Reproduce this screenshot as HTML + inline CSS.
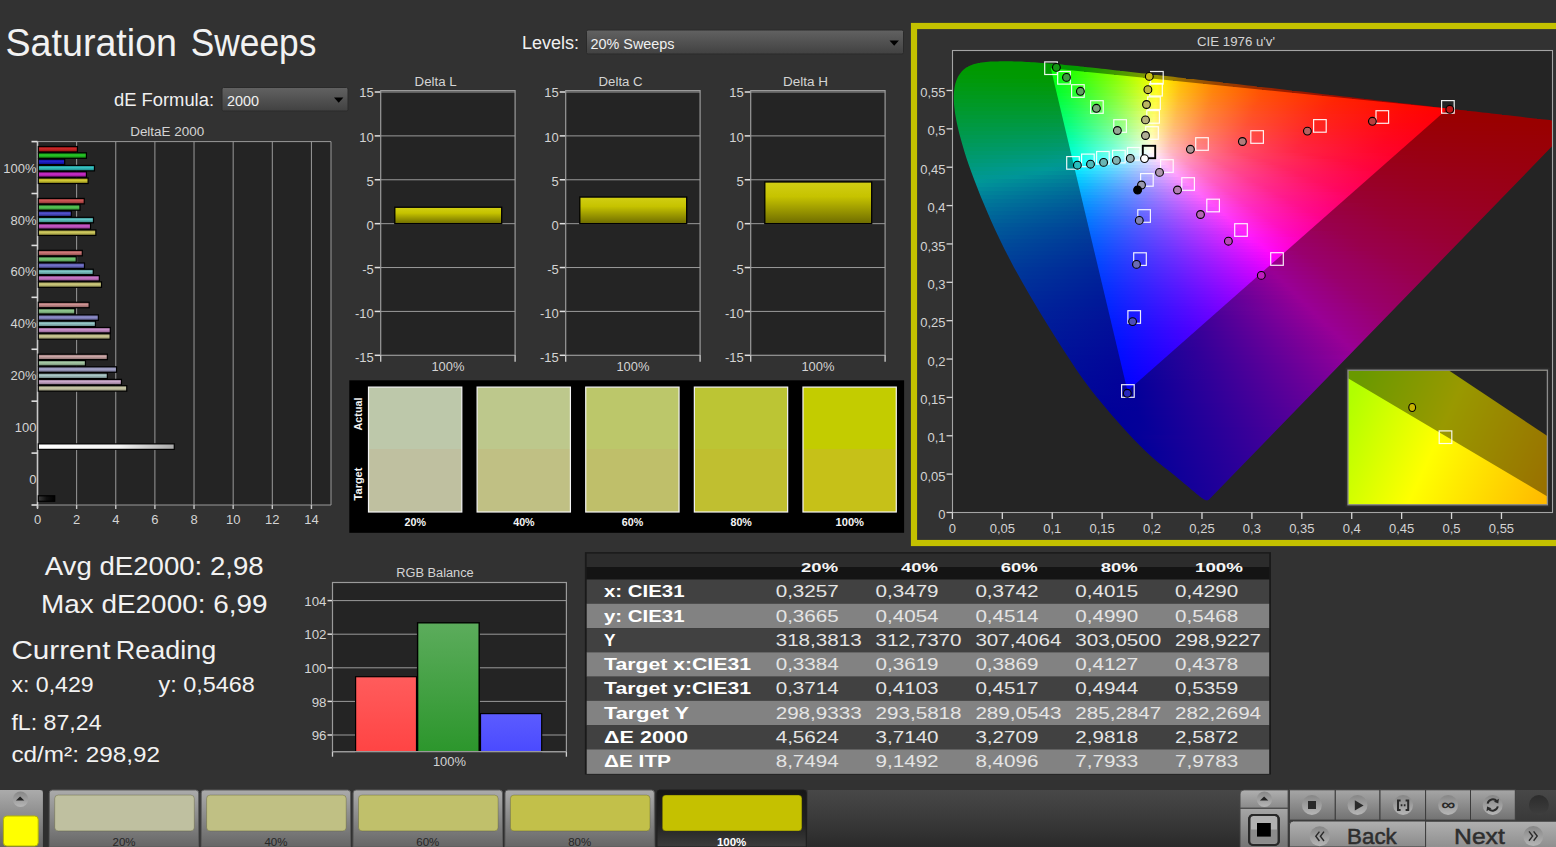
<!DOCTYPE html>
<html><head><meta charset="utf-8"><title>Saturation Sweeps</title>
<style>html,body{margin:0;padding:0;background:#323232;overflow:hidden}svg{display:block}text{font-family:"Liberation Sans",sans-serif}</style>
</head><body>
<svg width="1556" height="847" viewBox="0 0 1556 847">
<defs>
<linearGradient id="cb" x1="0" y1="0" x2="0" y2="1"><stop offset="0" stop-color="#626262"/><stop offset="1" stop-color="#414141"/></linearGradient>
<linearGradient id="b00" x1="0" y1="0" x2="0" y2="1"><stop offset="0" stop-color="#840c0c"/><stop offset="0.4" stop-color="#ce2a2a"/><stop offset="1" stop-color="#840c0c"/></linearGradient>
<linearGradient id="b01" x1="0" y1="0" x2="0" y2="1"><stop offset="0" stop-color="#0c810c"/><stop offset="0.4" stop-color="#2aca2a"/><stop offset="1" stop-color="#0c810c"/></linearGradient>
<linearGradient id="b02" x1="0" y1="0" x2="0" y2="1"><stop offset="0" stop-color="#080887"/><stop offset="0.4" stop-color="#2424d1"/><stop offset="1" stop-color="#080887"/></linearGradient>
<linearGradient id="b03" x1="0" y1="0" x2="0" y2="1"><stop offset="0" stop-color="#167c7c"/><stop offset="0.4" stop-color="#38c3c3"/><stop offset="1" stop-color="#167c7c"/></linearGradient>
<linearGradient id="b04" x1="0" y1="0" x2="0" y2="1"><stop offset="0" stop-color="#831083"/><stop offset="0.4" stop-color="#cc2fcc"/><stop offset="1" stop-color="#831083"/></linearGradient>
<linearGradient id="b05" x1="0" y1="0" x2="0" y2="1"><stop offset="0" stop-color="#8b8416"/><stop offset="0.4" stop-color="#d6ce38"/><stop offset="1" stop-color="#8b8416"/></linearGradient>
<linearGradient id="b10" x1="0" y1="0" x2="0" y2="1"><stop offset="0" stop-color="#842e2e"/><stop offset="0.4" stop-color="#ce5858"/><stop offset="1" stop-color="#842e2e"/></linearGradient>
<linearGradient id="b11" x1="0" y1="0" x2="0" y2="1"><stop offset="0" stop-color="#2e822e"/><stop offset="0.4" stop-color="#58cb58"/><stop offset="1" stop-color="#2e822e"/></linearGradient>
<linearGradient id="b12" x1="0" y1="0" x2="0" y2="1"><stop offset="0" stop-color="#2b2b86"/><stop offset="0.4" stop-color="#5454d0"/><stop offset="1" stop-color="#2b2b86"/></linearGradient>
<linearGradient id="b13" x1="0" y1="0" x2="0" y2="1"><stop offset="0" stop-color="#357e7e"/><stop offset="0.4" stop-color="#62c6c6"/><stop offset="1" stop-color="#357e7e"/></linearGradient>
<linearGradient id="b14" x1="0" y1="0" x2="0" y2="1"><stop offset="0" stop-color="#833083"/><stop offset="0.4" stop-color="#cc5bcc"/><stop offset="1" stop-color="#833083"/></linearGradient>
<linearGradient id="b15" x1="0" y1="0" x2="0" y2="1"><stop offset="0" stop-color="#898435"/><stop offset="0.4" stop-color="#d4ce62"/><stop offset="1" stop-color="#898435"/></linearGradient>
<linearGradient id="b20" x1="0" y1="0" x2="0" y2="1"><stop offset="0" stop-color="#844646"/><stop offset="0.4" stop-color="#ce7878"/><stop offset="1" stop-color="#844646"/></linearGradient>
<linearGradient id="b21" x1="0" y1="0" x2="0" y2="1"><stop offset="0" stop-color="#468346"/><stop offset="0.4" stop-color="#78cc78"/><stop offset="1" stop-color="#468346"/></linearGradient>
<linearGradient id="b22" x1="0" y1="0" x2="0" y2="1"><stop offset="0" stop-color="#434385"/><stop offset="0.4" stop-color="#7676cf"/><stop offset="1" stop-color="#434385"/></linearGradient>
<linearGradient id="b23" x1="0" y1="0" x2="0" y2="1"><stop offset="0" stop-color="#4b8080"/><stop offset="0.4" stop-color="#80c8c8"/><stop offset="1" stop-color="#4b8080"/></linearGradient>
<linearGradient id="b24" x1="0" y1="0" x2="0" y2="1"><stop offset="0" stop-color="#834883"/><stop offset="0.4" stop-color="#cd7bcd"/><stop offset="1" stop-color="#834883"/></linearGradient>
<linearGradient id="b25" x1="0" y1="0" x2="0" y2="1"><stop offset="0" stop-color="#87844b"/><stop offset="0.4" stop-color="#d2ce80"/><stop offset="1" stop-color="#87844b"/></linearGradient>
<linearGradient id="b30" x1="0" y1="0" x2="0" y2="1"><stop offset="0" stop-color="#845959"/><stop offset="0.4" stop-color="#ce9393"/><stop offset="1" stop-color="#845959"/></linearGradient>
<linearGradient id="b31" x1="0" y1="0" x2="0" y2="1"><stop offset="0" stop-color="#598359"/><stop offset="0.4" stop-color="#93cc93"/><stop offset="1" stop-color="#598359"/></linearGradient>
<linearGradient id="b32" x1="0" y1="0" x2="0" y2="1"><stop offset="0" stop-color="#575785"/><stop offset="0.4" stop-color="#9191cf"/><stop offset="1" stop-color="#575785"/></linearGradient>
<linearGradient id="b33" x1="0" y1="0" x2="0" y2="1"><stop offset="0" stop-color="#5d8181"/><stop offset="0.4" stop-color="#98caca"/><stop offset="1" stop-color="#5d8181"/></linearGradient>
<linearGradient id="b34" x1="0" y1="0" x2="0" y2="1"><stop offset="0" stop-color="#845a84"/><stop offset="0.4" stop-color="#cd94cd"/><stop offset="1" stop-color="#845a84"/></linearGradient>
<linearGradient id="b35" x1="0" y1="0" x2="0" y2="1"><stop offset="0" stop-color="#86845d"/><stop offset="0.4" stop-color="#d1ce98"/><stop offset="1" stop-color="#86845d"/></linearGradient>
<linearGradient id="b40" x1="0" y1="0" x2="0" y2="1"><stop offset="0" stop-color="#846a6a"/><stop offset="0.4" stop-color="#cea9a9"/><stop offset="1" stop-color="#846a6a"/></linearGradient>
<linearGradient id="b41" x1="0" y1="0" x2="0" y2="1"><stop offset="0" stop-color="#6a836a"/><stop offset="0.4" stop-color="#a9cda9"/><stop offset="1" stop-color="#6a836a"/></linearGradient>
<linearGradient id="b42" x1="0" y1="0" x2="0" y2="1"><stop offset="0" stop-color="#696985"/><stop offset="0.4" stop-color="#a8a8ce"/><stop offset="1" stop-color="#696985"/></linearGradient>
<linearGradient id="b43" x1="0" y1="0" x2="0" y2="1"><stop offset="0" stop-color="#6c8282"/><stop offset="0.4" stop-color="#adcbcb"/><stop offset="1" stop-color="#6c8282"/></linearGradient>
<linearGradient id="b44" x1="0" y1="0" x2="0" y2="1"><stop offset="0" stop-color="#846a84"/><stop offset="0.4" stop-color="#cdabcd"/><stop offset="1" stop-color="#846a84"/></linearGradient>
<linearGradient id="b45" x1="0" y1="0" x2="0" y2="1"><stop offset="0" stop-color="#85846c"/><stop offset="0.4" stop-color="#cfcead"/><stop offset="1" stop-color="#85846c"/></linearGradient>
<linearGradient id="bw" x1="0" y1="0" x2="1" y2="0"><stop offset="0" stop-color="#fff"/><stop offset="0.6" stop-color="#f4f4f4"/><stop offset="1" stop-color="#a8a8a8"/></linearGradient>
<linearGradient id="bk" x1="0" y1="0" x2="1" y2="0"><stop offset="0" stop-color="#3a3a3a"/><stop offset="0.5" stop-color="#101010"/><stop offset="1" stop-color="#000"/></linearGradient>
<linearGradient id="yb" x1="0" y1="0" x2="0" y2="1"><stop offset="0" stop-color="#d2cf14"/><stop offset="0.35" stop-color="#c6c300"/><stop offset="1" stop-color="#6e6c00"/></linearGradient>
<clipPath id="cplot"><rect x="952.5" y="50.5" width="600.0" height="462.0"/></clipPath>
<clipPath id="cloc" clip-path="url(#cplot)"><path d="M1208.8 499.7L1208.7 499.8L1208.7 499.8L1208.6 499.8L1208.5 499.9L1208.5 499.9L1208.4 500.0L1208.3 500.0L1208.2 500.1L1208.1 500.1L1207.9 500.2L1207.8 500.2L1207.7 500.2L1207.5 500.3L1207.3 500.3L1207.1 500.3L1206.9 500.3L1206.7 500.3L1206.5 500.3L1206.3 500.2L1206.0 500.2L1205.6 500.2L1205.2 500.0L1204.8 499.8L1204.2 499.5L1203.5 499.1L1202.7 498.5L1201.7 497.9L1200.6 497.1L1199.4 496.2L1198.1 495.1L1196.6 493.9L1195.0 492.6L1193.2 491.1L1191.2 489.4L1189.1 487.6L1186.7 485.6L1184.1 483.4L1181.3 481.0L1178.2 478.5L1175.0 475.8L1171.6 473.1L1168.1 470.2L1164.4 467.4L1160.4 464.2L1156.1 460.7L1151.3 456.5L1145.9 451.5L1139.8 445.5L1132.9 438.4L1125.5 430.4L1117.9 421.9L1110.2 413.2L1102.9 404.5L1096.2 396.4L1090.3 388.9L1085.1 382.0L1080.4 375.5L1075.9 369.0L1071.5 362.3L1066.9 355.3L1062.0 347.8L1056.9 339.7L1051.6 331.2L1046.1 322.4L1040.6 313.4L1035.1 304.2L1029.6 295.0L1024.3 285.8L1019.1 276.6L1014.0 267.4L1009.2 258.2L1004.4 249.0L999.9 239.8L995.6 230.8L991.5 221.8L987.7 213.0L984.0 204.3L980.5 195.9L977.3 187.7L974.2 179.8L971.4 172.2L968.8 164.9L966.4 157.9L964.3 151.2L962.4 144.8L960.7 138.8L959.2 133.2L957.9 127.8L956.8 122.7L955.9 118.0L955.1 113.5L954.6 109.3L954.1 105.3L953.9 101.6L953.8 98.1L953.8 94.8L954.0 91.7L954.4 88.8L954.8 86.1L955.4 83.5L956.2 81.1L957.0 78.9L958.0 76.8L959.1 74.9L960.4 73.2L961.7 71.6L963.1 70.1L964.7 68.8L966.3 67.6L968.0 66.6L969.8 65.7L971.6 64.9L973.5 64.2L975.5 63.7L977.5 63.2L979.6 62.8L981.7 62.4L983.9 62.2L986.1 61.9L988.3 61.8L990.6 61.6L993.0 61.5L995.3 61.4L997.6 61.4L1000.0 61.3L1002.4 61.3L1004.7 61.3L1007.1 61.3L1009.5 61.3L1011.8 61.3L1014.2 61.4L1016.6 61.5L1019.0 61.5L1021.5 61.6L1023.9 61.8L1026.4 61.9L1028.9 62.0L1031.5 62.2L1034.1 62.3L1036.7 62.5L1039.3 62.7L1042.0 62.9L1044.7 63.1L1047.5 63.3L1050.3 63.6L1053.1 63.8L1056.0 64.1L1058.9 64.3L1061.9 64.6L1064.9 64.9L1068.0 65.2L1071.1 65.5L1074.2 65.8L1077.4 66.1L1080.7 66.5L1084.0 66.8L1087.4 67.2L1090.9 67.5L1094.4 67.9L1097.9 68.3L1101.6 68.7L1105.2 69.1L1109.0 69.5L1112.8 69.9L1116.7 70.4L1120.6 70.8L1124.6 71.3L1128.7 71.7L1132.8 72.2L1137.1 72.7L1141.3 73.2L1145.7 73.6L1150.1 74.1L1154.7 74.7L1159.2 75.2L1163.9 75.7L1168.6 76.3L1173.4 76.8L1178.2 77.4L1183.2 77.9L1188.2 78.5L1193.3 79.1L1198.4 79.7L1203.6 80.3L1208.9 80.9L1214.3 81.5L1219.7 82.1L1225.2 82.8L1230.8 83.4L1236.4 84.1L1242.1 84.7L1247.9 85.4L1253.7 86.1L1259.5 86.7L1265.4 87.4L1271.3 88.1L1277.3 88.8L1283.4 89.5L1289.4 90.2L1295.5 90.9L1301.6 91.6L1307.7 92.3L1313.8 93.0L1319.8 93.7L1325.8 94.4L1331.7 95.1L1337.6 95.7L1343.5 96.4L1349.3 97.1L1355.2 97.8L1361.0 98.4L1366.9 99.1L1372.6 99.8L1378.4 100.4L1384.0 101.1L1389.6 101.7L1395.1 102.3L1400.4 102.9L1405.6 103.5L1410.8 104.1L1415.8 104.7L1420.8 105.3L1425.6 105.8L1430.4 106.4L1435.0 106.9L1439.6 107.4L1444.0 108.0L1448.3 108.5L1452.5 108.9L1456.5 109.4L1460.5 109.9L1464.3 110.3L1468.1 110.7L1471.8 111.2L1475.4 111.6L1478.9 112.0L1482.3 112.4L1485.6 112.7L1488.6 113.1L1491.4 113.4L1494.0 113.7L1496.4 114.0L1498.9 114.3L1501.6 114.6L1504.5 114.9L1508.0 115.3L1511.9 115.8L1516.3 116.3L1520.9 116.8L1525.6 117.4L1530.2 117.9L1534.4 118.4L1538.3 118.8L1541.6 119.2L1544.7 119.5L1547.3 119.8L1549.7 120.1L1551.9 120.4L1553.9 120.6L1555.7 120.8L1557.4 121.0L1559.0 121.2L1560.6 121.4L1562.2 121.6L1563.8 121.8L1565.5 121.9L1567.0 122.1L1568.5 122.3L1570.0 122.5L1571.2 122.6L1572.4 122.7L1573.3 122.8L1574.1 122.9L1574.6 123.0L1574.8 123.0L1574.7 123.0Z"/></clipPath>
<clipPath id="ctri"><path d="M1447.9 108.4L1050.8 68.3L1127.5 391.1Z"/></clipPath>
<linearGradient id="d8" gradientUnits="userSpaceOnUse" x1="980.0" x2="1039.0" y1="0" y2="0"><stop offset="0.000" stop-color="#009900"/><stop offset="1.000" stop-color="#009900"/></linearGradient>
<linearGradient id="d12" gradientUnits="userSpaceOnUse" x1="968.0" x2="1083.0" y1="0" y2="0"><stop offset="0.000" stop-color="#009900"/><stop offset="0.696" stop-color="#009900"/><stop offset="0.948" stop-color="#039900"/><stop offset="1.000" stop-color="#0c9900"/></linearGradient>
<linearGradient id="d16" gradientUnits="userSpaceOnUse" x1="961.0" x2="1119.0" y1="0" y2="0"><stop offset="0.000" stop-color="#009900"/><stop offset="0.506" stop-color="#009900"/><stop offset="0.734" stop-color="#029900"/><stop offset="1.000" stop-color="#479900"/></linearGradient>
<linearGradient id="d20" gradientUnits="userSpaceOnUse" x1="958.0" x2="1152.0" y1="0" y2="0"><stop offset="0.000" stop-color="#009904"/><stop offset="0.412" stop-color="#009900"/><stop offset="0.619" stop-color="#039900"/><stop offset="0.866" stop-color="#559900"/><stop offset="1.000" stop-color="#8c9900"/></linearGradient>
<linearGradient id="d24" gradientUnits="userSpaceOnUse" x1="956.0" x2="1185.0" y1="0" y2="0"><stop offset="0.000" stop-color="#009908"/><stop offset="0.349" stop-color="#009901"/><stop offset="0.533" stop-color="#029900"/><stop offset="0.742" stop-color="#559900"/><stop offset="0.882" stop-color="#999700"/><stop offset="0.987" stop-color="#996a00"/><stop offset="1.000" stop-color="#996600"/></linearGradient>
<linearGradient id="d28" gradientUnits="userSpaceOnUse" x1="954.0" x2="1222.0" y1="0" y2="0"><stop offset="0.000" stop-color="#00990c"/><stop offset="0.299" stop-color="#009906"/><stop offset="0.466" stop-color="#039901"/><stop offset="0.642" stop-color="#559900"/><stop offset="0.757" stop-color="#999800"/><stop offset="0.847" stop-color="#996b00"/><stop offset="0.981" stop-color="#994400"/><stop offset="1.000" stop-color="#994000"/></linearGradient>
<linearGradient id="d32" gradientUnits="userSpaceOnUse" x1="953.0" x2="1256.0" y1="0" y2="0"><stop offset="0.000" stop-color="#009911"/><stop offset="0.264" stop-color="#00990b"/><stop offset="0.419" stop-color="#039906"/><stop offset="0.571" stop-color="#549900"/><stop offset="0.673" stop-color="#999700"/><stop offset="0.749" stop-color="#996b00"/><stop offset="0.868" stop-color="#994400"/><stop offset="1.000" stop-color="#992b00"/></linearGradient>
<linearGradient id="d36" gradientUnits="userSpaceOnUse" x1="953.0" x2="1291.0" y1="0" y2="0"><stop offset="0.000" stop-color="#009915"/><stop offset="0.237" stop-color="#009910"/><stop offset="0.376" stop-color="#02990c"/><stop offset="0.512" stop-color="#549907"/><stop offset="0.604" stop-color="#999602"/><stop offset="0.672" stop-color="#996a00"/><stop offset="0.778" stop-color="#994300"/><stop offset="0.953" stop-color="#992100"/><stop offset="1.000" stop-color="#991c00"/></linearGradient>
<linearGradient id="d40" gradientUnits="userSpaceOnUse" x1="953.0" x2="1328.0" y1="0" y2="0"><stop offset="0.000" stop-color="#00991a"/><stop offset="0.213" stop-color="#009915"/><stop offset="0.341" stop-color="#039912"/><stop offset="0.461" stop-color="#54990d"/><stop offset="0.541" stop-color="#99980a"/><stop offset="0.603" stop-color="#996b04"/><stop offset="0.696" stop-color="#994300"/><stop offset="0.851" stop-color="#992200"/><stop offset="1.000" stop-color="#991000"/></linearGradient>
<linearGradient id="d44" gradientUnits="userSpaceOnUse" x1="953.0" x2="1363.0" y1="0" y2="0"><stop offset="0.000" stop-color="#00991e"/><stop offset="0.195" stop-color="#00991b"/><stop offset="0.312" stop-color="#029918"/><stop offset="0.422" stop-color="#549914"/><stop offset="0.495" stop-color="#999711"/><stop offset="0.551" stop-color="#996a0a"/><stop offset="0.637" stop-color="#994204"/><stop offset="0.778" stop-color="#992100"/><stop offset="0.973" stop-color="#990a00"/><stop offset="1.000" stop-color="#990800"/></linearGradient>
<linearGradient id="d48" gradientUnits="userSpaceOnUse" x1="953.0" x2="1397.0" y1="0" y2="0"><stop offset="0.000" stop-color="#009923"/><stop offset="0.180" stop-color="#009920"/><stop offset="0.291" stop-color="#02991e"/><stop offset="0.390" stop-color="#54991c"/><stop offset="0.455" stop-color="#999819"/><stop offset="0.505" stop-color="#996c11"/><stop offset="0.581" stop-color="#994409"/><stop offset="0.707" stop-color="#992202"/><stop offset="0.887" stop-color="#990b00"/><stop offset="1.000" stop-color="#990200"/></linearGradient>
<linearGradient id="d52" gradientUnits="userSpaceOnUse" x1="953.0" x2="1432.0" y1="0" y2="0"><stop offset="0.000" stop-color="#009927"/><stop offset="0.167" stop-color="#009926"/><stop offset="0.271" stop-color="#039924"/><stop offset="0.361" stop-color="#549923"/><stop offset="0.422" stop-color="#999721"/><stop offset="0.468" stop-color="#996a17"/><stop offset="0.539" stop-color="#99430d"/><stop offset="0.656" stop-color="#992205"/><stop offset="0.823" stop-color="#990a00"/><stop offset="0.990" stop-color="#990000"/><stop offset="1.000" stop-color="#990000"/></linearGradient>
<linearGradient id="d56" gradientUnits="userSpaceOnUse" x1="953.0" x2="1466.0" y1="0" y2="0"><stop offset="0.000" stop-color="#00992c"/><stop offset="0.156" stop-color="#00992b"/><stop offset="0.253" stop-color="#02992b"/><stop offset="0.337" stop-color="#54992b"/><stop offset="0.394" stop-color="#999629"/><stop offset="0.437" stop-color="#99691d"/><stop offset="0.503" stop-color="#994212"/><stop offset="0.612" stop-color="#992108"/><stop offset="0.768" stop-color="#990a02"/><stop offset="0.924" stop-color="#990000"/><stop offset="1.000" stop-color="#990000"/></linearGradient>
<linearGradient id="d60" gradientUnits="userSpaceOnUse" x1="953.0" x2="1501.0" y1="0" y2="0"><stop offset="0.000" stop-color="#009931"/><stop offset="0.146" stop-color="#009931"/><stop offset="0.239" stop-color="#039932"/><stop offset="0.316" stop-color="#549932"/><stop offset="0.367" stop-color="#999832"/><stop offset="0.405" stop-color="#996b24"/><stop offset="0.464" stop-color="#994517"/><stop offset="0.560" stop-color="#99230c"/><stop offset="0.706" stop-color="#990a04"/><stop offset="0.852" stop-color="#990000"/><stop offset="0.998" stop-color="#990000"/><stop offset="1.000" stop-color="#990000"/></linearGradient>
<linearGradient id="d64" gradientUnits="userSpaceOnUse" x1="953.0" x2="1536.0" y1="0" y2="0"><stop offset="0.000" stop-color="#009936"/><stop offset="0.137" stop-color="#009937"/><stop offset="0.225" stop-color="#029939"/><stop offset="0.297" stop-color="#54993a"/><stop offset="0.345" stop-color="#99973b"/><stop offset="0.381" stop-color="#996a2a"/><stop offset="0.436" stop-color="#99431c"/><stop offset="0.527" stop-color="#992210"/><stop offset="0.664" stop-color="#990a07"/><stop offset="0.801" stop-color="#990002"/><stop offset="0.938" stop-color="#990000"/><stop offset="1.000" stop-color="#990000"/></linearGradient>
<linearGradient id="d68" gradientUnits="userSpaceOnUse" x1="954.0" x2="1552.0" y1="0" y2="0"><stop offset="0.000" stop-color="#00993b"/><stop offset="0.134" stop-color="#00993d"/><stop offset="0.219" stop-color="#029940"/><stop offset="0.288" stop-color="#549943"/><stop offset="0.334" stop-color="#999644"/><stop offset="0.370" stop-color="#996931"/><stop offset="0.423" stop-color="#994221"/><stop offset="0.512" stop-color="#992113"/><stop offset="0.645" stop-color="#990909"/><stop offset="0.776" stop-color="#990004"/><stop offset="0.910" stop-color="#990000"/><stop offset="1.000" stop-color="#990000"/></linearGradient>
<linearGradient id="d72" gradientUnits="userSpaceOnUse" x1="955.0" x2="1552.0" y1="0" y2="0"><stop offset="0.000" stop-color="#009940"/><stop offset="0.134" stop-color="#009944"/><stop offset="0.219" stop-color="#039947"/><stop offset="0.286" stop-color="#54994b"/><stop offset="0.332" stop-color="#99984e"/><stop offset="0.365" stop-color="#996b39"/><stop offset="0.417" stop-color="#994427"/><stop offset="0.503" stop-color="#992317"/><stop offset="0.637" stop-color="#99090c"/><stop offset="0.767" stop-color="#990006"/><stop offset="0.901" stop-color="#990002"/><stop offset="1.000" stop-color="#990000"/></linearGradient>
<linearGradient id="d76" gradientUnits="userSpaceOnUse" x1="956.0" x2="1552.0" y1="0" y2="0"><stop offset="0.000" stop-color="#009945"/><stop offset="0.134" stop-color="#00994a"/><stop offset="0.218" stop-color="#02994f"/><stop offset="0.285" stop-color="#549954"/><stop offset="0.331" stop-color="#999657"/><stop offset="0.364" stop-color="#996a40"/><stop offset="0.416" stop-color="#99432c"/><stop offset="0.502" stop-color="#99221b"/><stop offset="0.636" stop-color="#99090e"/><stop offset="0.762" stop-color="#990008"/><stop offset="0.896" stop-color="#990003"/><stop offset="1.000" stop-color="#990001"/></linearGradient>
<linearGradient id="d80" gradientUnits="userSpaceOnUse" x1="957.0" x2="1552.0" y1="0" y2="0"><stop offset="0.000" stop-color="#00994a"/><stop offset="0.134" stop-color="#009951"/><stop offset="0.218" stop-color="#029957"/><stop offset="0.284" stop-color="#54995d"/><stop offset="0.328" stop-color="#999862"/><stop offset="0.361" stop-color="#996b48"/><stop offset="0.412" stop-color="#994432"/><stop offset="0.494" stop-color="#99231f"/><stop offset="0.629" stop-color="#990911"/><stop offset="0.755" stop-color="#99000a"/><stop offset="0.889" stop-color="#990005"/><stop offset="1.000" stop-color="#990002"/></linearGradient>
<linearGradient id="d84" gradientUnits="userSpaceOnUse" x1="958.0" x2="1552.0" y1="0" y2="0"><stop offset="0.000" stop-color="#009950"/><stop offset="0.135" stop-color="#009958"/><stop offset="0.219" stop-color="#03995f"/><stop offset="0.283" stop-color="#549966"/><stop offset="0.327" stop-color="#99976b"/><stop offset="0.359" stop-color="#996b50"/><stop offset="0.409" stop-color="#994438"/><stop offset="0.492" stop-color="#992223"/><stop offset="0.626" stop-color="#990813"/><stop offset="0.747" stop-color="#99000c"/><stop offset="0.882" stop-color="#990007"/><stop offset="1.000" stop-color="#990004"/></linearGradient>
<linearGradient id="d88" gradientUnits="userSpaceOnUse" x1="959.0" x2="1552.0" y1="0" y2="0"><stop offset="0.000" stop-color="#009955"/><stop offset="0.135" stop-color="#00995f"/><stop offset="0.218" stop-color="#029967"/><stop offset="0.282" stop-color="#549970"/><stop offset="0.325" stop-color="#999675"/><stop offset="0.358" stop-color="#996a58"/><stop offset="0.406" stop-color="#99443e"/><stop offset="0.487" stop-color="#992227"/><stop offset="0.622" stop-color="#990816"/><stop offset="0.740" stop-color="#99000e"/><stop offset="0.875" stop-color="#990008"/><stop offset="1.000" stop-color="#990005"/></linearGradient>
<linearGradient id="d92" gradientUnits="userSpaceOnUse" x1="960.0" x2="1552.0" y1="0" y2="0"><stop offset="0.000" stop-color="#00995b"/><stop offset="0.135" stop-color="#009966"/><stop offset="0.218" stop-color="#039970"/><stop offset="0.280" stop-color="#54997a"/><stop offset="0.323" stop-color="#999881"/><stop offset="0.355" stop-color="#996b60"/><stop offset="0.404" stop-color="#994344"/><stop offset="0.483" stop-color="#99222c"/><stop offset="0.618" stop-color="#990819"/><stop offset="0.735" stop-color="#990010"/><stop offset="0.870" stop-color="#99000a"/><stop offset="1.000" stop-color="#990006"/></linearGradient>
<linearGradient id="d96" gradientUnits="userSpaceOnUse" x1="961.0" x2="1552.0" y1="0" y2="0"><stop offset="0.000" stop-color="#009961"/><stop offset="0.135" stop-color="#00996d"/><stop offset="0.217" stop-color="#019978"/><stop offset="0.279" stop-color="#549984"/><stop offset="0.321" stop-color="#99978c"/><stop offset="0.354" stop-color="#996968"/><stop offset="0.403" stop-color="#994249"/><stop offset="0.484" stop-color="#99212f"/><stop offset="0.619" stop-color="#99071b"/><stop offset="0.731" stop-color="#990012"/><stop offset="0.866" stop-color="#99000c"/><stop offset="1.000" stop-color="#990007"/></linearGradient>
<linearGradient id="d100" gradientUnits="userSpaceOnUse" x1="962.0" x2="1550.0" y1="0" y2="0"><stop offset="0.000" stop-color="#009967"/><stop offset="0.136" stop-color="#009975"/><stop offset="0.218" stop-color="#029982"/><stop offset="0.279" stop-color="#54998f"/><stop offset="0.320" stop-color="#999999"/><stop offset="0.350" stop-color="#996c73"/><stop offset="0.396" stop-color="#994552"/><stop offset="0.473" stop-color="#992336"/><stop offset="0.609" stop-color="#99081f"/><stop offset="0.721" stop-color="#990015"/><stop offset="0.857" stop-color="#99000e"/><stop offset="0.993" stop-color="#990009"/><stop offset="1.000" stop-color="#990009"/></linearGradient>
<linearGradient id="d104" gradientUnits="userSpaceOnUse" x1="963.0" x2="1546.0" y1="0" y2="0"><stop offset="0.000" stop-color="#00996d"/><stop offset="0.137" stop-color="#00997d"/><stop offset="0.220" stop-color="#03998b"/><stop offset="0.288" stop-color="#5f9699"/><stop offset="0.329" stop-color="#998897"/><stop offset="0.364" stop-color="#995e70"/><stop offset="0.419" stop-color="#99384e"/><stop offset="0.511" stop-color="#991931"/><stop offset="0.648" stop-color="#99031d"/><stop offset="0.786" stop-color="#990013"/><stop offset="0.923" stop-color="#99000d"/><stop offset="1.000" stop-color="#99000a"/></linearGradient>
<linearGradient id="d108" gradientUnits="userSpaceOnUse" x1="964.0" x2="1542.0" y1="0" y2="0"><stop offset="0.000" stop-color="#009973"/><stop offset="0.138" stop-color="#009985"/><stop offset="0.220" stop-color="#029995"/><stop offset="0.275" stop-color="#478f99"/><stop offset="0.337" stop-color="#997d97"/><stop offset="0.375" stop-color="#99546f"/><stop offset="0.436" stop-color="#99304c"/><stop offset="0.542" stop-color="#99122f"/><stop offset="0.680" stop-color="#99001d"/><stop offset="0.818" stop-color="#990013"/><stop offset="0.957" stop-color="#99000d"/><stop offset="1.000" stop-color="#99000c"/></linearGradient>
<linearGradient id="d112" gradientUnits="userSpaceOnUse" x1="966.0" x2="1538.0" y1="0" y2="0"><stop offset="0.000" stop-color="#00997a"/><stop offset="0.140" stop-color="#00998e"/><stop offset="0.212" stop-color="#009599"/><stop offset="0.222" stop-color="#049399"/><stop offset="0.344" stop-color="#997297"/><stop offset="0.386" stop-color="#994b6e"/><stop offset="0.453" stop-color="#99294b"/><stop offset="0.570" stop-color="#990d2e"/><stop offset="0.701" stop-color="#99001e"/><stop offset="0.841" stop-color="#990014"/><stop offset="0.981" stop-color="#99000e"/><stop offset="1.000" stop-color="#99000d"/></linearGradient>
<linearGradient id="d116" gradientUnits="userSpaceOnUse" x1="968.0" x2="1534.0" y1="0" y2="0"><stop offset="0.000" stop-color="#009981"/><stop offset="0.141" stop-color="#009997"/><stop offset="0.221" stop-color="#038a99"/><stop offset="0.352" stop-color="#996897"/><stop offset="0.396" stop-color="#99436e"/><stop offset="0.466" stop-color="#99244b"/><stop offset="0.590" stop-color="#99092e"/><stop offset="0.703" stop-color="#990020"/><stop offset="0.845" stop-color="#990016"/><stop offset="0.986" stop-color="#99000f"/><stop offset="1.000" stop-color="#99000f"/></linearGradient>
<linearGradient id="d120" gradientUnits="userSpaceOnUse" x1="969.0" x2="1530.0" y1="0" y2="0"><stop offset="0.000" stop-color="#009988"/><stop offset="0.125" stop-color="#009599"/><stop offset="0.221" stop-color="#028299"/><stop offset="0.360" stop-color="#996097"/><stop offset="0.406" stop-color="#993d6e"/><stop offset="0.481" stop-color="#991f4b"/><stop offset="0.611" stop-color="#99062e"/><stop offset="0.718" stop-color="#990021"/><stop offset="0.861" stop-color="#990017"/><stop offset="1.000" stop-color="#990010"/></linearGradient>
<linearGradient id="d124" gradientUnits="userSpaceOnUse" x1="970.0" x2="1527.0" y1="0" y2="0"><stop offset="0.000" stop-color="#00998f"/><stop offset="0.084" stop-color="#009599"/><stop offset="0.223" stop-color="#027a99"/><stop offset="0.363" stop-color="#955a99"/><stop offset="0.377" stop-color="#99508e"/><stop offset="0.431" stop-color="#993066"/><stop offset="0.519" stop-color="#991544"/><stop offset="0.662" stop-color="#99002a"/><stop offset="0.806" stop-color="#99001c"/><stop offset="0.950" stop-color="#990014"/><stop offset="1.000" stop-color="#990012"/></linearGradient>
<linearGradient id="d128" gradientUnits="userSpaceOnUse" x1="972.0" x2="1523.0" y1="0" y2="0"><stop offset="0.000" stop-color="#009996"/><stop offset="0.145" stop-color="#008299"/><stop offset="0.223" stop-color="#037399"/><stop offset="0.368" stop-color="#935299"/><stop offset="0.379" stop-color="#994d94"/><stop offset="0.432" stop-color="#992f6c"/><stop offset="0.517" stop-color="#991549"/><stop offset="0.662" stop-color="#99002d"/><stop offset="0.808" stop-color="#99001e"/><stop offset="0.953" stop-color="#990016"/><stop offset="1.000" stop-color="#990013"/></linearGradient>
<linearGradient id="d132" gradientUnits="userSpaceOnUse" x1="973.0" x2="1519.0" y1="0" y2="0"><stop offset="0.000" stop-color="#009499"/><stop offset="0.147" stop-color="#007b99"/><stop offset="0.225" stop-color="#036c99"/><stop offset="0.372" stop-color="#8d4d99"/><stop offset="0.386" stop-color="#994896"/><stop offset="0.441" stop-color="#992b6d"/><stop offset="0.529" stop-color="#99124a"/><stop offset="0.674" stop-color="#99002e"/><stop offset="0.821" stop-color="#99001f"/><stop offset="0.967" stop-color="#990017"/><stop offset="1.000" stop-color="#990015"/></linearGradient>
<linearGradient id="d136" gradientUnits="userSpaceOnUse" x1="975.0" x2="1515.0" y1="0" y2="0"><stop offset="0.000" stop-color="#008d99"/><stop offset="0.148" stop-color="#007499"/><stop offset="0.224" stop-color="#026699"/><stop offset="0.372" stop-color="#874899"/><stop offset="0.394" stop-color="#994196"/><stop offset="0.452" stop-color="#99266d"/><stop offset="0.544" stop-color="#990e4a"/><stop offset="0.676" stop-color="#990031"/><stop offset="0.824" stop-color="#990021"/><stop offset="0.972" stop-color="#990018"/><stop offset="1.000" stop-color="#990017"/></linearGradient>
<linearGradient id="d140" gradientUnits="userSpaceOnUse" x1="977.0" x2="1511.0" y1="0" y2="0"><stop offset="0.000" stop-color="#008699"/><stop offset="0.150" stop-color="#006e99"/><stop offset="0.225" stop-color="#026199"/><stop offset="0.375" stop-color="#824399"/><stop offset="0.403" stop-color="#993b96"/><stop offset="0.463" stop-color="#99226d"/><stop offset="0.560" stop-color="#990b4a"/><stop offset="0.676" stop-color="#990034"/><stop offset="0.826" stop-color="#990024"/><stop offset="0.976" stop-color="#99001a"/><stop offset="1.000" stop-color="#990019"/></linearGradient>
<linearGradient id="d144" gradientUnits="userSpaceOnUse" x1="979.0" x2="1507.0" y1="0" y2="0"><stop offset="0.000" stop-color="#008099"/><stop offset="0.152" stop-color="#006899"/><stop offset="0.225" stop-color="#035b99"/><stop offset="0.377" stop-color="#7e3e99"/><stop offset="0.411" stop-color="#993696"/><stop offset="0.473" stop-color="#991e6d"/><stop offset="0.574" stop-color="#99094a"/><stop offset="0.678" stop-color="#990036"/><stop offset="0.830" stop-color="#990026"/><stop offset="0.981" stop-color="#99001b"/><stop offset="1.000" stop-color="#99001a"/></linearGradient>
<linearGradient id="d148" gradientUnits="userSpaceOnUse" x1="980.0" x2="1503.0" y1="0" y2="0"><stop offset="0.000" stop-color="#007a99"/><stop offset="0.153" stop-color="#006399"/><stop offset="0.228" stop-color="#035699"/><stop offset="0.380" stop-color="#7a3a99"/><stop offset="0.421" stop-color="#993196"/><stop offset="0.486" stop-color="#991a6e"/><stop offset="0.591" stop-color="#99064a"/><stop offset="0.690" stop-color="#990038"/><stop offset="0.843" stop-color="#990027"/><stop offset="0.996" stop-color="#99001c"/><stop offset="1.000" stop-color="#99001c"/></linearGradient>
<linearGradient id="d152" gradientUnits="userSpaceOnUse" x1="982.0" x2="1499.0" y1="0" y2="0"><stop offset="0.000" stop-color="#007599"/><stop offset="0.155" stop-color="#005e99"/><stop offset="0.226" stop-color="#025299"/><stop offset="0.381" stop-color="#753699"/><stop offset="0.429" stop-color="#992c96"/><stop offset="0.499" stop-color="#99166d"/><stop offset="0.609" stop-color="#99034a"/><stop offset="0.764" stop-color="#990031"/><stop offset="0.919" stop-color="#990023"/><stop offset="1.000" stop-color="#99001e"/></linearGradient>
<linearGradient id="d156" gradientUnits="userSpaceOnUse" x1="983.0" x2="1495.0" y1="0" y2="0"><stop offset="0.000" stop-color="#007099"/><stop offset="0.156" stop-color="#005999"/><stop offset="0.229" stop-color="#034e99"/><stop offset="0.385" stop-color="#723299"/><stop offset="0.439" stop-color="#992796"/><stop offset="0.512" stop-color="#99126d"/><stop offset="0.627" stop-color="#99004a"/><stop offset="0.783" stop-color="#990032"/><stop offset="0.939" stop-color="#990024"/><stop offset="1.000" stop-color="#990020"/></linearGradient>
<linearGradient id="d160" gradientUnits="userSpaceOnUse" x1="985.0" x2="1492.0" y1="0" y2="0"><stop offset="0.000" stop-color="#006b99"/><stop offset="0.158" stop-color="#005499"/><stop offset="0.229" stop-color="#034999"/><stop offset="0.387" stop-color="#6e2f99"/><stop offset="0.448" stop-color="#992396"/><stop offset="0.523" stop-color="#990f6d"/><stop offset="0.643" stop-color="#99004a"/><stop offset="0.801" stop-color="#990032"/><stop offset="0.959" stop-color="#990025"/><stop offset="1.000" stop-color="#990022"/></linearGradient>
<linearGradient id="d164" gradientUnits="userSpaceOnUse" x1="987.0" x2="1488.0" y1="0" y2="0"><stop offset="0.000" stop-color="#006699"/><stop offset="0.160" stop-color="#005099"/><stop offset="0.228" stop-color="#024699"/><stop offset="0.387" stop-color="#6a2c99"/><stop offset="0.457" stop-color="#991f97"/><stop offset="0.535" stop-color="#990c6e"/><stop offset="0.649" stop-color="#99004d"/><stop offset="0.808" stop-color="#990034"/><stop offset="0.968" stop-color="#990026"/><stop offset="1.000" stop-color="#990024"/></linearGradient>
<linearGradient id="d168" gradientUnits="userSpaceOnUse" x1="989.0" x2="1484.0" y1="0" y2="0"><stop offset="0.000" stop-color="#006299"/><stop offset="0.162" stop-color="#004c99"/><stop offset="0.228" stop-color="#024299"/><stop offset="0.390" stop-color="#672999"/><stop offset="0.467" stop-color="#991b97"/><stop offset="0.547" stop-color="#990a6e"/><stop offset="0.648" stop-color="#990050"/><stop offset="0.810" stop-color="#990037"/><stop offset="0.972" stop-color="#990028"/><stop offset="1.000" stop-color="#990026"/></linearGradient>
<linearGradient id="d172" gradientUnits="userSpaceOnUse" x1="990.0" x2="1480.0" y1="0" y2="0"><stop offset="0.000" stop-color="#005d99"/><stop offset="0.163" stop-color="#004899"/><stop offset="0.231" stop-color="#033f99"/><stop offset="0.394" stop-color="#652699"/><stop offset="0.478" stop-color="#991897"/><stop offset="0.561" stop-color="#99076e"/><stop offset="0.655" stop-color="#990053"/><stop offset="0.818" stop-color="#990038"/><stop offset="0.982" stop-color="#990029"/><stop offset="1.000" stop-color="#990028"/></linearGradient>
<linearGradient id="d176" gradientUnits="userSpaceOnUse" x1="992.0" x2="1476.0" y1="0" y2="0"><stop offset="0.000" stop-color="#005999"/><stop offset="0.165" stop-color="#004499"/><stop offset="0.231" stop-color="#033b99"/><stop offset="0.397" stop-color="#622399"/><stop offset="0.488" stop-color="#991497"/><stop offset="0.574" stop-color="#99046e"/><stop offset="0.686" stop-color="#990050"/><stop offset="0.851" stop-color="#990037"/><stop offset="1.000" stop-color="#99002a"/></linearGradient>
<linearGradient id="d180" gradientUnits="userSpaceOnUse" x1="994.0" x2="1472.0" y1="0" y2="0"><stop offset="0.000" stop-color="#005699"/><stop offset="0.167" stop-color="#004199"/><stop offset="0.232" stop-color="#033899"/><stop offset="0.400" stop-color="#602199"/><stop offset="0.498" stop-color="#991197"/><stop offset="0.588" stop-color="#99026e"/><stop offset="0.732" stop-color="#99004b"/><stop offset="0.900" stop-color="#990035"/><stop offset="1.000" stop-color="#99002c"/></linearGradient>
<linearGradient id="d184" gradientUnits="userSpaceOnUse" x1="996.0" x2="1468.0" y1="0" y2="0"><stop offset="0.000" stop-color="#005299"/><stop offset="0.169" stop-color="#003e99"/><stop offset="0.231" stop-color="#033699"/><stop offset="0.400" stop-color="#5d1e99"/><stop offset="0.508" stop-color="#990e97"/><stop offset="0.602" stop-color="#99006e"/><stop offset="0.752" stop-color="#99004b"/><stop offset="0.922" stop-color="#990035"/><stop offset="1.000" stop-color="#99002f"/></linearGradient>
<linearGradient id="d188" gradientUnits="userSpaceOnUse" x1="998.0" x2="1464.0" y1="0" y2="0"><stop offset="0.000" stop-color="#004e99"/><stop offset="0.172" stop-color="#003a99"/><stop offset="0.232" stop-color="#033399"/><stop offset="0.403" stop-color="#5b1c99"/><stop offset="0.521" stop-color="#990b96"/><stop offset="0.620" stop-color="#99006d"/><stop offset="0.779" stop-color="#99004a"/><stop offset="0.951" stop-color="#990035"/><stop offset="1.000" stop-color="#990031"/></linearGradient>
<linearGradient id="d192" gradientUnits="userSpaceOnUse" x1="999.0" x2="1461.0" y1="0" y2="0"><stop offset="0.000" stop-color="#004b99"/><stop offset="0.173" stop-color="#003799"/><stop offset="0.234" stop-color="#033099"/><stop offset="0.407" stop-color="#591a99"/><stop offset="0.532" stop-color="#990896"/><stop offset="0.621" stop-color="#990071"/><stop offset="0.777" stop-color="#99004d"/><stop offset="0.950" stop-color="#990038"/><stop offset="1.000" stop-color="#990033"/></linearGradient>
<linearGradient id="d196" gradientUnits="userSpaceOnUse" x1="1001.0" x2="1457.0" y1="0" y2="0"><stop offset="0.000" stop-color="#004899"/><stop offset="0.175" stop-color="#003599"/><stop offset="0.235" stop-color="#042e99"/><stop offset="0.410" stop-color="#571899"/><stop offset="0.544" stop-color="#990696"/><stop offset="0.629" stop-color="#990073"/><stop offset="0.787" stop-color="#99004f"/><stop offset="0.963" stop-color="#990039"/><stop offset="1.000" stop-color="#990036"/></linearGradient>
<linearGradient id="d200" gradientUnits="userSpaceOnUse" x1="1003.0" x2="1453.0" y1="0" y2="0"><stop offset="0.000" stop-color="#004599"/><stop offset="0.178" stop-color="#003299"/><stop offset="0.233" stop-color="#032b99"/><stop offset="0.411" stop-color="#541699"/><stop offset="0.556" stop-color="#990396"/><stop offset="0.664" stop-color="#99006d"/><stop offset="0.840" stop-color="#99004a"/><stop offset="1.000" stop-color="#990038"/></linearGradient>
<linearGradient id="d204" gradientUnits="userSpaceOnUse" x1="1005.0" x2="1449.0" y1="0" y2="0"><stop offset="0.000" stop-color="#004299"/><stop offset="0.180" stop-color="#002f99"/><stop offset="0.234" stop-color="#032999"/><stop offset="0.414" stop-color="#521499"/><stop offset="0.568" stop-color="#990196"/><stop offset="0.682" stop-color="#99006d"/><stop offset="0.863" stop-color="#99004a"/><stop offset="1.000" stop-color="#99003b"/></linearGradient>
<linearGradient id="d208" gradientUnits="userSpaceOnUse" x1="1008.0" x2="1445.0" y1="0" y2="0"><stop offset="0.000" stop-color="#003f99"/><stop offset="0.183" stop-color="#002c99"/><stop offset="0.233" stop-color="#032799"/><stop offset="0.416" stop-color="#511299"/><stop offset="0.579" stop-color="#990096"/><stop offset="0.698" stop-color="#99006d"/><stop offset="0.881" stop-color="#99004b"/><stop offset="1.000" stop-color="#99003d"/></linearGradient>
<linearGradient id="d212" gradientUnits="userSpaceOnUse" x1="1010.0" x2="1441.0" y1="0" y2="0"><stop offset="0.000" stop-color="#003c99"/><stop offset="0.186" stop-color="#002a99"/><stop offset="0.234" stop-color="#042599"/><stop offset="0.420" stop-color="#4f1199"/><stop offset="0.592" stop-color="#990096"/><stop offset="0.715" stop-color="#99006d"/><stop offset="0.900" stop-color="#99004c"/><stop offset="1.000" stop-color="#990040"/></linearGradient>
<linearGradient id="d216" gradientUnits="userSpaceOnUse" x1="1012.0" x2="1437.0" y1="0" y2="0"><stop offset="0.000" stop-color="#003999"/><stop offset="0.188" stop-color="#002799"/><stop offset="0.235" stop-color="#042399"/><stop offset="0.424" stop-color="#4e0f99"/><stop offset="0.586" stop-color="#930099"/><stop offset="0.614" stop-color="#990092"/><stop offset="0.746" stop-color="#99006a"/><stop offset="0.934" stop-color="#99004a"/><stop offset="1.000" stop-color="#990043"/></linearGradient>
<linearGradient id="d220" gradientUnits="userSpaceOnUse" x1="1014.0" x2="1433.0" y1="0" y2="0"><stop offset="0.000" stop-color="#003799"/><stop offset="0.191" stop-color="#002599"/><stop offset="0.236" stop-color="#042199"/><stop offset="0.427" stop-color="#4d0d99"/><stop offset="0.582" stop-color="#8c0099"/><stop offset="0.621" stop-color="#990095"/><stop offset="0.754" stop-color="#99006c"/><stop offset="0.945" stop-color="#99004c"/><stop offset="1.000" stop-color="#990046"/></linearGradient>
<linearGradient id="d224" gradientUnits="userSpaceOnUse" x1="1016.0" x2="1429.0" y1="0" y2="0"><stop offset="0.000" stop-color="#003599"/><stop offset="0.194" stop-color="#002399"/><stop offset="0.235" stop-color="#031f99"/><stop offset="0.429" stop-color="#4a0c99"/><stop offset="0.579" stop-color="#860099"/><stop offset="0.634" stop-color="#990096"/><stop offset="0.772" stop-color="#99006c"/><stop offset="0.966" stop-color="#99004d"/><stop offset="1.000" stop-color="#990049"/></linearGradient>
<linearGradient id="d228" gradientUnits="userSpaceOnUse" x1="1018.0" x2="1426.0" y1="0" y2="0"><stop offset="0.000" stop-color="#003299"/><stop offset="0.196" stop-color="#002199"/><stop offset="0.238" stop-color="#041d99"/><stop offset="0.434" stop-color="#4a0a99"/><stop offset="0.576" stop-color="#800099"/><stop offset="0.647" stop-color="#990096"/><stop offset="0.789" stop-color="#99006d"/><stop offset="0.985" stop-color="#99004d"/><stop offset="1.000" stop-color="#99004b"/></linearGradient>
<linearGradient id="d232" gradientUnits="userSpaceOnUse" x1="1020.0" x2="1422.0" y1="0" y2="0"><stop offset="0.000" stop-color="#003099"/><stop offset="0.199" stop-color="#001f99"/><stop offset="0.239" stop-color="#051b99"/><stop offset="0.438" stop-color="#490999"/><stop offset="0.572" stop-color="#7a0099"/><stop offset="0.662" stop-color="#990096"/><stop offset="0.808" stop-color="#99006d"/><stop offset="1.000" stop-color="#99004f"/></linearGradient>
<linearGradient id="d236" gradientUnits="userSpaceOnUse" x1="1023.0" x2="1418.0" y1="0" y2="0"><stop offset="0.000" stop-color="#002e99"/><stop offset="0.203" stop-color="#001d99"/><stop offset="0.241" stop-color="#061a99"/><stop offset="0.443" stop-color="#490799"/><stop offset="0.572" stop-color="#760099"/><stop offset="0.676" stop-color="#990096"/><stop offset="0.828" stop-color="#99006d"/><stop offset="1.000" stop-color="#990052"/></linearGradient>
<linearGradient id="d240" gradientUnits="userSpaceOnUse" x1="1025.0" x2="1414.0" y1="0" y2="0"><stop offset="0.000" stop-color="#002b99"/><stop offset="0.206" stop-color="#001b99"/><stop offset="0.247" stop-color="#071799"/><stop offset="0.452" stop-color="#490599"/><stop offset="0.584" stop-color="#760099"/><stop offset="0.692" stop-color="#990096"/><stop offset="0.848" stop-color="#99006d"/><stop offset="1.000" stop-color="#990055"/></linearGradient>
<linearGradient id="d244" gradientUnits="userSpaceOnUse" x1="1028.0" x2="1410.0" y1="0" y2="0"><stop offset="0.000" stop-color="#002999"/><stop offset="0.209" stop-color="#001999"/><stop offset="0.335" stop-color="#220f99"/><stop offset="0.545" stop-color="#650099"/><stop offset="0.707" stop-color="#990096"/><stop offset="0.869" stop-color="#99006d"/><stop offset="1.000" stop-color="#990059"/></linearGradient>
<linearGradient id="d248" gradientUnits="userSpaceOnUse" x1="1030.0" x2="1406.0" y1="0" y2="0"><stop offset="0.000" stop-color="#002799"/><stop offset="0.213" stop-color="#001799"/><stop offset="0.426" stop-color="#3c0699"/><stop offset="0.566" stop-color="#680099"/><stop offset="0.723" stop-color="#990096"/><stop offset="0.891" stop-color="#99006d"/><stop offset="1.000" stop-color="#99005c"/></linearGradient>
<linearGradient id="d252" gradientUnits="userSpaceOnUse" x1="1032.0" x2="1402.0" y1="0" y2="0"><stop offset="0.000" stop-color="#002599"/><stop offset="0.216" stop-color="#001699"/><stop offset="0.432" stop-color="#3c0599"/><stop offset="0.600" stop-color="#6f0099"/><stop offset="0.741" stop-color="#990096"/><stop offset="0.916" stop-color="#99006d"/><stop offset="1.000" stop-color="#990060"/></linearGradient>
<linearGradient id="d256" gradientUnits="userSpaceOnUse" x1="1035.0" x2="1398.0" y1="0" y2="0"><stop offset="0.000" stop-color="#002399"/><stop offset="0.220" stop-color="#011499"/><stop offset="0.441" stop-color="#3d0399"/><stop offset="0.661" stop-color="#7e0099"/><stop offset="0.758" stop-color="#990096"/><stop offset="0.939" stop-color="#99006d"/><stop offset="1.000" stop-color="#990063"/></linearGradient>
<linearGradient id="d260" gradientUnits="userSpaceOnUse" x1="1038.0" x2="1394.0" y1="0" y2="0"><stop offset="0.000" stop-color="#002199"/><stop offset="0.225" stop-color="#021299"/><stop offset="0.449" stop-color="#3e0199"/><stop offset="0.674" stop-color="#7e0099"/><stop offset="0.775" stop-color="#990096"/><stop offset="0.963" stop-color="#99006d"/><stop offset="1.000" stop-color="#990067"/></linearGradient>
<linearGradient id="d264" gradientUnits="userSpaceOnUse" x1="1040.0" x2="1391.0" y1="0" y2="0"><stop offset="0.000" stop-color="#002099"/><stop offset="0.225" stop-color="#021199"/><stop offset="0.453" stop-color="#3d0099"/><stop offset="0.681" stop-color="#7c0099"/><stop offset="0.792" stop-color="#990096"/><stop offset="0.986" stop-color="#99006d"/><stop offset="1.000" stop-color="#99006b"/></linearGradient>
<linearGradient id="d268" gradientUnits="userSpaceOnUse" x1="1042.0" x2="1387.0" y1="0" y2="0"><stop offset="0.000" stop-color="#001e99"/><stop offset="0.226" stop-color="#030f99"/><stop offset="0.458" stop-color="#3c0099"/><stop offset="0.690" stop-color="#7a0099"/><stop offset="0.812" stop-color="#990096"/><stop offset="1.000" stop-color="#99006f"/></linearGradient>
<linearGradient id="d272" gradientUnits="userSpaceOnUse" x1="1045.0" x2="1383.0" y1="0" y2="0"><stop offset="0.000" stop-color="#001c99"/><stop offset="0.225" stop-color="#030e99"/><stop offset="0.462" stop-color="#3c0099"/><stop offset="0.698" stop-color="#780099"/><stop offset="0.831" stop-color="#990096"/><stop offset="1.000" stop-color="#990073"/></linearGradient>
<linearGradient id="d276" gradientUnits="userSpaceOnUse" x1="1047.0" x2="1379.0" y1="0" y2="0"><stop offset="0.000" stop-color="#001b99"/><stop offset="0.226" stop-color="#030d99"/><stop offset="0.467" stop-color="#3b0099"/><stop offset="0.708" stop-color="#760099"/><stop offset="0.855" stop-color="#990096"/><stop offset="1.000" stop-color="#990078"/></linearGradient>
<linearGradient id="d280" gradientUnits="userSpaceOnUse" x1="1050.0" x2="1375.0" y1="0" y2="0"><stop offset="0.000" stop-color="#001999"/><stop offset="0.222" stop-color="#030c99"/><stop offset="0.468" stop-color="#390099"/><stop offset="0.714" stop-color="#740099"/><stop offset="0.877" stop-color="#990096"/><stop offset="1.000" stop-color="#99007c"/></linearGradient>
<linearGradient id="d284" gradientUnits="userSpaceOnUse" x1="1052.0" x2="1371.0" y1="0" y2="0"><stop offset="0.000" stop-color="#001899"/><stop offset="0.223" stop-color="#030b99"/><stop offset="0.470" stop-color="#380099"/><stop offset="0.721" stop-color="#710099"/><stop offset="0.900" stop-color="#990096"/><stop offset="1.000" stop-color="#990081"/></linearGradient>
<linearGradient id="d288" gradientUnits="userSpaceOnUse" x1="1054.0" x2="1367.0" y1="0" y2="0"><stop offset="0.000" stop-color="#001699"/><stop offset="0.224" stop-color="#030a99"/><stop offset="0.466" stop-color="#350099"/><stop offset="0.722" stop-color="#6d0099"/><stop offset="0.923" stop-color="#990096"/><stop offset="1.000" stop-color="#990086"/></linearGradient>
<linearGradient id="d292" gradientUnits="userSpaceOnUse" x1="1057.0" x2="1363.0" y1="0" y2="0"><stop offset="0.000" stop-color="#001599"/><stop offset="0.222" stop-color="#030999"/><stop offset="0.461" stop-color="#330099"/><stop offset="0.722" stop-color="#6a0099"/><stop offset="0.948" stop-color="#990096"/><stop offset="1.000" stop-color="#99008b"/></linearGradient>
<linearGradient id="d296" gradientUnits="userSpaceOnUse" x1="1059.0" x2="1360.0" y1="0" y2="0"><stop offset="0.000" stop-color="#001399"/><stop offset="0.219" stop-color="#030899"/><stop offset="0.455" stop-color="#300099"/><stop offset="0.721" stop-color="#660099"/><stop offset="0.970" stop-color="#990096"/><stop offset="1.000" stop-color="#990090"/></linearGradient>
<linearGradient id="d300" gradientUnits="userSpaceOnUse" x1="1062.0" x2="1356.0" y1="0" y2="0"><stop offset="0.000" stop-color="#001299"/><stop offset="0.218" stop-color="#030799"/><stop offset="0.452" stop-color="#2e0099"/><stop offset="0.724" stop-color="#640099"/><stop offset="0.997" stop-color="#990096"/><stop offset="1.000" stop-color="#990095"/></linearGradient>
<linearGradient id="d304" gradientUnits="userSpaceOnUse" x1="1065.0" x2="1352.0" y1="0" y2="0"><stop offset="0.000" stop-color="#001099"/><stop offset="0.216" stop-color="#030699"/><stop offset="0.456" stop-color="#2e0099"/><stop offset="0.735" stop-color="#620099"/><stop offset="1.000" stop-color="#970099"/></linearGradient>
<linearGradient id="d308" gradientUnits="userSpaceOnUse" x1="1067.0" x2="1348.0" y1="0" y2="0"><stop offset="0.000" stop-color="#000f99"/><stop offset="0.217" stop-color="#030599"/><stop offset="0.477" stop-color="#300099"/><stop offset="0.762" stop-color="#640099"/><stop offset="1.000" stop-color="#910099"/></linearGradient>
<linearGradient id="d312" gradientUnits="userSpaceOnUse" x1="1070.0" x2="1344.0" y1="0" y2="0"><stop offset="0.000" stop-color="#000e99"/><stop offset="0.212" stop-color="#030499"/><stop offset="0.504" stop-color="#330099"/><stop offset="0.796" stop-color="#660099"/><stop offset="1.000" stop-color="#8c0099"/></linearGradient>
<linearGradient id="d316" gradientUnits="userSpaceOnUse" x1="1073.0" x2="1340.0" y1="0" y2="0"><stop offset="0.000" stop-color="#000d99"/><stop offset="0.210" stop-color="#030399"/><stop offset="0.509" stop-color="#330099"/><stop offset="0.809" stop-color="#650099"/><stop offset="1.000" stop-color="#870099"/></linearGradient>
<linearGradient id="d320" gradientUnits="userSpaceOnUse" x1="1075.0" x2="1336.0" y1="0" y2="0"><stop offset="0.000" stop-color="#000b99"/><stop offset="0.211" stop-color="#030399"/><stop offset="0.517" stop-color="#320099"/><stop offset="0.824" stop-color="#640099"/><stop offset="1.000" stop-color="#820099"/></linearGradient>
<linearGradient id="d324" gradientUnits="userSpaceOnUse" x1="1078.0" x2="1332.0" y1="0" y2="0"><stop offset="0.000" stop-color="#000a99"/><stop offset="0.209" stop-color="#030299"/><stop offset="0.524" stop-color="#320099"/><stop offset="0.839" stop-color="#630099"/><stop offset="1.000" stop-color="#7d0099"/></linearGradient>
<linearGradient id="d328" gradientUnits="userSpaceOnUse" x1="1081.0" x2="1328.0" y1="0" y2="0"><stop offset="0.000" stop-color="#000999"/><stop offset="0.206" stop-color="#030199"/><stop offset="0.530" stop-color="#310099"/><stop offset="0.854" stop-color="#620099"/><stop offset="1.000" stop-color="#780099"/></linearGradient>
<linearGradient id="d332" gradientUnits="userSpaceOnUse" x1="1084.0" x2="1325.0" y1="0" y2="0"><stop offset="0.000" stop-color="#000899"/><stop offset="0.199" stop-color="#030099"/><stop offset="0.531" stop-color="#300099"/><stop offset="0.863" stop-color="#600099"/><stop offset="1.000" stop-color="#740099"/></linearGradient>
<linearGradient id="d336" gradientUnits="userSpaceOnUse" x1="1087.0" x2="1321.0" y1="0" y2="0"><stop offset="0.000" stop-color="#000799"/><stop offset="0.197" stop-color="#030099"/><stop offset="0.538" stop-color="#300099"/><stop offset="0.880" stop-color="#5f0099"/><stop offset="1.000" stop-color="#700099"/></linearGradient>
<linearGradient id="d340" gradientUnits="userSpaceOnUse" x1="1090.0" x2="1317.0" y1="0" y2="0"><stop offset="0.000" stop-color="#000699"/><stop offset="0.194" stop-color="#030099"/><stop offset="0.546" stop-color="#2f0099"/><stop offset="0.899" stop-color="#5e0099"/><stop offset="1.000" stop-color="#6b0099"/></linearGradient>
<linearGradient id="d344" gradientUnits="userSpaceOnUse" x1="1093.0" x2="1313.0" y1="0" y2="0"><stop offset="0.000" stop-color="#000499"/><stop offset="0.191" stop-color="#030099"/><stop offset="0.555" stop-color="#2f0099"/><stop offset="0.918" stop-color="#5d0099"/><stop offset="1.000" stop-color="#670099"/></linearGradient>
<linearGradient id="d348" gradientUnits="userSpaceOnUse" x1="1096.0" x2="1309.0" y1="0" y2="0"><stop offset="0.000" stop-color="#000399"/><stop offset="0.188" stop-color="#040099"/><stop offset="0.563" stop-color="#2f0099"/><stop offset="0.939" stop-color="#5c0099"/><stop offset="1.000" stop-color="#630099"/></linearGradient>
<linearGradient id="d352" gradientUnits="userSpaceOnUse" x1="1099.0" x2="1305.0" y1="0" y2="0"><stop offset="0.000" stop-color="#000299"/><stop offset="0.184" stop-color="#040099"/><stop offset="0.573" stop-color="#2e0099"/><stop offset="0.961" stop-color="#5b0099"/><stop offset="1.000" stop-color="#5f0099"/></linearGradient>
<linearGradient id="d356" gradientUnits="userSpaceOnUse" x1="1103.0" x2="1301.0" y1="0" y2="0"><stop offset="0.000" stop-color="#000199"/><stop offset="0.172" stop-color="#030099"/><stop offset="0.576" stop-color="#2d0099"/><stop offset="0.980" stop-color="#590099"/><stop offset="1.000" stop-color="#5b0099"/></linearGradient>
<linearGradient id="d360" gradientUnits="userSpaceOnUse" x1="1106.0" x2="1297.0" y1="0" y2="0"><stop offset="0.000" stop-color="#000099"/><stop offset="0.168" stop-color="#040099"/><stop offset="0.586" stop-color="#2d0099"/><stop offset="1.000" stop-color="#580099"/></linearGradient>
<linearGradient id="d364" gradientUnits="userSpaceOnUse" x1="1110.0" x2="1294.0" y1="0" y2="0"><stop offset="0.000" stop-color="#000099"/><stop offset="0.163" stop-color="#040099"/><stop offset="0.598" stop-color="#2d0099"/><stop offset="1.000" stop-color="#550099"/></linearGradient>
<linearGradient id="d368" gradientUnits="userSpaceOnUse" x1="1113.0" x2="1290.0" y1="0" y2="0"><stop offset="0.000" stop-color="#000099"/><stop offset="0.158" stop-color="#040099"/><stop offset="0.610" stop-color="#2d0099"/><stop offset="1.000" stop-color="#510099"/></linearGradient>
<linearGradient id="d372" gradientUnits="userSpaceOnUse" x1="1117.0" x2="1286.0" y1="0" y2="0"><stop offset="0.000" stop-color="#000099"/><stop offset="0.154" stop-color="#050099"/><stop offset="0.627" stop-color="#2d0099"/><stop offset="1.000" stop-color="#4e0099"/></linearGradient>
<linearGradient id="d376" gradientUnits="userSpaceOnUse" x1="1121.0" x2="1282.0" y1="0" y2="0"><stop offset="0.000" stop-color="#000099"/><stop offset="0.155" stop-color="#060099"/><stop offset="0.652" stop-color="#2d0099"/><stop offset="1.000" stop-color="#4a0099"/></linearGradient>
<linearGradient id="d380" gradientUnits="userSpaceOnUse" x1="1125.0" x2="1278.0" y1="0" y2="0"><stop offset="0.000" stop-color="#000099"/><stop offset="0.196" stop-color="#0a0099"/><stop offset="0.719" stop-color="#310099"/><stop offset="1.000" stop-color="#470099"/></linearGradient>
<linearGradient id="d384" gradientUnits="userSpaceOnUse" x1="1128.0" x2="1274.0" y1="0" y2="0"><stop offset="0.000" stop-color="#000099"/><stop offset="0.534" stop-color="#220099"/><stop offset="1.000" stop-color="#440099"/></linearGradient>
<linearGradient id="d388" gradientUnits="userSpaceOnUse" x1="1132.0" x2="1270.0" y1="0" y2="0"><stop offset="0.000" stop-color="#000099"/><stop offset="0.580" stop-color="#240099"/><stop offset="1.000" stop-color="#410099"/></linearGradient>
<linearGradient id="d392" gradientUnits="userSpaceOnUse" x1="1135.0" x2="1266.0" y1="0" y2="0"><stop offset="0.000" stop-color="#000099"/><stop offset="0.611" stop-color="#250099"/><stop offset="1.000" stop-color="#3e0099"/></linearGradient>
<linearGradient id="d396" gradientUnits="userSpaceOnUse" x1="1139.0" x2="1262.0" y1="0" y2="0"><stop offset="0.000" stop-color="#010099"/><stop offset="0.650" stop-color="#260099"/><stop offset="1.000" stop-color="#3b0099"/></linearGradient>
<linearGradient id="d400" gradientUnits="userSpaceOnUse" x1="1143.0" x2="1259.0" y1="0" y2="0"><stop offset="0.000" stop-color="#020099"/><stop offset="0.690" stop-color="#270099"/><stop offset="1.000" stop-color="#380099"/></linearGradient>
<linearGradient id="d404" gradientUnits="userSpaceOnUse" x1="1147.0" x2="1255.0" y1="0" y2="0"><stop offset="0.000" stop-color="#040099"/><stop offset="0.741" stop-color="#280099"/><stop offset="1.000" stop-color="#350099"/></linearGradient>
<linearGradient id="d408" gradientUnits="userSpaceOnUse" x1="1152.0" x2="1251.0" y1="0" y2="0"><stop offset="0.000" stop-color="#060099"/><stop offset="0.808" stop-color="#2a0099"/><stop offset="1.000" stop-color="#330099"/></linearGradient>
<linearGradient id="d412" gradientUnits="userSpaceOnUse" x1="1157.0" x2="1247.0" y1="0" y2="0"><stop offset="0.000" stop-color="#080099"/><stop offset="0.889" stop-color="#2b0099"/><stop offset="1.000" stop-color="#300099"/></linearGradient>
<linearGradient id="d416" gradientUnits="userSpaceOnUse" x1="1162.0" x2="1243.0" y1="0" y2="0"><stop offset="0.000" stop-color="#090099"/><stop offset="0.988" stop-color="#2d0099"/><stop offset="1.000" stop-color="#2d0099"/></linearGradient>
<linearGradient id="d420" gradientUnits="userSpaceOnUse" x1="1167.0" x2="1239.0" y1="0" y2="0"><stop offset="0.000" stop-color="#0b0099"/><stop offset="1.000" stop-color="#2b0099"/></linearGradient>
<linearGradient id="d424" gradientUnits="userSpaceOnUse" x1="1172.0" x2="1235.0" y1="0" y2="0"><stop offset="0.000" stop-color="#0d0099"/><stop offset="1.000" stop-color="#280099"/></linearGradient>
<linearGradient id="d428" gradientUnits="userSpaceOnUse" x1="1177.0" x2="1231.0" y1="0" y2="0"><stop offset="0.000" stop-color="#0f0099"/><stop offset="1.000" stop-color="#260099"/></linearGradient>
<linearGradient id="d432" gradientUnits="userSpaceOnUse" x1="1182.0" x2="1228.0" y1="0" y2="0"><stop offset="0.000" stop-color="#100099"/><stop offset="1.000" stop-color="#240099"/></linearGradient>
<linearGradient id="d436" gradientUnits="userSpaceOnUse" x1="1186.0" x2="1224.0" y1="0" y2="0"><stop offset="0.000" stop-color="#120099"/><stop offset="1.000" stop-color="#220099"/></linearGradient>
<linearGradient id="d440" gradientUnits="userSpaceOnUse" x1="1191.0" x2="1220.0" y1="0" y2="0"><stop offset="0.000" stop-color="#130099"/><stop offset="1.000" stop-color="#1f0099"/></linearGradient>
<linearGradient id="d444" gradientUnits="userSpaceOnUse" x1="1196.0" x2="1216.0" y1="0" y2="0"><stop offset="0.000" stop-color="#150099"/><stop offset="1.000" stop-color="#1d0099"/></linearGradient>
<linearGradient id="d448" gradientUnits="userSpaceOnUse" x1="1201.0" x2="1212.0" y1="0" y2="0"><stop offset="0.000" stop-color="#160099"/><stop offset="1.000" stop-color="#1b0099"/></linearGradient>
<linearGradient id="r15" gradientUnits="userSpaceOnUse" x1="1049.0" x2="1053.0" y1="0" y2="0"><stop offset="0.000" stop-color="#00ff00"/><stop offset="1.000" stop-color="#04ff00"/></linearGradient>
<linearGradient id="r18" gradientUnits="userSpaceOnUse" x1="1049.0" x2="1083.0" y1="0" y2="0"><stop offset="0.000" stop-color="#00ff04"/><stop offset="0.471" stop-color="#1aff01"/><stop offset="1.000" stop-color="#3eff00"/></linearGradient>
<linearGradient id="r21" gradientUnits="userSpaceOnUse" x1="1050.0" x2="1113.0" y1="0" y2="0"><stop offset="0.000" stop-color="#00ff09"/><stop offset="0.381" stop-color="#2bff05"/><stop offset="1.000" stop-color="#82ff00"/></linearGradient>
<linearGradient id="r24" gradientUnits="userSpaceOnUse" x1="1051.0" x2="1142.0" y1="0" y2="0"><stop offset="0.000" stop-color="#00ff0f"/><stop offset="0.396" stop-color="#45ff09"/><stop offset="0.901" stop-color="#b7ff00"/><stop offset="1.000" stop-color="#d1ff00"/></linearGradient>
<linearGradient id="r27" gradientUnits="userSpaceOnUse" x1="1051.0" x2="1172.0" y1="0" y2="0"><stop offset="0.000" stop-color="#00ff15"/><stop offset="0.099" stop-color="#12ff13"/><stop offset="0.504" stop-color="#7fff0b"/><stop offset="0.843" stop-color="#f3ff01"/><stop offset="0.884" stop-color="#fffb00"/><stop offset="1.000" stop-color="#ffd400"/></linearGradient>
<linearGradient id="r30" gradientUnits="userSpaceOnUse" x1="1052.0" x2="1202.0" y1="0" y2="0"><stop offset="0.000" stop-color="#00ff1b"/><stop offset="0.120" stop-color="#1fff19"/><stop offset="0.440" stop-color="#8eff11"/><stop offset="0.700" stop-color="#fffd08"/><stop offset="0.860" stop-color="#ffbe01"/><stop offset="1.000" stop-color="#ff9800"/></linearGradient>
<linearGradient id="r33" gradientUnits="userSpaceOnUse" x1="1053.0" x2="1232.0" y1="0" y2="0"><stop offset="0.000" stop-color="#00ff21"/><stop offset="0.168" stop-color="#3aff1d"/><stop offset="0.419" stop-color="#a9ff16"/><stop offset="0.581" stop-color="#fffc10"/><stop offset="0.715" stop-color="#ffbd08"/><stop offset="0.905" stop-color="#ff8400"/><stop offset="1.000" stop-color="#ff6f00"/></linearGradient>
<linearGradient id="r36" gradientUnits="userSpaceOnUse" x1="1054.0" x2="1261.0" y1="0" y2="0"><stop offset="0.000" stop-color="#00ff28"/><stop offset="0.174" stop-color="#48ff23"/><stop offset="0.386" stop-color="#baff1d"/><stop offset="0.498" stop-color="#fffb18"/><stop offset="0.614" stop-color="#ffbc0e"/><stop offset="0.778" stop-color="#ff8205"/><stop offset="1.000" stop-color="#ff5300"/></linearGradient>
<linearGradient id="r39" gradientUnits="userSpaceOnUse" x1="1054.0" x2="1291.0" y1="0" y2="0"><stop offset="0.000" stop-color="#00ff2e"/><stop offset="0.055" stop-color="#15ff2d"/><stop offset="0.253" stop-color="#83ff28"/><stop offset="0.430" stop-color="#fffe21"/><stop offset="0.532" stop-color="#ffbd15"/><stop offset="0.671" stop-color="#ff840b"/><stop offset="0.878" stop-color="#ff5102"/><stop offset="1.000" stop-color="#ff3d00"/></linearGradient>
<linearGradient id="r42" gradientUnits="userSpaceOnUse" x1="1055.0" x2="1321.0" y1="0" y2="0"><stop offset="0.000" stop-color="#00ff35"/><stop offset="0.060" stop-color="#1dff33"/><stop offset="0.233" stop-color="#8aff2f"/><stop offset="0.380" stop-color="#fffd2a"/><stop offset="0.466" stop-color="#ffbe1d"/><stop offset="0.590" stop-color="#ff8411"/><stop offset="0.771" stop-color="#ff5206"/><stop offset="1.000" stop-color="#ff2c00"/></linearGradient>
<linearGradient id="r45" gradientUnits="userSpaceOnUse" x1="1056.0" x2="1351.0" y1="0" y2="0"><stop offset="0.000" stop-color="#00ff3c"/><stop offset="0.105" stop-color="#3fff39"/><stop offset="0.251" stop-color="#afff36"/><stop offset="0.339" stop-color="#fffc32"/><stop offset="0.417" stop-color="#ffbd23"/><stop offset="0.529" stop-color="#ff8316"/><stop offset="0.692" stop-color="#ff510a"/><stop offset="0.946" stop-color="#ff2500"/><stop offset="1.000" stop-color="#ff1e00"/></linearGradient>
<linearGradient id="r48" gradientUnits="userSpaceOnUse" x1="1056.0" x2="1381.0" y1="0" y2="0"><stop offset="0.000" stop-color="#00ff42"/><stop offset="0.031" stop-color="#10ff42"/><stop offset="0.172" stop-color="#7cff3f"/><stop offset="0.289" stop-color="#efff3c"/><stop offset="0.308" stop-color="#fffb3b"/><stop offset="0.378" stop-color="#ffbc2a"/><stop offset="0.480" stop-color="#ff821b"/><stop offset="0.628" stop-color="#ff500e"/><stop offset="0.858" stop-color="#ff2403"/><stop offset="1.000" stop-color="#ff1300"/></linearGradient>
<linearGradient id="r51" gradientUnits="userSpaceOnUse" x1="1057.0" x2="1410.0" y1="0" y2="0"><stop offset="0.000" stop-color="#00ff49"/><stop offset="0.037" stop-color="#17ff49"/><stop offset="0.164" stop-color="#84ff47"/><stop offset="0.278" stop-color="#fffd45"/><stop offset="0.343" stop-color="#ffbd32"/><stop offset="0.433" stop-color="#ff8322"/><stop offset="0.567" stop-color="#ff5113"/><stop offset="0.776" stop-color="#ff2506"/><stop offset="1.000" stop-color="#ff0a00"/></linearGradient>
<linearGradient id="r54" gradientUnits="userSpaceOnUse" x1="1058.0" x2="1440.0" y1="0" y2="0"><stop offset="0.000" stop-color="#00ff51"/><stop offset="0.050" stop-color="#25ff50"/><stop offset="0.165" stop-color="#95ff4f"/><stop offset="0.254" stop-color="#fffc4e"/><stop offset="0.312" stop-color="#ffbe3a"/><stop offset="0.393" stop-color="#ff8528"/><stop offset="0.513" stop-color="#ff5218"/><stop offset="0.702" stop-color="#ff260a"/><stop offset="0.911" stop-color="#ff0a01"/><stop offset="1.000" stop-color="#ff0200"/></linearGradient>
<linearGradient id="r57" gradientUnits="userSpaceOnUse" x1="1059.0" x2="1450.0" y1="0" y2="0"><stop offset="0.000" stop-color="#00ff58"/><stop offset="0.082" stop-color="#44ff58"/><stop offset="0.187" stop-color="#b5ff58"/><stop offset="0.246" stop-color="#fffb57"/><stop offset="0.302" stop-color="#ffbc41"/><stop offset="0.381" stop-color="#ff842e"/><stop offset="0.499" stop-color="#ff511c"/><stop offset="0.683" stop-color="#ff250d"/><stop offset="0.887" stop-color="#ff0a04"/><stop offset="1.000" stop-color="#ff0000"/></linearGradient>
<linearGradient id="r60" gradientUnits="userSpaceOnUse" x1="1059.0" x2="1447.0" y1="0" y2="0"><stop offset="0.000" stop-color="#00ff5f"/><stop offset="0.026" stop-color="#11ff5f"/><stop offset="0.139" stop-color="#7dff61"/><stop offset="0.235" stop-color="#f2ff62"/><stop offset="0.247" stop-color="#fffa60"/><stop offset="0.304" stop-color="#ffbb49"/><stop offset="0.384" stop-color="#ff8334"/><stop offset="0.503" stop-color="#ff5021"/><stop offset="0.688" stop-color="#ff2410"/><stop offset="0.894" stop-color="#ff0906"/><stop offset="1.000" stop-color="#ff0003"/></linearGradient>
<linearGradient id="r63" gradientUnits="userSpaceOnUse" x1="1060.0" x2="1443.0" y1="0" y2="0"><stop offset="0.000" stop-color="#00ff67"/><stop offset="0.029" stop-color="#14ff67"/><stop offset="0.141" stop-color="#80ff6a"/><stop offset="0.245" stop-color="#fffd6b"/><stop offset="0.303" stop-color="#ffbc51"/><stop offset="0.384" stop-color="#ff833a"/><stop offset="0.501" stop-color="#ff5126"/><stop offset="0.687" stop-color="#ff2514"/><stop offset="0.896" stop-color="#ff0909"/><stop offset="1.000" stop-color="#ff0005"/></linearGradient>
<linearGradient id="r66" gradientUnits="userSpaceOnUse" x1="1061.0" x2="1440.0" y1="0" y2="0"><stop offset="0.000" stop-color="#00ff6f"/><stop offset="0.063" stop-color="#33ff70"/><stop offset="0.172" stop-color="#a3ff74"/><stop offset="0.245" stop-color="#fffc75"/><stop offset="0.303" stop-color="#ffbb59"/><stop offset="0.385" stop-color="#ff8140"/><stop offset="0.504" stop-color="#ff4f2a"/><stop offset="0.691" stop-color="#ff2417"/><stop offset="0.902" stop-color="#ff080b"/><stop offset="1.000" stop-color="#ff0008"/></linearGradient>
<linearGradient id="r69" gradientUnits="userSpaceOnUse" x1="1061.0" x2="1436.0" y1="0" y2="0"><stop offset="0.000" stop-color="#00ff77"/><stop offset="0.024" stop-color="#0fff77"/><stop offset="0.139" stop-color="#7cff7c"/><stop offset="0.235" stop-color="#f1ff81"/><stop offset="0.248" stop-color="#fffb7f"/><stop offset="0.304" stop-color="#ffbc62"/><stop offset="0.384" stop-color="#ff8347"/><stop offset="0.501" stop-color="#ff5130"/><stop offset="0.685" stop-color="#ff251c"/><stop offset="0.899" stop-color="#ff090e"/><stop offset="1.000" stop-color="#ff000a"/></linearGradient>
<linearGradient id="r72" gradientUnits="userSpaceOnUse" x1="1062.0" x2="1433.0" y1="0" y2="0"><stop offset="0.000" stop-color="#00ff7f"/><stop offset="0.024" stop-color="#0fff80"/><stop offset="0.137" stop-color="#7bff85"/><stop offset="0.232" stop-color="#eeff8b"/><stop offset="0.245" stop-color="#fffd8b"/><stop offset="0.302" stop-color="#ffbd6b"/><stop offset="0.383" stop-color="#ff834e"/><stop offset="0.501" stop-color="#ff5035"/><stop offset="0.685" stop-color="#ff251f"/><stop offset="0.900" stop-color="#ff0811"/><stop offset="1.000" stop-color="#ff000d"/></linearGradient>
<linearGradient id="r75" gradientUnits="userSpaceOnUse" x1="1063.0" x2="1430.0" y1="0" y2="0"><stop offset="0.000" stop-color="#00ff87"/><stop offset="0.035" stop-color="#1aff89"/><stop offset="0.147" stop-color="#87ff90"/><stop offset="0.245" stop-color="#fffc95"/><stop offset="0.302" stop-color="#ffbc73"/><stop offset="0.381" stop-color="#ff8455"/><stop offset="0.499" stop-color="#ff513b"/><stop offset="0.681" stop-color="#ff2523"/><stop offset="0.899" stop-color="#ff0814"/><stop offset="1.000" stop-color="#ff000f"/></linearGradient>
<linearGradient id="r78" gradientUnits="userSpaceOnUse" x1="1064.0" x2="1426.0" y1="0" y2="0"><stop offset="0.000" stop-color="#00ff90"/><stop offset="0.075" stop-color="#3dff94"/><stop offset="0.180" stop-color="#adff9c"/><stop offset="0.243" stop-color="#ffffa2"/><stop offset="0.298" stop-color="#ffc07e"/><stop offset="0.376" stop-color="#ff875e"/><stop offset="0.492" stop-color="#ff5441"/><stop offset="0.671" stop-color="#ff2728"/><stop offset="0.892" stop-color="#ff0918"/><stop offset="1.000" stop-color="#ff0012"/></linearGradient>
<linearGradient id="r81" gradientUnits="userSpaceOnUse" x1="1064.0" x2="1423.0" y1="0" y2="0"><stop offset="0.000" stop-color="#00ff98"/><stop offset="0.025" stop-color="#10ff9a"/><stop offset="0.139" stop-color="#7dffa3"/><stop offset="0.234" stop-color="#f1ffac"/><stop offset="0.248" stop-color="#fffaab"/><stop offset="0.306" stop-color="#ffb984"/><stop offset="0.387" stop-color="#ff8162"/><stop offset="0.507" stop-color="#ff4f44"/><stop offset="0.694" stop-color="#ff232a"/><stop offset="0.916" stop-color="#ff0719"/><stop offset="1.000" stop-color="#ff0015"/></linearGradient>
<linearGradient id="r84" gradientUnits="userSpaceOnUse" x1="1065.0" x2="1419.0" y1="0" y2="0"><stop offset="0.000" stop-color="#00ffa1"/><stop offset="0.023" stop-color="#0effa3"/><stop offset="0.136" stop-color="#79ffad"/><stop offset="0.232" stop-color="#eeffb8"/><stop offset="0.246" stop-color="#fffdb8"/><stop offset="0.302" stop-color="#ffbd90"/><stop offset="0.381" stop-color="#ff846c"/><stop offset="0.497" stop-color="#ff524c"/><stop offset="0.678" stop-color="#ff2630"/><stop offset="0.904" stop-color="#ff081d"/><stop offset="1.000" stop-color="#ff0018"/></linearGradient>
<linearGradient id="r87" gradientUnits="userSpaceOnUse" x1="1066.0" x2="1416.0" y1="0" y2="0"><stop offset="0.000" stop-color="#00ffaa"/><stop offset="0.043" stop-color="#20ffae"/><stop offset="0.154" stop-color="#8fffba"/><stop offset="0.246" stop-color="#fffcc3"/><stop offset="0.303" stop-color="#ffbc99"/><stop offset="0.383" stop-color="#ff8372"/><stop offset="0.500" stop-color="#ff5151"/><stop offset="0.683" stop-color="#ff2534"/><stop offset="0.911" stop-color="#ff0720"/><stop offset="1.000" stop-color="#ff001a"/></linearGradient>
<linearGradient id="r90" gradientUnits="userSpaceOnUse" x1="1066.0" x2="1413.0" y1="0" y2="0"><stop offset="0.000" stop-color="#00ffb3"/><stop offset="0.020" stop-color="#0bffb5"/><stop offset="0.135" stop-color="#78ffc2"/><stop offset="0.231" stop-color="#ecffd0"/><stop offset="0.248" stop-color="#fffacf"/><stop offset="0.305" stop-color="#ffbaa1"/><stop offset="0.386" stop-color="#ff8179"/><stop offset="0.504" stop-color="#ff4f56"/><stop offset="0.689" stop-color="#ff2437"/><stop offset="0.919" stop-color="#ff0622"/><stop offset="1.000" stop-color="#ff001d"/></linearGradient>
<linearGradient id="r93" gradientUnits="userSpaceOnUse" x1="1067.0" x2="1409.0" y1="0" y2="0"><stop offset="0.000" stop-color="#00ffbd"/><stop offset="0.020" stop-color="#0cffbf"/><stop offset="0.135" stop-color="#78ffcd"/><stop offset="0.231" stop-color="#ecffdc"/><stop offset="0.246" stop-color="#fffddd"/><stop offset="0.301" stop-color="#ffbeae"/><stop offset="0.380" stop-color="#ff8584"/><stop offset="0.497" stop-color="#ff525e"/><stop offset="0.678" stop-color="#ff263d"/><stop offset="0.912" stop-color="#ff0726"/><stop offset="1.000" stop-color="#ff0020"/></linearGradient>
<linearGradient id="r96" gradientUnits="userSpaceOnUse" x1="1068.0" x2="1406.0" y1="0" y2="0"><stop offset="0.000" stop-color="#00ffc7"/><stop offset="0.027" stop-color="#12ffca"/><stop offset="0.139" stop-color="#7effd9"/><stop offset="0.246" stop-color="#fffce9"/><stop offset="0.302" stop-color="#ffbdb8"/><stop offset="0.382" stop-color="#ff848b"/><stop offset="0.500" stop-color="#ff5163"/><stop offset="0.683" stop-color="#ff2541"/><stop offset="0.920" stop-color="#ff0629"/><stop offset="1.000" stop-color="#ff0024"/></linearGradient>
<linearGradient id="r99" gradientUnits="userSpaceOnUse" x1="1069.0" x2="1403.0" y1="0" y2="0"><stop offset="0.000" stop-color="#00ffd1"/><stop offset="0.054" stop-color="#2affd8"/><stop offset="0.162" stop-color="#98ffe9"/><stop offset="0.243" stop-color="#fffff9"/><stop offset="0.299" stop-color="#ffbec4"/><stop offset="0.377" stop-color="#ff8695"/><stop offset="0.494" stop-color="#ff526b"/><stop offset="0.674" stop-color="#ff2647"/><stop offset="0.913" stop-color="#ff072d"/><stop offset="1.000" stop-color="#ff0027"/></linearGradient>
<linearGradient id="r102" gradientUnits="userSpaceOnUse" x1="1069.0" x2="1399.0" y1="0" y2="0"><stop offset="0.000" stop-color="#00ffdb"/><stop offset="0.021" stop-color="#0cffde"/><stop offset="0.136" stop-color="#79fff0"/><stop offset="0.230" stop-color="#e7fbff"/><stop offset="0.255" stop-color="#fff2fb"/><stop offset="0.315" stop-color="#ffb2c4"/><stop offset="0.400" stop-color="#ff7a94"/><stop offset="0.527" stop-color="#ff4869"/><stop offset="0.727" stop-color="#ff1e44"/><stop offset="0.970" stop-color="#ff022c"/><stop offset="1.000" stop-color="#ff002a"/></linearGradient>
<linearGradient id="r105" gradientUnits="userSpaceOnUse" x1="1070.0" x2="1396.0" y1="0" y2="0"><stop offset="0.000" stop-color="#00ffe6"/><stop offset="0.021" stop-color="#0dffe9"/><stop offset="0.135" stop-color="#79fffc"/><stop offset="0.264" stop-color="#ffe5fd"/><stop offset="0.328" stop-color="#ffa7c5"/><stop offset="0.420" stop-color="#ff7093"/><stop offset="0.558" stop-color="#ff4067"/><stop offset="0.779" stop-color="#ff1642"/><stop offset="1.000" stop-color="#ff002d"/></linearGradient>
<linearGradient id="r108" gradientUnits="userSpaceOnUse" x1="1071.0" x2="1392.0" y1="0" y2="0"><stop offset="0.000" stop-color="#00fff1"/><stop offset="0.031" stop-color="#16fff6"/><stop offset="0.112" stop-color="#5ffaff"/><stop offset="0.277" stop-color="#ffd5fb"/><stop offset="0.346" stop-color="#ff9ac3"/><stop offset="0.445" stop-color="#ff6591"/><stop offset="0.598" stop-color="#ff3665"/><stop offset="0.847" stop-color="#ff0e3f"/><stop offset="1.000" stop-color="#ff0031"/></linearGradient>
<linearGradient id="r111" gradientUnits="userSpaceOnUse" x1="1071.0" x2="1389.0" y1="0" y2="0"><stop offset="0.000" stop-color="#00fffb"/><stop offset="0.019" stop-color="#09ffff"/><stop offset="0.226" stop-color="#c3d9ff"/><stop offset="0.289" stop-color="#ffcafd"/><stop offset="0.362" stop-color="#ff90c4"/><stop offset="0.469" stop-color="#ff5c90"/><stop offset="0.632" stop-color="#ff2f63"/><stop offset="0.884" stop-color="#ff0a3f"/><stop offset="1.000" stop-color="#ff0034"/></linearGradient>
<linearGradient id="r114" gradientUnits="userSpaceOnUse" x1="1072.0" x2="1386.0" y1="0" y2="0"><stop offset="0.000" stop-color="#00f7ff"/><stop offset="0.019" stop-color="#0af4ff"/><stop offset="0.236" stop-color="#c3ccff"/><stop offset="0.303" stop-color="#ffbcfc"/><stop offset="0.379" stop-color="#ff85c3"/><stop offset="0.490" stop-color="#ff548f"/><stop offset="0.666" stop-color="#ff2862"/><stop offset="0.920" stop-color="#ff063f"/><stop offset="1.000" stop-color="#ff0038"/></linearGradient>
<linearGradient id="r117" gradientUnits="userSpaceOnUse" x1="1073.0" x2="1382.0" y1="0" y2="0"><stop offset="0.000" stop-color="#00edff"/><stop offset="0.032" stop-color="#14e7ff"/><stop offset="0.256" stop-color="#ccbfff"/><stop offset="0.314" stop-color="#ffb3fd"/><stop offset="0.395" stop-color="#ff7cc3"/><stop offset="0.511" stop-color="#ff4d90"/><stop offset="0.693" stop-color="#ff2363"/><stop offset="0.951" stop-color="#ff0340"/><stop offset="1.000" stop-color="#ff003c"/></linearGradient>
<linearGradient id="r120" gradientUnits="userSpaceOnUse" x1="1074.0" x2="1379.0" y1="0" y2="0"><stop offset="0.000" stop-color="#00e3ff"/><stop offset="0.125" stop-color="#59ceff"/><stop offset="0.328" stop-color="#ffa6fc"/><stop offset="0.413" stop-color="#ff73c2"/><stop offset="0.538" stop-color="#ff458e"/><stop offset="0.731" stop-color="#ff1d61"/><stop offset="0.993" stop-color="#ff0040"/><stop offset="1.000" stop-color="#ff003f"/></linearGradient>
<linearGradient id="r123" gradientUnits="userSpaceOnUse" x1="1074.0" x2="1375.0" y1="0" y2="0"><stop offset="0.000" stop-color="#00daff"/><stop offset="0.030" stop-color="#10d5ff"/><stop offset="0.276" stop-color="#c9abff"/><stop offset="0.342" stop-color="#ff9efe"/><stop offset="0.429" stop-color="#ff6dc4"/><stop offset="0.555" stop-color="#ff4191"/><stop offset="0.751" stop-color="#ff1a63"/><stop offset="1.000" stop-color="#ff0043"/></linearGradient>
<linearGradient id="r126" gradientUnits="userSpaceOnUse" x1="1075.0" x2="1372.0" y1="0" y2="0"><stop offset="0.000" stop-color="#00d1ff"/><stop offset="0.034" stop-color="#12cbff"/><stop offset="0.290" stop-color="#cca1ff"/><stop offset="0.357" stop-color="#ff93fd"/><stop offset="0.448" stop-color="#ff64c3"/><stop offset="0.582" stop-color="#ff398f"/><stop offset="0.791" stop-color="#ff1562"/><stop offset="1.000" stop-color="#ff0047"/></linearGradient>
<linearGradient id="r129" gradientUnits="userSpaceOnUse" x1="1076.0" x2="1369.0" y1="0" y2="0"><stop offset="0.000" stop-color="#00c8ff"/><stop offset="0.133" stop-color="#54b4ff"/><stop offset="0.369" stop-color="#ff8bfe"/><stop offset="0.464" stop-color="#ff5dc3"/><stop offset="0.604" stop-color="#ff348f"/><stop offset="0.819" stop-color="#ff1162"/><stop offset="1.000" stop-color="#ff004b"/></linearGradient>
<linearGradient id="r132" gradientUnits="userSpaceOnUse" x1="1076.0" x2="1365.0" y1="0" y2="0"><stop offset="0.000" stop-color="#00c1ff"/><stop offset="0.035" stop-color="#10bbff"/><stop offset="0.311" stop-color="#c98fff"/><stop offset="0.388" stop-color="#ff81fd"/><stop offset="0.488" stop-color="#ff55c2"/><stop offset="0.633" stop-color="#ff2e8f"/><stop offset="0.858" stop-color="#ff0d62"/><stop offset="1.000" stop-color="#ff0050"/></linearGradient>
<linearGradient id="r135" gradientUnits="userSpaceOnUse" x1="1077.0" x2="1362.0" y1="0" y2="0"><stop offset="0.000" stop-color="#00b9ff"/><stop offset="0.042" stop-color="#15b3ff"/><stop offset="0.323" stop-color="#c987ff"/><stop offset="0.404" stop-color="#ff78fc"/><stop offset="0.509" stop-color="#ff4ec1"/><stop offset="0.663" stop-color="#ff288d"/><stop offset="0.902" stop-color="#ff0860"/><stop offset="1.000" stop-color="#ff0054"/></linearGradient>
<linearGradient id="r138" gradientUnits="userSpaceOnUse" x1="1078.0" x2="1358.0" y1="0" y2="0"><stop offset="0.000" stop-color="#00b1ff"/><stop offset="0.143" stop-color="#4f9dff"/><stop offset="0.418" stop-color="#ff71fd"/><stop offset="0.525" stop-color="#ff49c3"/><stop offset="0.682" stop-color="#ff258f"/><stop offset="0.925" stop-color="#ff0662"/><stop offset="1.000" stop-color="#ff0059"/></linearGradient>
<linearGradient id="r141" gradientUnits="userSpaceOnUse" x1="1079.0" x2="1355.0" y1="0" y2="0"><stop offset="0.000" stop-color="#00abff"/><stop offset="0.228" stop-color="#7f8aff"/><stop offset="0.435" stop-color="#ff69fc"/><stop offset="0.547" stop-color="#ff42c2"/><stop offset="0.714" stop-color="#ff208e"/><stop offset="0.971" stop-color="#ff0261"/><stop offset="1.000" stop-color="#ff005d"/></linearGradient>
<linearGradient id="r144" gradientUnits="userSpaceOnUse" x1="1079.0" x2="1352.0" y1="0" y2="0"><stop offset="0.000" stop-color="#00a4ff"/><stop offset="0.059" stop-color="#1b9dff"/><stop offset="0.352" stop-color="#c373ff"/><stop offset="0.451" stop-color="#ff63fd"/><stop offset="0.568" stop-color="#ff3dc3"/><stop offset="0.740" stop-color="#ff1b8e"/><stop offset="1.000" stop-color="#ff0062"/></linearGradient>
<linearGradient id="r147" gradientUnits="userSpaceOnUse" x1="1080.0" x2="1348.0" y1="0" y2="0"><stop offset="0.000" stop-color="#009eff"/><stop offset="0.153" stop-color="#4c8aff"/><stop offset="0.451" stop-color="#f65fff"/><stop offset="0.474" stop-color="#ff5afa"/><stop offset="0.597" stop-color="#ff36c0"/><stop offset="0.776" stop-color="#ff178d"/><stop offset="1.000" stop-color="#ff0067"/></linearGradient>
<linearGradient id="r150" gradientUnits="userSpaceOnUse" x1="1081.0" x2="1345.0" y1="0" y2="0"><stop offset="0.000" stop-color="#0098ff"/><stop offset="0.254" stop-color="#7e77ff"/><stop offset="0.485" stop-color="#ff55fe"/><stop offset="0.610" stop-color="#ff33c3"/><stop offset="0.792" stop-color="#ff1490"/><stop offset="1.000" stop-color="#ff006c"/></linearGradient>
<linearGradient id="r153" gradientUnits="userSpaceOnUse" x1="1081.0" x2="1341.0" y1="0" y2="0"><stop offset="0.000" stop-color="#0093ff"/><stop offset="0.065" stop-color="#1b8bff"/><stop offset="0.373" stop-color="#b763ff"/><stop offset="0.508" stop-color="#ff4ffd"/><stop offset="0.638" stop-color="#ff2dc2"/><stop offset="0.831" stop-color="#ff108e"/><stop offset="1.000" stop-color="#ff0071"/></linearGradient>
<linearGradient id="r156" gradientUnits="userSpaceOnUse" x1="1082.0" x2="1338.0" y1="0" y2="0"><stop offset="0.000" stop-color="#008dff"/><stop offset="0.176" stop-color="#4e78ff"/><stop offset="0.488" stop-color="#ed4fff"/><stop offset="0.527" stop-color="#ff48fc"/><stop offset="0.664" stop-color="#ff28c2"/><stop offset="0.863" stop-color="#ff0c8e"/><stop offset="1.000" stop-color="#ff0077"/></linearGradient>
<linearGradient id="r159" gradientUnits="userSpaceOnUse" x1="1083.0" x2="1335.0" y1="0" y2="0"><stop offset="0.000" stop-color="#0088ff"/><stop offset="0.278" stop-color="#7b67ff"/><stop offset="0.544" stop-color="#ff43fd"/><stop offset="0.687" stop-color="#ff24c2"/><stop offset="0.893" stop-color="#ff098e"/><stop offset="1.000" stop-color="#ff007c"/></linearGradient>
<linearGradient id="r162" gradientUnits="userSpaceOnUse" x1="1084.0" x2="1331.0" y1="0" y2="0"><stop offset="0.000" stop-color="#0083ff"/><stop offset="0.324" stop-color="#8c5dff"/><stop offset="0.567" stop-color="#ff3dfc"/><stop offset="0.717" stop-color="#ff1fc1"/><stop offset="0.935" stop-color="#ff058d"/><stop offset="1.000" stop-color="#ff0082"/></linearGradient>
<linearGradient id="r165" gradientUnits="userSpaceOnUse" x1="1084.0" x2="1328.0" y1="0" y2="0"><stop offset="0.000" stop-color="#007eff"/><stop offset="0.189" stop-color="#4a69ff"/><stop offset="0.516" stop-color="#df42ff"/><stop offset="0.590" stop-color="#ff37fb"/><stop offset="0.746" stop-color="#ff1bc0"/><stop offset="0.971" stop-color="#ff018d"/><stop offset="1.000" stop-color="#ff0088"/></linearGradient>
<linearGradient id="r168" gradientUnits="userSpaceOnUse" x1="1085.0" x2="1324.0" y1="0" y2="0"><stop offset="0.000" stop-color="#0079ff"/><stop offset="0.310" stop-color="#7a58ff"/><stop offset="0.611" stop-color="#ff33fc"/><stop offset="0.770" stop-color="#ff17c2"/><stop offset="1.000" stop-color="#ff008e"/></linearGradient>
<linearGradient id="r171" gradientUnits="userSpaceOnUse" x1="1086.0" x2="1321.0" y1="0" y2="0"><stop offset="0.000" stop-color="#0075ff"/><stop offset="0.340" stop-color="#8351ff"/><stop offset="0.630" stop-color="#ff2ffd"/><stop offset="0.796" stop-color="#ff14c2"/><stop offset="1.000" stop-color="#ff0095"/></linearGradient>
<linearGradient id="r174" gradientUnits="userSpaceOnUse" x1="1086.0" x2="1318.0" y1="0" y2="0"><stop offset="0.000" stop-color="#0071ff"/><stop offset="0.203" stop-color="#475dff"/><stop offset="0.547" stop-color="#d337ff"/><stop offset="0.655" stop-color="#ff2afc"/><stop offset="0.828" stop-color="#ff10c1"/><stop offset="1.000" stop-color="#ff009b"/></linearGradient>
<linearGradient id="r177" gradientUnits="userSpaceOnUse" x1="1087.0" x2="1314.0" y1="0" y2="0"><stop offset="0.000" stop-color="#006dff"/><stop offset="0.339" stop-color="#784bff"/><stop offset="0.683" stop-color="#ff25fc"/><stop offset="0.863" stop-color="#ff0cc1"/><stop offset="1.000" stop-color="#ff00a2"/></linearGradient>
<linearGradient id="r180" gradientUnits="userSpaceOnUse" x1="1088.0" x2="1311.0" y1="0" y2="0"><stop offset="0.000" stop-color="#0069ff"/><stop offset="0.359" stop-color="#7b46ff"/><stop offset="0.704" stop-color="#ff21fd"/><stop offset="0.888" stop-color="#ff09c2"/><stop offset="1.000" stop-color="#ff00a9"/></linearGradient>
<linearGradient id="r183" gradientUnits="userSpaceOnUse" x1="1089.0" x2="1308.0" y1="0" y2="0"><stop offset="0.000" stop-color="#0065ff"/><stop offset="0.365" stop-color="#7943ff"/><stop offset="0.731" stop-color="#ff1cfc"/><stop offset="0.922" stop-color="#ff05c1"/><stop offset="1.000" stop-color="#ff00b0"/></linearGradient>
<linearGradient id="r186" gradientUnits="userSpaceOnUse" x1="1089.0" x2="1304.0" y1="0" y2="0"><stop offset="0.000" stop-color="#0061ff"/><stop offset="0.372" stop-color="#7640ff"/><stop offset="0.744" stop-color="#fc1aff"/><stop offset="0.986" stop-color="#ff00bb"/><stop offset="1.000" stop-color="#ff00b8"/></linearGradient>
<linearGradient id="r189" gradientUnits="userSpaceOnUse" x1="1090.0" x2="1301.0" y1="0" y2="0"><stop offset="0.000" stop-color="#005eff"/><stop offset="0.379" stop-color="#743cff"/><stop offset="0.758" stop-color="#f818ff"/><stop offset="0.796" stop-color="#ff13f9"/><stop offset="1.000" stop-color="#ff00c0"/></linearGradient>
<linearGradient id="r192" gradientUnits="userSpaceOnUse" x1="1091.0" x2="1297.0" y1="0" y2="0"><stop offset="0.000" stop-color="#005aff"/><stop offset="0.388" stop-color="#7339ff"/><stop offset="0.777" stop-color="#f315ff"/><stop offset="0.825" stop-color="#ff10fa"/><stop offset="1.000" stop-color="#ff00c9"/></linearGradient>
<linearGradient id="r195" gradientUnits="userSpaceOnUse" x1="1091.0" x2="1294.0" y1="0" y2="0"><stop offset="0.000" stop-color="#0057ff"/><stop offset="0.394" stop-color="#6f37ff"/><stop offset="0.788" stop-color="#ee13ff"/><stop offset="0.852" stop-color="#ff0dfb"/><stop offset="1.000" stop-color="#ff00d1"/></linearGradient>
<linearGradient id="r198" gradientUnits="userSpaceOnUse" x1="1092.0" x2="1291.0" y1="0" y2="0"><stop offset="0.000" stop-color="#0054ff"/><stop offset="0.402" stop-color="#6e34ff"/><stop offset="0.804" stop-color="#ea11ff"/><stop offset="0.879" stop-color="#ff0afc"/><stop offset="1.000" stop-color="#ff00da"/></linearGradient>
<linearGradient id="r201" gradientUnits="userSpaceOnUse" x1="1093.0" x2="1287.0" y1="0" y2="0"><stop offset="0.000" stop-color="#0051ff"/><stop offset="0.412" stop-color="#6c31ff"/><stop offset="0.825" stop-color="#e60eff"/><stop offset="0.918" stop-color="#ff06fb"/><stop offset="1.000" stop-color="#ff00e4"/></linearGradient>
<linearGradient id="r204" gradientUnits="userSpaceOnUse" x1="1094.0" x2="1284.0" y1="0" y2="0"><stop offset="0.000" stop-color="#004dff"/><stop offset="0.421" stop-color="#6b2eff"/><stop offset="0.842" stop-color="#e30cff"/><stop offset="0.947" stop-color="#ff03fc"/><stop offset="1.000" stop-color="#ff00ed"/></linearGradient>
<linearGradient id="r207" gradientUnits="userSpaceOnUse" x1="1094.0" x2="1280.0" y1="0" y2="0"><stop offset="0.000" stop-color="#004bff"/><stop offset="0.430" stop-color="#682cff"/><stop offset="0.860" stop-color="#de0aff"/><stop offset="0.989" stop-color="#ff00fb"/><stop offset="1.000" stop-color="#ff00f8"/></linearGradient>
<linearGradient id="r210" gradientUnits="userSpaceOnUse" x1="1095.0" x2="1277.0" y1="0" y2="0"><stop offset="0.000" stop-color="#0048ff"/><stop offset="0.440" stop-color="#672aff"/><stop offset="0.879" stop-color="#da08ff"/><stop offset="1.000" stop-color="#fc00ff"/></linearGradient>
<linearGradient id="r213" gradientUnits="userSpaceOnUse" x1="1096.0" x2="1274.0" y1="0" y2="0"><stop offset="0.000" stop-color="#0045ff"/><stop offset="0.449" stop-color="#6627ff"/><stop offset="0.899" stop-color="#d706ff"/><stop offset="1.000" stop-color="#f200ff"/></linearGradient>
<linearGradient id="r216" gradientUnits="userSpaceOnUse" x1="1096.0" x2="1270.0" y1="0" y2="0"><stop offset="0.000" stop-color="#0043ff"/><stop offset="0.460" stop-color="#6325ff"/><stop offset="0.920" stop-color="#d205ff"/><stop offset="1.000" stop-color="#e700ff"/></linearGradient>
<linearGradient id="r219" gradientUnits="userSpaceOnUse" x1="1097.0" x2="1267.0" y1="0" y2="0"><stop offset="0.000" stop-color="#0040ff"/><stop offset="0.471" stop-color="#6223ff"/><stop offset="0.941" stop-color="#d003ff"/><stop offset="1.000" stop-color="#de00ff"/></linearGradient>
<linearGradient id="r222" gradientUnits="userSpaceOnUse" x1="1098.0" x2="1263.0" y1="0" y2="0"><stop offset="0.000" stop-color="#003dff"/><stop offset="0.485" stop-color="#6120ff"/><stop offset="0.970" stop-color="#cd01ff"/><stop offset="1.000" stop-color="#d400ff"/></linearGradient>
<linearGradient id="r225" gradientUnits="userSpaceOnUse" x1="1099.0" x2="1260.0" y1="0" y2="0"><stop offset="0.000" stop-color="#003bff"/><stop offset="0.497" stop-color="#601eff"/><stop offset="0.994" stop-color="#ca00ff"/><stop offset="1.000" stop-color="#cb00ff"/></linearGradient>
<linearGradient id="r228" gradientUnits="userSpaceOnUse" x1="1099.0" x2="1257.0" y1="0" y2="0"><stop offset="0.000" stop-color="#0039ff"/><stop offset="0.506" stop-color="#5e1cff"/><stop offset="1.000" stop-color="#c300ff"/></linearGradient>
<linearGradient id="r231" gradientUnits="userSpaceOnUse" x1="1100.0" x2="1253.0" y1="0" y2="0"><stop offset="0.000" stop-color="#0036ff"/><stop offset="0.523" stop-color="#5d1aff"/><stop offset="1.000" stop-color="#ba00ff"/></linearGradient>
<linearGradient id="r234" gradientUnits="userSpaceOnUse" x1="1101.0" x2="1250.0" y1="0" y2="0"><stop offset="0.000" stop-color="#0034ff"/><stop offset="0.537" stop-color="#5c18ff"/><stop offset="1.000" stop-color="#b200ff"/></linearGradient>
<linearGradient id="r237" gradientUnits="userSpaceOnUse" x1="1101.0" x2="1246.0" y1="0" y2="0"><stop offset="0.000" stop-color="#0032ff"/><stop offset="0.552" stop-color="#5917ff"/><stop offset="1.000" stop-color="#aa00ff"/></linearGradient>
<linearGradient id="r240" gradientUnits="userSpaceOnUse" x1="1102.0" x2="1243.0" y1="0" y2="0"><stop offset="0.000" stop-color="#0030ff"/><stop offset="0.567" stop-color="#5915ff"/><stop offset="1.000" stop-color="#a300ff"/></linearGradient>
<linearGradient id="r243" gradientUnits="userSpaceOnUse" x1="1103.0" x2="1240.0" y1="0" y2="0"><stop offset="0.000" stop-color="#002eff"/><stop offset="0.584" stop-color="#5813ff"/><stop offset="1.000" stop-color="#9c00ff"/></linearGradient>
<linearGradient id="r246" gradientUnits="userSpaceOnUse" x1="1104.0" x2="1236.0" y1="0" y2="0"><stop offset="0.000" stop-color="#002cff"/><stop offset="0.606" stop-color="#5711ff"/><stop offset="1.000" stop-color="#9400ff"/></linearGradient>
<linearGradient id="r249" gradientUnits="userSpaceOnUse" x1="1104.0" x2="1233.0" y1="0" y2="0"><stop offset="0.000" stop-color="#002aff"/><stop offset="0.620" stop-color="#5510ff"/><stop offset="1.000" stop-color="#8d00ff"/></linearGradient>
<linearGradient id="r252" gradientUnits="userSpaceOnUse" x1="1105.0" x2="1230.0" y1="0" y2="0"><stop offset="0.000" stop-color="#0028ff"/><stop offset="0.640" stop-color="#540eff"/><stop offset="1.000" stop-color="#8700ff"/></linearGradient>
<linearGradient id="r255" gradientUnits="userSpaceOnUse" x1="1106.0" x2="1226.0" y1="0" y2="0"><stop offset="0.000" stop-color="#0026ff"/><stop offset="0.667" stop-color="#530cff"/><stop offset="1.000" stop-color="#8000ff"/></linearGradient>
<linearGradient id="r258" gradientUnits="userSpaceOnUse" x1="1106.0" x2="1223.0" y1="0" y2="0"><stop offset="0.000" stop-color="#0025ff"/><stop offset="0.684" stop-color="#510bff"/><stop offset="1.000" stop-color="#7a00ff"/></linearGradient>
<linearGradient id="r261" gradientUnits="userSpaceOnUse" x1="1107.0" x2="1219.0" y1="0" y2="0"><stop offset="0.000" stop-color="#0023ff"/><stop offset="0.714" stop-color="#510aff"/><stop offset="1.000" stop-color="#7300ff"/></linearGradient>
<linearGradient id="r264" gradientUnits="userSpaceOnUse" x1="1108.0" x2="1216.0" y1="0" y2="0"><stop offset="0.000" stop-color="#0021ff"/><stop offset="0.741" stop-color="#5008ff"/><stop offset="1.000" stop-color="#6e00ff"/></linearGradient>
<linearGradient id="r267" gradientUnits="userSpaceOnUse" x1="1109.0" x2="1213.0" y1="0" y2="0"><stop offset="0.000" stop-color="#001fff"/><stop offset="0.769" stop-color="#4f07ff"/><stop offset="1.000" stop-color="#6900ff"/></linearGradient>
<linearGradient id="r270" gradientUnits="userSpaceOnUse" x1="1109.0" x2="1209.0" y1="0" y2="0"><stop offset="0.000" stop-color="#001eff"/><stop offset="0.800" stop-color="#4e05ff"/><stop offset="1.000" stop-color="#6200ff"/></linearGradient>
<linearGradient id="r273" gradientUnits="userSpaceOnUse" x1="1110.0" x2="1206.0" y1="0" y2="0"><stop offset="0.000" stop-color="#001cff"/><stop offset="0.833" stop-color="#4d04ff"/><stop offset="1.000" stop-color="#5d00ff"/></linearGradient>
<linearGradient id="r276" gradientUnits="userSpaceOnUse" x1="1111.0" x2="1202.0" y1="0" y2="0"><stop offset="0.000" stop-color="#001aff"/><stop offset="0.879" stop-color="#4c02ff"/><stop offset="1.000" stop-color="#5700ff"/></linearGradient>
<linearGradient id="r279" gradientUnits="userSpaceOnUse" x1="1111.0" x2="1199.0" y1="0" y2="0"><stop offset="0.000" stop-color="#0019ff"/><stop offset="0.909" stop-color="#4b01ff"/><stop offset="1.000" stop-color="#5300ff"/></linearGradient>
<linearGradient id="r282" gradientUnits="userSpaceOnUse" x1="1112.0" x2="1196.0" y1="0" y2="0"><stop offset="0.000" stop-color="#0018ff"/><stop offset="0.952" stop-color="#4a00ff"/><stop offset="1.000" stop-color="#4e00ff"/></linearGradient>
<linearGradient id="r285" gradientUnits="userSpaceOnUse" x1="1113.0" x2="1192.0" y1="0" y2="0"><stop offset="0.000" stop-color="#0016ff"/><stop offset="1.000" stop-color="#4900ff"/></linearGradient>
<linearGradient id="r288" gradientUnits="userSpaceOnUse" x1="1114.0" x2="1189.0" y1="0" y2="0"><stop offset="0.000" stop-color="#0014ff"/><stop offset="1.000" stop-color="#4400ff"/></linearGradient>
<linearGradient id="r291" gradientUnits="userSpaceOnUse" x1="1114.0" x2="1185.0" y1="0" y2="0"><stop offset="0.000" stop-color="#0013ff"/><stop offset="1.000" stop-color="#3f00ff"/></linearGradient>
<linearGradient id="r294" gradientUnits="userSpaceOnUse" x1="1115.0" x2="1182.0" y1="0" y2="0"><stop offset="0.000" stop-color="#0012ff"/><stop offset="1.000" stop-color="#3b00ff"/></linearGradient>
<linearGradient id="r297" gradientUnits="userSpaceOnUse" x1="1116.0" x2="1179.0" y1="0" y2="0"><stop offset="0.000" stop-color="#0010ff"/><stop offset="1.000" stop-color="#3700ff"/></linearGradient>
<linearGradient id="r300" gradientUnits="userSpaceOnUse" x1="1116.0" x2="1175.0" y1="0" y2="0"><stop offset="0.000" stop-color="#000fff"/><stop offset="1.000" stop-color="#3200ff"/></linearGradient>
<linearGradient id="r303" gradientUnits="userSpaceOnUse" x1="1117.0" x2="1172.0" y1="0" y2="0"><stop offset="0.000" stop-color="#000eff"/><stop offset="1.000" stop-color="#2e00ff"/></linearGradient>
<linearGradient id="r306" gradientUnits="userSpaceOnUse" x1="1118.0" x2="1168.0" y1="0" y2="0"><stop offset="0.000" stop-color="#000dff"/><stop offset="1.000" stop-color="#2a00ff"/></linearGradient>
<linearGradient id="r309" gradientUnits="userSpaceOnUse" x1="1119.0" x2="1165.0" y1="0" y2="0"><stop offset="0.000" stop-color="#000bff"/><stop offset="1.000" stop-color="#2600ff"/></linearGradient>
<linearGradient id="r312" gradientUnits="userSpaceOnUse" x1="1119.0" x2="1162.0" y1="0" y2="0"><stop offset="0.000" stop-color="#000aff"/><stop offset="1.000" stop-color="#2200ff"/></linearGradient>
<linearGradient id="r315" gradientUnits="userSpaceOnUse" x1="1120.0" x2="1158.0" y1="0" y2="0"><stop offset="0.000" stop-color="#0009ff"/><stop offset="1.000" stop-color="#1e00ff"/></linearGradient>
<linearGradient id="r318" gradientUnits="userSpaceOnUse" x1="1121.0" x2="1155.0" y1="0" y2="0"><stop offset="0.000" stop-color="#0008ff"/><stop offset="1.000" stop-color="#1b00ff"/></linearGradient>
<linearGradient id="r321" gradientUnits="userSpaceOnUse" x1="1121.0" x2="1151.0" y1="0" y2="0"><stop offset="0.000" stop-color="#0007ff"/><stop offset="1.000" stop-color="#1700ff"/></linearGradient>
<linearGradient id="r324" gradientUnits="userSpaceOnUse" x1="1122.0" x2="1148.0" y1="0" y2="0"><stop offset="0.000" stop-color="#0006ff"/><stop offset="1.000" stop-color="#1300ff"/></linearGradient>
<linearGradient id="r327" gradientUnits="userSpaceOnUse" x1="1123.0" x2="1145.0" y1="0" y2="0"><stop offset="0.000" stop-color="#0005ff"/><stop offset="1.000" stop-color="#1000ff"/></linearGradient>
<linearGradient id="r330" gradientUnits="userSpaceOnUse" x1="1124.0" x2="1141.0" y1="0" y2="0"><stop offset="0.000" stop-color="#0003ff"/><stop offset="1.000" stop-color="#0c00ff"/></linearGradient>
<linearGradient id="r333" gradientUnits="userSpaceOnUse" x1="1124.0" x2="1138.0" y1="0" y2="0"><stop offset="0.000" stop-color="#0003ff"/><stop offset="1.000" stop-color="#0900ff"/></linearGradient>
<linearGradient id="r336" gradientUnits="userSpaceOnUse" x1="1125.0" x2="1135.0" y1="0" y2="0"><stop offset="0.000" stop-color="#0001ff"/><stop offset="1.000" stop-color="#0600ff"/></linearGradient>
<linearGradient id="r339" gradientUnits="userSpaceOnUse" x1="1126.0" x2="1131.0" y1="0" y2="0"><stop offset="0.000" stop-color="#0000ff"/><stop offset="1.000" stop-color="#0300ff"/></linearGradient>
<clipPath id="cins"><rect x="1348.0" y="370.2" width="199.4" height="134.6"/></clipPath>
<linearGradient id="ins" gradientUnits="userSpaceOnUse" x1="1340" y1="420" x2="1560" y2="520"><stop offset="0" stop-color="#b0ff00"/><stop offset="0.40" stop-color="#ffff00"/><stop offset="0.95" stop-color="#ffb400"/></linearGradient>
<linearGradient id="gr" x1="0" y1="0" x2="0" y2="1"><stop offset="0" stop-color="#ff5c5c"/><stop offset="1" stop-color="#ff4444"/></linearGradient>
<linearGradient id="gg" x1="0" y1="0" x2="0" y2="1"><stop offset="0" stop-color="#5cac5c"/><stop offset="1" stop-color="#2c962c"/></linearGradient>
<linearGradient id="gb" x1="0" y1="0" x2="0" y2="1"><stop offset="0" stop-color="#5c5cff"/><stop offset="1" stop-color="#4a4aff"/></linearGradient>
<linearGradient id="bar" x1="0" y1="0" x2="0" y2="1"><stop offset="0" stop-color="#484848"/><stop offset="0.5" stop-color="#3a3a3a"/><stop offset="1" stop-color="#2a2a2a"/></linearGradient>
<linearGradient id="cell" x1="0" y1="0" x2="0" y2="1"><stop offset="0" stop-color="#ababab"/><stop offset="1" stop-color="#666666"/></linearGradient>
<linearGradient id="cellsel" x1="0" y1="0" x2="0" y2="1"><stop offset="0" stop-color="#171717"/><stop offset="0.6" stop-color="#222"/><stop offset="1" stop-color="#3c3c3c"/></linearGradient>
<linearGradient id="btn" x1="0" y1="0" x2="0" y2="1"><stop offset="0" stop-color="#a6a6a6"/><stop offset="1" stop-color="#727272"/></linearGradient>
<linearGradient id="btn2" x1="0" y1="0" x2="0" y2="1"><stop offset="0" stop-color="#b0b0b0"/><stop offset="1" stop-color="#8a8a8a"/></linearGradient>
<linearGradient id="circ" x1="0" y1="0" x2="0" y2="1"><stop offset="0" stop-color="#868686"/><stop offset="1" stop-color="#b6b6b6"/></linearGradient>
<linearGradient id="dcirc" x1="0" y1="0" x2="0" y2="1"><stop offset="0" stop-color="#2c2c2c"/><stop offset="1" stop-color="#3e3e3e"/></linearGradient>
</defs>
<rect width="1556" height="847" fill="#323232"/>
<text x="5.5" y="56" font-size="38" fill="#f2f2f2" textLength="171.5" lengthAdjust="spacingAndGlyphs">Saturation</text>
<text x="190.8" y="56" font-size="38" fill="#f2f2f2" textLength="125.6" lengthAdjust="spacingAndGlyphs">Sweeps</text>
<text x="114" y="106" font-size="18" fill="#f0f0f0" textLength="100" lengthAdjust="spacingAndGlyphs">dE Formula:</text>
<rect x="222.00" y="87.50" width="126.00" height="23.50" fill="url(#cb)" stroke="#2a2a2a" stroke-width="1" rx="1.5"/>
<text x="227" y="106" font-size="14.5" fill="#f0f0f0" textLength="32" lengthAdjust="spacingAndGlyphs">2000</text>
<path d="M334 97.5h9.4l-4.7 5.2z" fill="#000"/>
<text x="522" y="49" font-size="18" fill="#f0f0f0" textLength="57" lengthAdjust="spacingAndGlyphs">Levels:</text>
<rect x="586.50" y="30.00" width="317.00" height="24.00" fill="url(#cb)" stroke="#2a2a2a" stroke-width="1" rx="1.5"/>
<text x="590.5" y="48.5" font-size="14.5" fill="#f0f0f0" textLength="84" lengthAdjust="spacingAndGlyphs">20% Sweeps</text>
<path d="M889.5 40.5h9.4l-4.7 5.2z" fill="#000"/>
<text x="167.2" y="136.3" font-size="12.3" fill="#d4d4d4" text-anchor="middle" textLength="74" lengthAdjust="spacingAndGlyphs">DeltaE 2000</text>
<rect x="37.50" y="141.60" width="293.50" height="363.40" fill="#242424"/>
<line x1="76.63" y1="141.60" x2="76.63" y2="505.00" stroke="#9a9a9a" stroke-width="1"/>
<line x1="115.77" y1="141.60" x2="115.77" y2="505.00" stroke="#9a9a9a" stroke-width="1"/>
<line x1="154.90" y1="141.60" x2="154.90" y2="505.00" stroke="#9a9a9a" stroke-width="1"/>
<line x1="194.03" y1="141.60" x2="194.03" y2="505.00" stroke="#9a9a9a" stroke-width="1"/>
<line x1="233.17" y1="141.60" x2="233.17" y2="505.00" stroke="#9a9a9a" stroke-width="1"/>
<line x1="272.30" y1="141.60" x2="272.30" y2="505.00" stroke="#9a9a9a" stroke-width="1"/>
<line x1="311.43" y1="141.60" x2="311.43" y2="505.00" stroke="#9a9a9a" stroke-width="1"/>
<path d="M37.5 141.6H331.0V505.0H37.5" fill="none" stroke="#9a9a9a" stroke-width="1"/>
<line x1="37.50" y1="141.60" x2="37.50" y2="508.00" stroke="#c8c8c8" stroke-width="1.6"/>
<line x1="31.50" y1="141.60" x2="37.50" y2="141.60" stroke="#e0e0e0" stroke-width="1.6"/>
<line x1="31.50" y1="193.51" x2="37.50" y2="193.51" stroke="#e0e0e0" stroke-width="1.6"/>
<line x1="31.50" y1="245.43" x2="37.50" y2="245.43" stroke="#e0e0e0" stroke-width="1.6"/>
<line x1="31.50" y1="297.34" x2="37.50" y2="297.34" stroke="#e0e0e0" stroke-width="1.6"/>
<line x1="31.50" y1="349.26" x2="37.50" y2="349.26" stroke="#e0e0e0" stroke-width="1.6"/>
<line x1="31.50" y1="401.17" x2="37.50" y2="401.17" stroke="#e0e0e0" stroke-width="1.6"/>
<line x1="31.50" y1="453.09" x2="37.50" y2="453.09" stroke="#e0e0e0" stroke-width="1.6"/>
<line x1="31.50" y1="505.00" x2="37.50" y2="505.00" stroke="#e0e0e0" stroke-width="1.6"/>
<line x1="37.50" y1="505.00" x2="37.50" y2="509.00" stroke="#c8c8c8" stroke-width="1.4"/>
<text x="37.5" y="524" font-size="13" fill="#d4d4d4" text-anchor="middle">0</text>
<line x1="76.63" y1="505.00" x2="76.63" y2="509.00" stroke="#c8c8c8" stroke-width="1.4"/>
<text x="76.63333333333333" y="524" font-size="13" fill="#d4d4d4" text-anchor="middle">2</text>
<line x1="115.77" y1="505.00" x2="115.77" y2="509.00" stroke="#c8c8c8" stroke-width="1.4"/>
<text x="115.76666666666667" y="524" font-size="13" fill="#d4d4d4" text-anchor="middle">4</text>
<line x1="154.90" y1="505.00" x2="154.90" y2="509.00" stroke="#c8c8c8" stroke-width="1.4"/>
<text x="154.9" y="524" font-size="13" fill="#d4d4d4" text-anchor="middle">6</text>
<line x1="194.03" y1="505.00" x2="194.03" y2="509.00" stroke="#c8c8c8" stroke-width="1.4"/>
<text x="194.03333333333333" y="524" font-size="13" fill="#d4d4d4" text-anchor="middle">8</text>
<line x1="233.17" y1="505.00" x2="233.17" y2="509.00" stroke="#c8c8c8" stroke-width="1.4"/>
<text x="233.16666666666666" y="524" font-size="13" fill="#d4d4d4" text-anchor="middle">10</text>
<line x1="272.30" y1="505.00" x2="272.30" y2="509.00" stroke="#c8c8c8" stroke-width="1.4"/>
<text x="272.3" y="524" font-size="13" fill="#d4d4d4" text-anchor="middle">12</text>
<line x1="311.43" y1="505.00" x2="311.43" y2="509.00" stroke="#c8c8c8" stroke-width="1.4"/>
<text x="311.43333333333334" y="524" font-size="13" fill="#d4d4d4" text-anchor="middle">14</text>
<text x="36.5" y="172.65714285714284" font-size="13" fill="#d4d4d4" text-anchor="end">100%</text>
<text x="36.5" y="224.57142857142856" font-size="13" fill="#d4d4d4" text-anchor="end">80%</text>
<text x="36.5" y="276.48571428571427" font-size="13" fill="#d4d4d4" text-anchor="end">60%</text>
<text x="36.5" y="328.4" font-size="13" fill="#d4d4d4" text-anchor="end">40%</text>
<text x="36.5" y="380.3142857142857" font-size="13" fill="#d4d4d4" text-anchor="end">20%</text>
<text x="36.5" y="432.2285714285714" font-size="13" fill="#d4d4d4" text-anchor="end">100</text>
<text x="36.5" y="484.1428571428571" font-size="13" fill="#d4d4d4" text-anchor="end">0</text>
<rect x="38.30" y="146.50" width="39.12" height="5.50" fill="url(#b00)" stroke="#000" stroke-width="1.2"/>
<rect x="38.30" y="152.80" width="48.12" height="5.50" fill="url(#b01)" stroke="#000" stroke-width="1.2"/>
<rect x="38.30" y="159.10" width="26.40" height="5.50" fill="url(#b02)" stroke="#000" stroke-width="1.2"/>
<rect x="38.30" y="165.40" width="56.14" height="5.50" fill="url(#b03)" stroke="#000" stroke-width="1.2"/>
<rect x="38.30" y="171.70" width="48.12" height="5.50" fill="url(#b04)" stroke="#000" stroke-width="1.2"/>
<rect x="38.30" y="178.00" width="49.82" height="5.50" fill="url(#b05)" stroke="#000" stroke-width="1.2"/>
<rect x="38.30" y="198.41" width="45.96" height="5.50" fill="url(#b10)" stroke="#000" stroke-width="1.2"/>
<rect x="38.30" y="204.71" width="41.66" height="5.50" fill="url(#b11)" stroke="#000" stroke-width="1.2"/>
<rect x="38.30" y="211.01" width="33.05" height="5.50" fill="url(#b12)" stroke="#000" stroke-width="1.2"/>
<rect x="38.30" y="217.31" width="55.16" height="5.50" fill="url(#b13)" stroke="#000" stroke-width="1.2"/>
<rect x="38.30" y="223.61" width="52.23" height="5.50" fill="url(#b14)" stroke="#000" stroke-width="1.2"/>
<rect x="38.30" y="229.91" width="57.55" height="5.50" fill="url(#b15)" stroke="#000" stroke-width="1.2"/>
<rect x="38.30" y="250.33" width="44.01" height="5.50" fill="url(#b20)" stroke="#000" stroke-width="1.2"/>
<rect x="38.30" y="256.63" width="37.94" height="5.50" fill="url(#b21)" stroke="#000" stroke-width="1.2"/>
<rect x="38.30" y="262.93" width="46.16" height="5.50" fill="url(#b22)" stroke="#000" stroke-width="1.2"/>
<rect x="38.30" y="269.23" width="54.97" height="5.50" fill="url(#b23)" stroke="#000" stroke-width="1.2"/>
<rect x="38.30" y="275.53" width="61.03" height="5.50" fill="url(#b24)" stroke="#000" stroke-width="1.2"/>
<rect x="38.30" y="281.83" width="63.20" height="5.50" fill="url(#b25)" stroke="#000" stroke-width="1.2"/>
<rect x="38.30" y="302.24" width="50.86" height="5.50" fill="url(#b30)" stroke="#000" stroke-width="1.2"/>
<rect x="38.30" y="308.54" width="36.57" height="5.50" fill="url(#b31)" stroke="#000" stroke-width="1.2"/>
<rect x="38.30" y="314.84" width="60.05" height="5.50" fill="url(#b32)" stroke="#000" stroke-width="1.2"/>
<rect x="38.30" y="321.14" width="57.12" height="5.50" fill="url(#b33)" stroke="#000" stroke-width="1.2"/>
<rect x="38.30" y="327.44" width="71.99" height="5.50" fill="url(#b34)" stroke="#000" stroke-width="1.2"/>
<rect x="38.30" y="333.74" width="71.87" height="5.50" fill="url(#b35)" stroke="#000" stroke-width="1.2"/>
<rect x="38.30" y="354.16" width="69.05" height="5.50" fill="url(#b40)" stroke="#000" stroke-width="1.2"/>
<rect x="38.30" y="360.46" width="47.14" height="5.50" fill="url(#b41)" stroke="#000" stroke-width="1.2"/>
<rect x="38.30" y="366.76" width="78.25" height="5.50" fill="url(#b42)" stroke="#000" stroke-width="1.2"/>
<rect x="38.30" y="373.06" width="69.05" height="5.50" fill="url(#b43)" stroke="#000" stroke-width="1.2"/>
<rect x="38.30" y="379.36" width="83.14" height="5.50" fill="url(#b44)" stroke="#000" stroke-width="1.2"/>
<rect x="38.30" y="385.66" width="88.46" height="5.50" fill="url(#b45)" stroke="#000" stroke-width="1.2"/>
<rect x="38.30" y="443.87" width="135.97" height="5.50" fill="url(#bw)" stroke="#000" stroke-width="1.2"/>
<rect x="38.30" y="495.79" width="16.42" height="5.50" fill="url(#bk)" stroke="#000" stroke-width="1.2"/>
<rect x="380.70" y="90.60" width="134.40" height="264.70" fill="#242424"/>
<line x1="380.70" y1="92.00" x2="515.10" y2="92.00" stroke="#9a9a9a" stroke-width="1"/>
<line x1="374.70" y1="92.00" x2="380.70" y2="92.00" stroke="#e0e0e0" stroke-width="1.5"/>
<text x="373.7" y="96.8" font-size="13" fill="#d4d4d4" text-anchor="end">15</text>
<line x1="380.70" y1="135.88" x2="515.10" y2="135.88" stroke="#9a9a9a" stroke-width="1"/>
<line x1="374.70" y1="135.88" x2="380.70" y2="135.88" stroke="#e0e0e0" stroke-width="1.5"/>
<text x="373.7" y="142.48499999999999" font-size="13" fill="#d4d4d4" text-anchor="end">10</text>
<line x1="380.70" y1="179.77" x2="515.10" y2="179.77" stroke="#9a9a9a" stroke-width="1"/>
<line x1="374.70" y1="179.77" x2="380.70" y2="179.77" stroke="#e0e0e0" stroke-width="1.5"/>
<text x="373.7" y="186.36999999999998" font-size="13" fill="#d4d4d4" text-anchor="end">5</text>
<line x1="380.70" y1="223.66" x2="515.10" y2="223.66" stroke="#9a9a9a" stroke-width="1"/>
<line x1="374.70" y1="223.66" x2="380.70" y2="223.66" stroke="#e0e0e0" stroke-width="1.5"/>
<text x="373.7" y="230.255" font-size="13" fill="#d4d4d4" text-anchor="end">0</text>
<line x1="380.70" y1="267.54" x2="515.10" y2="267.54" stroke="#9a9a9a" stroke-width="1"/>
<line x1="374.70" y1="267.54" x2="380.70" y2="267.54" stroke="#e0e0e0" stroke-width="1.5"/>
<text x="373.7" y="274.14" font-size="13" fill="#d4d4d4" text-anchor="end">-5</text>
<line x1="380.70" y1="311.42" x2="515.10" y2="311.42" stroke="#9a9a9a" stroke-width="1"/>
<line x1="374.70" y1="311.42" x2="380.70" y2="311.42" stroke="#e0e0e0" stroke-width="1.5"/>
<text x="373.7" y="318.025" font-size="13" fill="#d4d4d4" text-anchor="end">-10</text>
<text x="373.7" y="361.90000000000003" font-size="13" fill="#d4d4d4" text-anchor="end">-15</text>
<line x1="374.70" y1="355.30" x2="380.70" y2="355.30" stroke="#e0e0e0" stroke-width="1.5"/>
<rect x="380.7" y="90.6" width="134.4" height="264.7" fill="none" stroke="#9a9a9a" stroke-width="1.2"/>
<line x1="380.70" y1="355.30" x2="380.70" y2="361.80" stroke="#d0d0d0" stroke-width="1.3"/>
<line x1="515.10" y1="355.30" x2="515.10" y2="361.80" stroke="#d0d0d0" stroke-width="1.3"/>
<text x="447.9" y="371.2" font-size="13" fill="#d4d4d4" text-anchor="middle" textLength="33" lengthAdjust="spacingAndGlyphs">100%</text>
<text x="435.59999999999997" y="85.8" font-size="12.3" fill="#d4d4d4" text-anchor="middle" textLength="42" lengthAdjust="spacingAndGlyphs">Delta L</text>
<rect x="394.80" y="207.24" width="106.90" height="16.41" fill="url(#yb)" stroke="#000" stroke-width="1.3"/>
<rect x="565.70" y="90.60" width="134.40" height="264.70" fill="#242424"/>
<line x1="565.70" y1="92.00" x2="700.10" y2="92.00" stroke="#9a9a9a" stroke-width="1"/>
<line x1="559.70" y1="92.00" x2="565.70" y2="92.00" stroke="#e0e0e0" stroke-width="1.5"/>
<text x="558.7" y="96.8" font-size="13" fill="#d4d4d4" text-anchor="end">15</text>
<line x1="565.70" y1="135.88" x2="700.10" y2="135.88" stroke="#9a9a9a" stroke-width="1"/>
<line x1="559.70" y1="135.88" x2="565.70" y2="135.88" stroke="#e0e0e0" stroke-width="1.5"/>
<text x="558.7" y="142.48499999999999" font-size="13" fill="#d4d4d4" text-anchor="end">10</text>
<line x1="565.70" y1="179.77" x2="700.10" y2="179.77" stroke="#9a9a9a" stroke-width="1"/>
<line x1="559.70" y1="179.77" x2="565.70" y2="179.77" stroke="#e0e0e0" stroke-width="1.5"/>
<text x="558.7" y="186.36999999999998" font-size="13" fill="#d4d4d4" text-anchor="end">5</text>
<line x1="565.70" y1="223.66" x2="700.10" y2="223.66" stroke="#9a9a9a" stroke-width="1"/>
<line x1="559.70" y1="223.66" x2="565.70" y2="223.66" stroke="#e0e0e0" stroke-width="1.5"/>
<text x="558.7" y="230.255" font-size="13" fill="#d4d4d4" text-anchor="end">0</text>
<line x1="565.70" y1="267.54" x2="700.10" y2="267.54" stroke="#9a9a9a" stroke-width="1"/>
<line x1="559.70" y1="267.54" x2="565.70" y2="267.54" stroke="#e0e0e0" stroke-width="1.5"/>
<text x="558.7" y="274.14" font-size="13" fill="#d4d4d4" text-anchor="end">-5</text>
<line x1="565.70" y1="311.42" x2="700.10" y2="311.42" stroke="#9a9a9a" stroke-width="1"/>
<line x1="559.70" y1="311.42" x2="565.70" y2="311.42" stroke="#e0e0e0" stroke-width="1.5"/>
<text x="558.7" y="318.025" font-size="13" fill="#d4d4d4" text-anchor="end">-10</text>
<text x="558.7" y="361.90000000000003" font-size="13" fill="#d4d4d4" text-anchor="end">-15</text>
<line x1="559.70" y1="355.30" x2="565.70" y2="355.30" stroke="#e0e0e0" stroke-width="1.5"/>
<rect x="565.7" y="90.6" width="134.4" height="264.7" fill="none" stroke="#9a9a9a" stroke-width="1.2"/>
<line x1="565.70" y1="355.30" x2="565.70" y2="361.80" stroke="#d0d0d0" stroke-width="1.3"/>
<line x1="700.10" y1="355.30" x2="700.10" y2="361.80" stroke="#d0d0d0" stroke-width="1.3"/>
<text x="632.9000000000001" y="371.2" font-size="13" fill="#d4d4d4" text-anchor="middle" textLength="33" lengthAdjust="spacingAndGlyphs">100%</text>
<text x="620.6000000000001" y="85.8" font-size="12.3" fill="#d4d4d4" text-anchor="middle" textLength="44" lengthAdjust="spacingAndGlyphs">Delta C</text>
<rect x="579.80" y="197.06" width="106.90" height="26.59" fill="url(#yb)" stroke="#000" stroke-width="1.3"/>
<rect x="750.70" y="90.60" width="134.40" height="264.70" fill="#242424"/>
<line x1="750.70" y1="92.00" x2="885.10" y2="92.00" stroke="#9a9a9a" stroke-width="1"/>
<line x1="744.70" y1="92.00" x2="750.70" y2="92.00" stroke="#e0e0e0" stroke-width="1.5"/>
<text x="743.7" y="96.8" font-size="13" fill="#d4d4d4" text-anchor="end">15</text>
<line x1="750.70" y1="135.88" x2="885.10" y2="135.88" stroke="#9a9a9a" stroke-width="1"/>
<line x1="744.70" y1="135.88" x2="750.70" y2="135.88" stroke="#e0e0e0" stroke-width="1.5"/>
<text x="743.7" y="142.48499999999999" font-size="13" fill="#d4d4d4" text-anchor="end">10</text>
<line x1="750.70" y1="179.77" x2="885.10" y2="179.77" stroke="#9a9a9a" stroke-width="1"/>
<line x1="744.70" y1="179.77" x2="750.70" y2="179.77" stroke="#e0e0e0" stroke-width="1.5"/>
<text x="743.7" y="186.36999999999998" font-size="13" fill="#d4d4d4" text-anchor="end">5</text>
<line x1="750.70" y1="223.66" x2="885.10" y2="223.66" stroke="#9a9a9a" stroke-width="1"/>
<line x1="744.70" y1="223.66" x2="750.70" y2="223.66" stroke="#e0e0e0" stroke-width="1.5"/>
<text x="743.7" y="230.255" font-size="13" fill="#d4d4d4" text-anchor="end">0</text>
<line x1="750.70" y1="267.54" x2="885.10" y2="267.54" stroke="#9a9a9a" stroke-width="1"/>
<line x1="744.70" y1="267.54" x2="750.70" y2="267.54" stroke="#e0e0e0" stroke-width="1.5"/>
<text x="743.7" y="274.14" font-size="13" fill="#d4d4d4" text-anchor="end">-5</text>
<line x1="750.70" y1="311.42" x2="885.10" y2="311.42" stroke="#9a9a9a" stroke-width="1"/>
<line x1="744.70" y1="311.42" x2="750.70" y2="311.42" stroke="#e0e0e0" stroke-width="1.5"/>
<text x="743.7" y="318.025" font-size="13" fill="#d4d4d4" text-anchor="end">-10</text>
<text x="743.7" y="361.90000000000003" font-size="13" fill="#d4d4d4" text-anchor="end">-15</text>
<line x1="744.70" y1="355.30" x2="750.70" y2="355.30" stroke="#e0e0e0" stroke-width="1.5"/>
<rect x="750.7" y="90.6" width="134.4" height="264.7" fill="none" stroke="#9a9a9a" stroke-width="1.2"/>
<line x1="750.70" y1="355.30" x2="750.70" y2="361.80" stroke="#d0d0d0" stroke-width="1.3"/>
<line x1="885.10" y1="355.30" x2="885.10" y2="361.80" stroke="#d0d0d0" stroke-width="1.3"/>
<text x="817.9000000000001" y="371.2" font-size="13" fill="#d4d4d4" text-anchor="middle" textLength="33" lengthAdjust="spacingAndGlyphs">100%</text>
<text x="805.6000000000001" y="85.8" font-size="12.3" fill="#d4d4d4" text-anchor="middle" textLength="45" lengthAdjust="spacingAndGlyphs">Delta H</text>
<rect x="764.80" y="181.96" width="106.90" height="41.69" fill="url(#yb)" stroke="#000" stroke-width="1.3"/>
<rect x="349.30" y="380.30" width="554.80" height="152.50" fill="#000"/>
<rect x="368.50" y="387.10" width="93.30" height="62.00" fill="#bdc8aa"/>
<rect x="368.50" y="449.00" width="93.30" height="63.00" fill="#bfc0a0"/>
<rect x="368.50" y="387.1" width="93.3" height="124.9" fill="none" stroke="#f4f4f4" stroke-width="1.2"/>
<text x="415.3" y="526" font-size="11.3" fill="#f4f4f4" text-anchor="middle" font-weight="bold" textLength="21.4" lengthAdjust="spacingAndGlyphs">20%</text>
<rect x="477.12" y="387.10" width="93.30" height="62.00" fill="#bdc88c"/>
<rect x="477.12" y="449.00" width="93.30" height="63.00" fill="#c0c084"/>
<rect x="477.12" y="387.1" width="93.3" height="124.9" fill="none" stroke="#f4f4f4" stroke-width="1.2"/>
<text x="523.92" y="526" font-size="11.3" fill="#f4f4f4" text-anchor="middle" font-weight="bold" textLength="21.4" lengthAdjust="spacingAndGlyphs">40%</text>
<rect x="585.74" y="387.10" width="93.30" height="62.00" fill="#bcc76a"/>
<rect x="585.74" y="449.00" width="93.30" height="63.00" fill="#bfbf6a"/>
<rect x="585.74" y="387.1" width="93.3" height="124.9" fill="none" stroke="#f4f4f4" stroke-width="1.2"/>
<text x="632.54" y="526" font-size="11.3" fill="#f4f4f4" text-anchor="middle" font-weight="bold" textLength="21.4" lengthAdjust="spacingAndGlyphs">60%</text>
<rect x="694.36" y="387.10" width="93.30" height="62.00" fill="#bcc534"/>
<rect x="694.36" y="449.00" width="93.30" height="63.00" fill="#c0bf30"/>
<rect x="694.36" y="387.1" width="93.3" height="124.9" fill="none" stroke="#f4f4f4" stroke-width="1.2"/>
<text x="741.16" y="526" font-size="11.3" fill="#f4f4f4" text-anchor="middle" font-weight="bold" textLength="21.4" lengthAdjust="spacingAndGlyphs">80%</text>
<rect x="802.98" y="387.10" width="93.30" height="62.00" fill="#c3cc00"/>
<rect x="802.98" y="449.00" width="93.30" height="63.00" fill="#c6c118"/>
<rect x="802.98" y="387.1" width="93.3" height="124.9" fill="none" stroke="#f4f4f4" stroke-width="1.2"/>
<text x="849.78" y="526" font-size="11.3" fill="#f4f4f4" text-anchor="middle" font-weight="bold" textLength="28.5" lengthAdjust="spacingAndGlyphs">100%</text>
<text transform="translate(361.8,414) rotate(-90)" font-size="11.8" fill="#f4f4f4" text-anchor="middle" font-weight="bold" textLength="32.8" lengthAdjust="spacingAndGlyphs">Actual</text>
<text transform="translate(361.8,484) rotate(-90)" font-size="11.8" fill="#f4f4f4" text-anchor="middle" font-weight="bold" textLength="32.8" lengthAdjust="spacingAndGlyphs">Target</text>
<rect x="914" y="26" width="648" height="517" fill="none" stroke="#c4c100" stroke-width="6.2"/>
<text x="1236" y="45.5" font-size="12.3" fill="#d4d4d4" text-anchor="middle" textLength="78" lengthAdjust="spacingAndGlyphs">CIE 1976 u'v'</text>
<rect x="952.50" y="50.50" width="600.00" height="462.00" fill="#242424"/>
<g clip-path="url(#cloc)" shape-rendering="crispEdges">
<rect x="979.5" y="58.5" width="60" height="4.6" fill="url(#d8)"/>
<rect x="967.5" y="62.5" width="116" height="4.6" fill="url(#d12)"/>
<rect x="960.5" y="66.5" width="159" height="4.6" fill="url(#d16)"/>
<rect x="957.5" y="70.5" width="195" height="4.6" fill="url(#d20)"/>
<rect x="955.5" y="74.5" width="230" height="4.6" fill="url(#d24)"/>
<rect x="953.5" y="78.5" width="269" height="4.6" fill="url(#d28)"/>
<rect x="952.5" y="82.5" width="304" height="4.6" fill="url(#d32)"/>
<rect x="952.5" y="86.5" width="339" height="4.6" fill="url(#d36)"/>
<rect x="952.5" y="90.5" width="376" height="4.6" fill="url(#d40)"/>
<rect x="952.5" y="94.5" width="411" height="4.6" fill="url(#d44)"/>
<rect x="952.5" y="98.5" width="445" height="4.6" fill="url(#d48)"/>
<rect x="952.5" y="102.5" width="480" height="4.6" fill="url(#d52)"/>
<rect x="952.5" y="106.5" width="514" height="4.6" fill="url(#d56)"/>
<rect x="952.5" y="110.5" width="549" height="4.6" fill="url(#d60)"/>
<rect x="952.5" y="114.5" width="584" height="4.6" fill="url(#d64)"/>
<rect x="953.5" y="118.5" width="599" height="4.6" fill="url(#d68)"/>
<rect x="954.5" y="122.5" width="598" height="4.6" fill="url(#d72)"/>
<rect x="955.5" y="126.5" width="597" height="4.6" fill="url(#d76)"/>
<rect x="956.5" y="130.5" width="596" height="4.6" fill="url(#d80)"/>
<rect x="957.5" y="134.5" width="595" height="4.6" fill="url(#d84)"/>
<rect x="958.5" y="138.5" width="594" height="4.6" fill="url(#d88)"/>
<rect x="959.5" y="142.5" width="593" height="4.6" fill="url(#d92)"/>
<rect x="960.5" y="146.5" width="592" height="4.6" fill="url(#d96)"/>
<rect x="961.5" y="150.5" width="589" height="4.6" fill="url(#d100)"/>
<rect x="962.5" y="154.5" width="584" height="4.6" fill="url(#d104)"/>
<rect x="963.5" y="158.5" width="579" height="4.6" fill="url(#d108)"/>
<rect x="965.5" y="162.5" width="573" height="4.6" fill="url(#d112)"/>
<rect x="967.5" y="166.5" width="567" height="4.6" fill="url(#d116)"/>
<rect x="968.5" y="170.5" width="562" height="4.6" fill="url(#d120)"/>
<rect x="969.5" y="174.5" width="558" height="4.6" fill="url(#d124)"/>
<rect x="971.5" y="178.5" width="552" height="4.6" fill="url(#d128)"/>
<rect x="972.5" y="182.5" width="547" height="4.6" fill="url(#d132)"/>
<rect x="974.5" y="186.5" width="541" height="4.6" fill="url(#d136)"/>
<rect x="976.5" y="190.5" width="535" height="4.6" fill="url(#d140)"/>
<rect x="978.5" y="194.5" width="529" height="4.6" fill="url(#d144)"/>
<rect x="979.5" y="198.5" width="524" height="4.6" fill="url(#d148)"/>
<rect x="981.5" y="202.5" width="518" height="4.6" fill="url(#d152)"/>
<rect x="982.5" y="206.5" width="513" height="4.6" fill="url(#d156)"/>
<rect x="984.5" y="210.5" width="508" height="4.6" fill="url(#d160)"/>
<rect x="986.5" y="214.5" width="502" height="4.6" fill="url(#d164)"/>
<rect x="988.5" y="218.5" width="496" height="4.6" fill="url(#d168)"/>
<rect x="989.5" y="222.5" width="491" height="4.6" fill="url(#d172)"/>
<rect x="991.5" y="226.5" width="485" height="4.6" fill="url(#d176)"/>
<rect x="993.5" y="230.5" width="479" height="4.6" fill="url(#d180)"/>
<rect x="995.5" y="234.5" width="473" height="4.6" fill="url(#d184)"/>
<rect x="997.5" y="238.5" width="467" height="4.6" fill="url(#d188)"/>
<rect x="998.5" y="242.5" width="463" height="4.6" fill="url(#d192)"/>
<rect x="1000.5" y="246.5" width="457" height="4.6" fill="url(#d196)"/>
<rect x="1002.5" y="250.5" width="451" height="4.6" fill="url(#d200)"/>
<rect x="1004.5" y="254.5" width="445" height="4.6" fill="url(#d204)"/>
<rect x="1007.5" y="258.5" width="438" height="4.6" fill="url(#d208)"/>
<rect x="1009.5" y="262.5" width="432" height="4.6" fill="url(#d212)"/>
<rect x="1011.5" y="266.5" width="426" height="4.6" fill="url(#d216)"/>
<rect x="1013.5" y="270.5" width="420" height="4.6" fill="url(#d220)"/>
<rect x="1015.5" y="274.5" width="414" height="4.6" fill="url(#d224)"/>
<rect x="1017.5" y="278.5" width="409" height="4.6" fill="url(#d228)"/>
<rect x="1019.5" y="282.5" width="403" height="4.6" fill="url(#d232)"/>
<rect x="1022.5" y="286.5" width="396" height="4.6" fill="url(#d236)"/>
<rect x="1024.5" y="290.5" width="390" height="4.6" fill="url(#d240)"/>
<rect x="1027.5" y="294.5" width="383" height="4.6" fill="url(#d244)"/>
<rect x="1029.5" y="298.5" width="377" height="4.6" fill="url(#d248)"/>
<rect x="1031.5" y="302.5" width="371" height="4.6" fill="url(#d252)"/>
<rect x="1034.5" y="306.5" width="364" height="4.6" fill="url(#d256)"/>
<rect x="1037.5" y="310.5" width="357" height="4.6" fill="url(#d260)"/>
<rect x="1039.5" y="314.5" width="352" height="4.6" fill="url(#d264)"/>
<rect x="1041.5" y="318.5" width="346" height="4.6" fill="url(#d268)"/>
<rect x="1044.5" y="322.5" width="339" height="4.6" fill="url(#d272)"/>
<rect x="1046.5" y="326.5" width="333" height="4.6" fill="url(#d276)"/>
<rect x="1049.5" y="330.5" width="326" height="4.6" fill="url(#d280)"/>
<rect x="1051.5" y="334.5" width="320" height="4.6" fill="url(#d284)"/>
<rect x="1053.5" y="338.5" width="314" height="4.6" fill="url(#d288)"/>
<rect x="1056.5" y="342.5" width="307" height="4.6" fill="url(#d292)"/>
<rect x="1058.5" y="346.5" width="302" height="4.6" fill="url(#d296)"/>
<rect x="1061.5" y="350.5" width="295" height="4.6" fill="url(#d300)"/>
<rect x="1064.5" y="354.5" width="288" height="4.6" fill="url(#d304)"/>
<rect x="1066.5" y="358.5" width="282" height="4.6" fill="url(#d308)"/>
<rect x="1069.5" y="362.5" width="275" height="4.6" fill="url(#d312)"/>
<rect x="1072.5" y="366.5" width="268" height="4.6" fill="url(#d316)"/>
<rect x="1074.5" y="370.5" width="262" height="4.6" fill="url(#d320)"/>
<rect x="1077.5" y="374.5" width="255" height="4.6" fill="url(#d324)"/>
<rect x="1080.5" y="378.5" width="248" height="4.6" fill="url(#d328)"/>
<rect x="1083.5" y="382.5" width="242" height="4.6" fill="url(#d332)"/>
<rect x="1086.5" y="386.5" width="235" height="4.6" fill="url(#d336)"/>
<rect x="1089.5" y="390.5" width="228" height="4.6" fill="url(#d340)"/>
<rect x="1092.5" y="394.5" width="221" height="4.6" fill="url(#d344)"/>
<rect x="1095.5" y="398.5" width="214" height="4.6" fill="url(#d348)"/>
<rect x="1098.5" y="402.5" width="207" height="4.6" fill="url(#d352)"/>
<rect x="1102.5" y="406.5" width="199" height="4.6" fill="url(#d356)"/>
<rect x="1105.5" y="410.5" width="192" height="4.6" fill="url(#d360)"/>
<rect x="1109.5" y="414.5" width="185" height="4.6" fill="url(#d364)"/>
<rect x="1112.5" y="418.5" width="178" height="4.6" fill="url(#d368)"/>
<rect x="1116.5" y="422.5" width="170" height="4.6" fill="url(#d372)"/>
<rect x="1120.5" y="426.5" width="162" height="4.6" fill="url(#d376)"/>
<rect x="1124.5" y="430.5" width="154" height="4.6" fill="url(#d380)"/>
<rect x="1127.5" y="434.5" width="147" height="4.6" fill="url(#d384)"/>
<rect x="1131.5" y="438.5" width="139" height="4.6" fill="url(#d388)"/>
<rect x="1134.5" y="442.5" width="132" height="4.6" fill="url(#d392)"/>
<rect x="1138.5" y="446.5" width="124" height="4.6" fill="url(#d396)"/>
<rect x="1142.5" y="450.5" width="117" height="4.6" fill="url(#d400)"/>
<rect x="1146.5" y="454.5" width="109" height="4.6" fill="url(#d404)"/>
<rect x="1151.5" y="458.5" width="100" height="4.6" fill="url(#d408)"/>
<rect x="1156.5" y="462.5" width="91" height="4.6" fill="url(#d412)"/>
<rect x="1161.5" y="466.5" width="82" height="4.6" fill="url(#d416)"/>
<rect x="1166.5" y="470.5" width="73" height="4.6" fill="url(#d420)"/>
<rect x="1171.5" y="474.5" width="64" height="4.6" fill="url(#d424)"/>
<rect x="1176.5" y="478.5" width="55" height="4.6" fill="url(#d428)"/>
<rect x="1181.5" y="482.5" width="47" height="4.6" fill="url(#d432)"/>
<rect x="1185.5" y="486.5" width="39" height="4.6" fill="url(#d436)"/>
<rect x="1190.5" y="490.5" width="30" height="4.6" fill="url(#d440)"/>
<rect x="1195.5" y="494.5" width="21" height="4.6" fill="url(#d444)"/>
<rect x="1200.5" y="498.5" width="12" height="4.6" fill="url(#d448)"/>
</g>
<g clip-path="url(#ctri)" shape-rendering="crispEdges">
<rect x="1048.5" y="65.5" width="5" height="3.6" fill="url(#r15)"/>
<rect x="1048.5" y="68.5" width="35" height="3.6" fill="url(#r18)"/>
<rect x="1049.5" y="71.5" width="64" height="3.6" fill="url(#r21)"/>
<rect x="1050.5" y="74.5" width="92" height="3.6" fill="url(#r24)"/>
<rect x="1050.5" y="77.5" width="122" height="3.6" fill="url(#r27)"/>
<rect x="1051.5" y="80.5" width="151" height="3.6" fill="url(#r30)"/>
<rect x="1052.5" y="83.5" width="180" height="3.6" fill="url(#r33)"/>
<rect x="1053.5" y="86.5" width="208" height="3.6" fill="url(#r36)"/>
<rect x="1053.5" y="89.5" width="238" height="3.6" fill="url(#r39)"/>
<rect x="1054.5" y="92.5" width="267" height="3.6" fill="url(#r42)"/>
<rect x="1055.5" y="95.5" width="296" height="3.6" fill="url(#r45)"/>
<rect x="1055.5" y="98.5" width="326" height="3.6" fill="url(#r48)"/>
<rect x="1056.5" y="101.5" width="354" height="3.6" fill="url(#r51)"/>
<rect x="1057.5" y="104.5" width="383" height="3.6" fill="url(#r54)"/>
<rect x="1058.5" y="107.5" width="392" height="3.6" fill="url(#r57)"/>
<rect x="1058.5" y="110.5" width="389" height="3.6" fill="url(#r60)"/>
<rect x="1059.5" y="113.5" width="384" height="3.6" fill="url(#r63)"/>
<rect x="1060.5" y="116.5" width="380" height="3.6" fill="url(#r66)"/>
<rect x="1060.5" y="119.5" width="376" height="3.6" fill="url(#r69)"/>
<rect x="1061.5" y="122.5" width="372" height="3.6" fill="url(#r72)"/>
<rect x="1062.5" y="125.5" width="368" height="3.6" fill="url(#r75)"/>
<rect x="1063.5" y="128.5" width="363" height="3.6" fill="url(#r78)"/>
<rect x="1063.5" y="131.5" width="360" height="3.6" fill="url(#r81)"/>
<rect x="1064.5" y="134.5" width="355" height="3.6" fill="url(#r84)"/>
<rect x="1065.5" y="137.5" width="351" height="3.6" fill="url(#r87)"/>
<rect x="1065.5" y="140.5" width="348" height="3.6" fill="url(#r90)"/>
<rect x="1066.5" y="143.5" width="343" height="3.6" fill="url(#r93)"/>
<rect x="1067.5" y="146.5" width="339" height="3.6" fill="url(#r96)"/>
<rect x="1068.5" y="149.5" width="335" height="3.6" fill="url(#r99)"/>
<rect x="1068.5" y="152.5" width="331" height="3.6" fill="url(#r102)"/>
<rect x="1069.5" y="155.5" width="327" height="3.6" fill="url(#r105)"/>
<rect x="1070.5" y="158.5" width="322" height="3.6" fill="url(#r108)"/>
<rect x="1070.5" y="161.5" width="319" height="3.6" fill="url(#r111)"/>
<rect x="1071.5" y="164.5" width="315" height="3.6" fill="url(#r114)"/>
<rect x="1072.5" y="167.5" width="310" height="3.6" fill="url(#r117)"/>
<rect x="1073.5" y="170.5" width="306" height="3.6" fill="url(#r120)"/>
<rect x="1073.5" y="173.5" width="302" height="3.6" fill="url(#r123)"/>
<rect x="1074.5" y="176.5" width="298" height="3.6" fill="url(#r126)"/>
<rect x="1075.5" y="179.5" width="294" height="3.6" fill="url(#r129)"/>
<rect x="1075.5" y="182.5" width="290" height="3.6" fill="url(#r132)"/>
<rect x="1076.5" y="185.5" width="286" height="3.6" fill="url(#r135)"/>
<rect x="1077.5" y="188.5" width="281" height="3.6" fill="url(#r138)"/>
<rect x="1078.5" y="191.5" width="277" height="3.6" fill="url(#r141)"/>
<rect x="1078.5" y="194.5" width="274" height="3.6" fill="url(#r144)"/>
<rect x="1079.5" y="197.5" width="269" height="3.6" fill="url(#r147)"/>
<rect x="1080.5" y="200.5" width="265" height="3.6" fill="url(#r150)"/>
<rect x="1080.5" y="203.5" width="261" height="3.6" fill="url(#r153)"/>
<rect x="1081.5" y="206.5" width="257" height="3.6" fill="url(#r156)"/>
<rect x="1082.5" y="209.5" width="253" height="3.6" fill="url(#r159)"/>
<rect x="1083.5" y="212.5" width="248" height="3.6" fill="url(#r162)"/>
<rect x="1083.5" y="215.5" width="245" height="3.6" fill="url(#r165)"/>
<rect x="1084.5" y="218.5" width="240" height="3.6" fill="url(#r168)"/>
<rect x="1085.5" y="221.5" width="236" height="3.6" fill="url(#r171)"/>
<rect x="1085.5" y="224.5" width="233" height="3.6" fill="url(#r174)"/>
<rect x="1086.5" y="227.5" width="228" height="3.6" fill="url(#r177)"/>
<rect x="1087.5" y="230.5" width="224" height="3.6" fill="url(#r180)"/>
<rect x="1088.5" y="233.5" width="220" height="3.6" fill="url(#r183)"/>
<rect x="1088.5" y="236.5" width="216" height="3.6" fill="url(#r186)"/>
<rect x="1089.5" y="239.5" width="212" height="3.6" fill="url(#r189)"/>
<rect x="1090.5" y="242.5" width="207" height="3.6" fill="url(#r192)"/>
<rect x="1090.5" y="245.5" width="204" height="3.6" fill="url(#r195)"/>
<rect x="1091.5" y="248.5" width="200" height="3.6" fill="url(#r198)"/>
<rect x="1092.5" y="251.5" width="195" height="3.6" fill="url(#r201)"/>
<rect x="1093.5" y="254.5" width="191" height="3.6" fill="url(#r204)"/>
<rect x="1093.5" y="257.5" width="187" height="3.6" fill="url(#r207)"/>
<rect x="1094.5" y="260.5" width="183" height="3.6" fill="url(#r210)"/>
<rect x="1095.5" y="263.5" width="179" height="3.6" fill="url(#r213)"/>
<rect x="1095.5" y="266.5" width="175" height="3.6" fill="url(#r216)"/>
<rect x="1096.5" y="269.5" width="171" height="3.6" fill="url(#r219)"/>
<rect x="1097.5" y="272.5" width="166" height="3.6" fill="url(#r222)"/>
<rect x="1098.5" y="275.5" width="162" height="3.6" fill="url(#r225)"/>
<rect x="1098.5" y="278.5" width="159" height="3.6" fill="url(#r228)"/>
<rect x="1099.5" y="281.5" width="154" height="3.6" fill="url(#r231)"/>
<rect x="1100.5" y="284.5" width="150" height="3.6" fill="url(#r234)"/>
<rect x="1100.5" y="287.5" width="146" height="3.6" fill="url(#r237)"/>
<rect x="1101.5" y="290.5" width="142" height="3.6" fill="url(#r240)"/>
<rect x="1102.5" y="293.5" width="138" height="3.6" fill="url(#r243)"/>
<rect x="1103.5" y="296.5" width="133" height="3.6" fill="url(#r246)"/>
<rect x="1103.5" y="299.5" width="130" height="3.6" fill="url(#r249)"/>
<rect x="1104.5" y="302.5" width="126" height="3.6" fill="url(#r252)"/>
<rect x="1105.5" y="305.5" width="121" height="3.6" fill="url(#r255)"/>
<rect x="1105.5" y="308.5" width="118" height="3.6" fill="url(#r258)"/>
<rect x="1106.5" y="311.5" width="113" height="3.6" fill="url(#r261)"/>
<rect x="1107.5" y="314.5" width="109" height="3.6" fill="url(#r264)"/>
<rect x="1108.5" y="317.5" width="105" height="3.6" fill="url(#r267)"/>
<rect x="1108.5" y="320.5" width="101" height="3.6" fill="url(#r270)"/>
<rect x="1109.5" y="323.5" width="97" height="3.6" fill="url(#r273)"/>
<rect x="1110.5" y="326.5" width="92" height="3.6" fill="url(#r276)"/>
<rect x="1110.5" y="329.5" width="89" height="3.6" fill="url(#r279)"/>
<rect x="1111.5" y="332.5" width="85" height="3.6" fill="url(#r282)"/>
<rect x="1112.5" y="335.5" width="80" height="3.6" fill="url(#r285)"/>
<rect x="1113.5" y="338.5" width="76" height="3.6" fill="url(#r288)"/>
<rect x="1113.5" y="341.5" width="72" height="3.6" fill="url(#r291)"/>
<rect x="1114.5" y="344.5" width="68" height="3.6" fill="url(#r294)"/>
<rect x="1115.5" y="347.5" width="64" height="3.6" fill="url(#r297)"/>
<rect x="1115.5" y="350.5" width="60" height="3.6" fill="url(#r300)"/>
<rect x="1116.5" y="353.5" width="56" height="3.6" fill="url(#r303)"/>
<rect x="1117.5" y="356.5" width="51" height="3.6" fill="url(#r306)"/>
<rect x="1118.5" y="359.5" width="47" height="3.6" fill="url(#r309)"/>
<rect x="1118.5" y="362.5" width="44" height="3.6" fill="url(#r312)"/>
<rect x="1119.5" y="365.5" width="39" height="3.6" fill="url(#r315)"/>
<rect x="1120.5" y="368.5" width="35" height="3.6" fill="url(#r318)"/>
<rect x="1120.5" y="371.5" width="31" height="3.6" fill="url(#r321)"/>
<rect x="1121.5" y="374.5" width="27" height="3.6" fill="url(#r324)"/>
<rect x="1122.5" y="377.5" width="23" height="3.6" fill="url(#r327)"/>
<rect x="1123.5" y="380.5" width="18" height="3.6" fill="url(#r330)"/>
<rect x="1123.5" y="383.5" width="15" height="3.6" fill="url(#r333)"/>
<rect x="1124.5" y="386.5" width="11" height="3.6" fill="url(#r336)"/>
<rect x="1125.5" y="389.5" width="6" height="3.6" fill="url(#r339)"/>
</g>
<rect x="952.5" y="50.5" width="600.0" height="462.0" fill="none" stroke="#a4a4a4" stroke-width="1.1"/>
<line x1="946.50" y1="512.50" x2="952.50" y2="512.50" stroke="#d8d8d8" stroke-width="1.3"/>
<text x="945.5" y="519.1" font-size="13" fill="#d4d4d4" text-anchor="end">0</text>
<line x1="952.40" y1="512.50" x2="952.40" y2="519.00" stroke="#d8d8d8" stroke-width="1.3"/>
<text x="952.4" y="533" font-size="13" fill="#d4d4d4" text-anchor="middle">0</text>
<line x1="946.50" y1="474.13" x2="952.50" y2="474.13" stroke="#d8d8d8" stroke-width="1.3"/>
<text x="945.5" y="480.735" font-size="13" fill="#d4d4d4" text-anchor="end">0,05</text>
<line x1="1002.31" y1="512.50" x2="1002.31" y2="519.00" stroke="#d8d8d8" stroke-width="1.3"/>
<text x="1002.3149999999999" y="533" font-size="13" fill="#d4d4d4" text-anchor="middle">0,05</text>
<line x1="946.50" y1="435.77" x2="952.50" y2="435.77" stroke="#d8d8d8" stroke-width="1.3"/>
<text x="945.5" y="442.37" font-size="13" fill="#d4d4d4" text-anchor="end">0,1</text>
<line x1="1052.23" y1="512.50" x2="1052.23" y2="519.00" stroke="#d8d8d8" stroke-width="1.3"/>
<text x="1052.23" y="533" font-size="13" fill="#d4d4d4" text-anchor="middle">0,1</text>
<line x1="946.50" y1="397.40" x2="952.50" y2="397.40" stroke="#d8d8d8" stroke-width="1.3"/>
<text x="945.5" y="404.005" font-size="13" fill="#d4d4d4" text-anchor="end">0,15</text>
<line x1="1102.14" y1="512.50" x2="1102.14" y2="519.00" stroke="#d8d8d8" stroke-width="1.3"/>
<text x="1102.145" y="533" font-size="13" fill="#d4d4d4" text-anchor="middle">0,15</text>
<line x1="946.50" y1="359.04" x2="952.50" y2="359.04" stroke="#d8d8d8" stroke-width="1.3"/>
<text x="945.5" y="365.64" font-size="13" fill="#d4d4d4" text-anchor="end">0,2</text>
<line x1="1152.06" y1="512.50" x2="1152.06" y2="519.00" stroke="#d8d8d8" stroke-width="1.3"/>
<text x="1152.06" y="533" font-size="13" fill="#d4d4d4" text-anchor="middle">0,2</text>
<line x1="946.50" y1="320.68" x2="952.50" y2="320.68" stroke="#d8d8d8" stroke-width="1.3"/>
<text x="945.5" y="327.27500000000003" font-size="13" fill="#d4d4d4" text-anchor="end">0,25</text>
<line x1="1201.97" y1="512.50" x2="1201.97" y2="519.00" stroke="#d8d8d8" stroke-width="1.3"/>
<text x="1201.975" y="533" font-size="13" fill="#d4d4d4" text-anchor="middle">0,25</text>
<line x1="946.50" y1="282.31" x2="952.50" y2="282.31" stroke="#d8d8d8" stroke-width="1.3"/>
<text x="945.5" y="288.90999999999997" font-size="13" fill="#d4d4d4" text-anchor="end">0,3</text>
<line x1="1251.89" y1="512.50" x2="1251.89" y2="519.00" stroke="#d8d8d8" stroke-width="1.3"/>
<text x="1251.8899999999999" y="533" font-size="13" fill="#d4d4d4" text-anchor="middle">0,3</text>
<line x1="946.50" y1="243.94" x2="952.50" y2="243.94" stroke="#d8d8d8" stroke-width="1.3"/>
<text x="945.5" y="250.545" font-size="13" fill="#d4d4d4" text-anchor="end">0,35</text>
<line x1="1301.81" y1="512.50" x2="1301.81" y2="519.00" stroke="#d8d8d8" stroke-width="1.3"/>
<text x="1301.805" y="533" font-size="13" fill="#d4d4d4" text-anchor="middle">0,35</text>
<line x1="946.50" y1="205.58" x2="952.50" y2="205.58" stroke="#d8d8d8" stroke-width="1.3"/>
<text x="945.5" y="212.17999999999998" font-size="13" fill="#d4d4d4" text-anchor="end">0,4</text>
<line x1="1351.72" y1="512.50" x2="1351.72" y2="519.00" stroke="#d8d8d8" stroke-width="1.3"/>
<text x="1351.72" y="533" font-size="13" fill="#d4d4d4" text-anchor="middle">0,4</text>
<line x1="946.50" y1="167.22" x2="952.50" y2="167.22" stroke="#d8d8d8" stroke-width="1.3"/>
<text x="945.5" y="173.81500000000003" font-size="13" fill="#d4d4d4" text-anchor="end">0,45</text>
<line x1="1401.63" y1="512.50" x2="1401.63" y2="519.00" stroke="#d8d8d8" stroke-width="1.3"/>
<text x="1401.635" y="533" font-size="13" fill="#d4d4d4" text-anchor="middle">0,45</text>
<line x1="946.50" y1="128.85" x2="952.50" y2="128.85" stroke="#d8d8d8" stroke-width="1.3"/>
<text x="945.5" y="135.45000000000002" font-size="13" fill="#d4d4d4" text-anchor="end">0,5</text>
<line x1="1451.55" y1="512.50" x2="1451.55" y2="519.00" stroke="#d8d8d8" stroke-width="1.3"/>
<text x="1451.55" y="533" font-size="13" fill="#d4d4d4" text-anchor="middle">0,5</text>
<line x1="946.50" y1="90.49" x2="952.50" y2="90.49" stroke="#d8d8d8" stroke-width="1.3"/>
<text x="945.5" y="97.08500000000001" font-size="13" fill="#d4d4d4" text-anchor="end">0,55</text>
<line x1="1501.47" y1="512.50" x2="1501.47" y2="519.00" stroke="#d8d8d8" stroke-width="1.3"/>
<text x="1501.4650000000001" y="533" font-size="13" fill="#d4d4d4" text-anchor="middle">0,55</text>
<rect x="1113.8" y="119.7" width="12.6" height="12.6" fill="none" stroke="#fff" stroke-width="1.2" stroke-opacity="0.92"/>
<rect x="1090.6" y="100.7" width="12.6" height="12.6" fill="none" stroke="#fff" stroke-width="1.2" stroke-opacity="0.92"/>
<rect x="1071.6" y="84.7" width="12.6" height="12.6" fill="none" stroke="#fff" stroke-width="1.2" stroke-opacity="0.92"/>
<rect x="1057.7" y="71.5" width="12.6" height="12.6" fill="none" stroke="#fff" stroke-width="1.2" stroke-opacity="0.92"/>
<rect x="1044.7" y="61.9" width="12.6" height="12.6" fill="none" stroke="#fff" stroke-width="1.2" stroke-opacity="0.92"/>
<rect x="1145.7" y="126.7" width="12.6" height="12.6" fill="none" stroke="#fff" stroke-width="1.2" stroke-opacity="0.92"/>
<rect x="1146.8" y="110.6" width="12.6" height="12.6" fill="none" stroke="#fff" stroke-width="1.2" stroke-opacity="0.92"/>
<rect x="1147.7" y="96.9" width="12.6" height="12.6" fill="none" stroke="#fff" stroke-width="1.2" stroke-opacity="0.92"/>
<rect x="1149.7" y="83.4" width="12.6" height="12.6" fill="none" stroke="#fff" stroke-width="1.2" stroke-opacity="0.92"/>
<rect x="1150.6" y="71.5" width="12.6" height="12.6" fill="none" stroke="#fff" stroke-width="1.2" stroke-opacity="0.92"/>
<rect x="1127.5" y="147.5" width="12.6" height="12.6" fill="none" stroke="#fff" stroke-width="1.2" stroke-opacity="0.92"/>
<rect x="1112.6" y="150.3" width="12.6" height="12.6" fill="none" stroke="#fff" stroke-width="1.2" stroke-opacity="0.92"/>
<rect x="1096.6" y="151.5" width="12.6" height="12.6" fill="none" stroke="#fff" stroke-width="1.2" stroke-opacity="0.92"/>
<rect x="1081.6" y="154.1" width="12.6" height="12.6" fill="none" stroke="#fff" stroke-width="1.2" stroke-opacity="0.92"/>
<rect x="1066.7" y="156.6" width="12.6" height="12.6" fill="none" stroke="#fff" stroke-width="1.2" stroke-opacity="0.92"/>
<rect x="1195.7" y="137.7" width="12.6" height="12.6" fill="none" stroke="#fff" stroke-width="1.2" stroke-opacity="0.92"/>
<rect x="1250.8" y="130.7" width="12.6" height="12.6" fill="none" stroke="#fff" stroke-width="1.2" stroke-opacity="0.92"/>
<rect x="1313.6" y="119.6" width="12.6" height="12.6" fill="none" stroke="#fff" stroke-width="1.2" stroke-opacity="0.92"/>
<rect x="1376.0" y="110.7" width="12.6" height="12.6" fill="none" stroke="#fff" stroke-width="1.2" stroke-opacity="0.92"/>
<rect x="1441.6" y="100.6" width="12.6" height="12.6" fill="none" stroke="#fff" stroke-width="1.2" stroke-opacity="0.92"/>
<rect x="1160.6" y="159.7" width="12.6" height="12.6" fill="none" stroke="#fff" stroke-width="1.2" stroke-opacity="0.92"/>
<rect x="1181.8" y="177.7" width="12.6" height="12.6" fill="none" stroke="#fff" stroke-width="1.2" stroke-opacity="0.92"/>
<rect x="1206.8" y="199.2" width="12.6" height="12.6" fill="none" stroke="#fff" stroke-width="1.2" stroke-opacity="0.92"/>
<rect x="1234.7" y="223.7" width="12.6" height="12.6" fill="none" stroke="#fff" stroke-width="1.2" stroke-opacity="0.92"/>
<rect x="1270.7" y="252.7" width="12.6" height="12.6" fill="none" stroke="#fff" stroke-width="1.2" stroke-opacity="0.92"/>
<rect x="1140.6" y="173.6" width="12.6" height="12.6" fill="none" stroke="#fff" stroke-width="1.2" stroke-opacity="0.92"/>
<rect x="1137.8" y="209.7" width="12.6" height="12.6" fill="none" stroke="#fff" stroke-width="1.2" stroke-opacity="0.92"/>
<rect x="1133.7" y="252.8" width="12.6" height="12.6" fill="none" stroke="#fff" stroke-width="1.2" stroke-opacity="0.92"/>
<rect x="1127.9" y="310.7" width="12.6" height="12.6" fill="none" stroke="#fff" stroke-width="1.2" stroke-opacity="0.92"/>
<rect x="1121.6" y="384.7" width="12.6" height="12.6" fill="none" stroke="#fff" stroke-width="1.2" stroke-opacity="0.92"/>
<rect x="1142.8" y="145.8" width="12.4" height="12.4" fill="none" stroke="#000" stroke-width="1.9" stroke-opacity="1"/>
<circle cx="1117.4" cy="130.5" r="3.9" fill="#95a995" stroke="#000" stroke-width="1.1"/>
<circle cx="1096.4" cy="108.3" r="3.9" fill="#7ba57b" stroke="#000" stroke-width="1.1"/>
<circle cx="1080.4" cy="91.3" r="3.9" fill="#60a160" stroke="#000" stroke-width="1.1"/>
<circle cx="1066.5" cy="77.4" r="3.9" fill="#3f9c3f" stroke="#000" stroke-width="1.1"/>
<circle cx="1056.4" cy="67.4" r="3.9" fill="#149614" stroke="#000" stroke-width="1.1"/>
<circle cx="1145.5" cy="135.5" r="3.9" fill="#b0af95" stroke="#000" stroke-width="1.1"/>
<circle cx="1145.5" cy="119.9" r="3.9" fill="#b5b27b" stroke="#000" stroke-width="1.1"/>
<circle cx="1146.5" cy="104.5" r="3.9" fill="#bab660" stroke="#000" stroke-width="1.1"/>
<circle cx="1147.9" cy="89.7" r="3.9" fill="#c0ba3f" stroke="#000" stroke-width="1.1"/>
<circle cx="1149.3" cy="76.4" r="3.9" fill="#c8c014" stroke="#000" stroke-width="1.1"/>
<circle cx="1130.3" cy="158.4" r="3.9" fill="#98afaf" stroke="#000" stroke-width="1.1"/>
<circle cx="1116.4" cy="160.4" r="3.9" fill="#82b2b2" stroke="#000" stroke-width="1.1"/>
<circle cx="1103.6" cy="162.4" r="3.9" fill="#6ab5b5" stroke="#000" stroke-width="1.1"/>
<circle cx="1090.5" cy="164.2" r="3.9" fill="#4db9b9" stroke="#000" stroke-width="1.1"/>
<circle cx="1077.4" cy="165.2" r="3.9" fill="#28bebe" stroke="#000" stroke-width="1.1"/>
<circle cx="1190.4" cy="149.3" r="3.9" fill="#af9595" stroke="#000" stroke-width="1.1"/>
<circle cx="1242.4" cy="141.5" r="3.9" fill="#b27b7b" stroke="#000" stroke-width="1.1"/>
<circle cx="1307.4" cy="131.1" r="3.9" fill="#b56060" stroke="#000" stroke-width="1.1"/>
<circle cx="1372.4" cy="121.3" r="3.9" fill="#b93f3f" stroke="#000" stroke-width="1.1"/>
<circle cx="1449.8" cy="109.3" r="3.9" fill="#be1414" stroke="#000" stroke-width="1.1"/>
<circle cx="1159.5" cy="172.4" r="3.9" fill="#af97af" stroke="#000" stroke-width="1.1"/>
<circle cx="1177.5" cy="190.0" r="3.9" fill="#b27fb2" stroke="#000" stroke-width="1.1"/>
<circle cx="1200.5" cy="214.5" r="3.9" fill="#b565b5" stroke="#000" stroke-width="1.1"/>
<circle cx="1228.4" cy="241.2" r="3.9" fill="#b946b9" stroke="#000" stroke-width="1.1"/>
<circle cx="1261.3" cy="275.4" r="3.9" fill="#be1ebe" stroke="#000" stroke-width="1.1"/>
<circle cx="1141.5" cy="185.0" r="3.9" fill="#9898af" stroke="#000" stroke-width="1.1"/>
<circle cx="1139.3" cy="220.4" r="3.9" fill="#8282b2" stroke="#000" stroke-width="1.1"/>
<circle cx="1136.5" cy="264.4" r="3.9" fill="#6a6ab5" stroke="#000" stroke-width="1.1"/>
<circle cx="1132.6" cy="321.6" r="3.9" fill="#4d4db9" stroke="#000" stroke-width="1.1"/>
<circle cx="1127.3" cy="393.3" r="3.9" fill="#2828be" stroke="#000" stroke-width="1.1"/>
<circle cx="1137.6" cy="190.0" r="3.9" fill="#000" stroke="#000" stroke-width="1.1"/>
<circle cx="1144.5" cy="158.6" r="3.9" fill="#fff" stroke="#000" stroke-width="1.1"/>
<rect x="1345.50" y="367.70" width="204.40" height="139.60" fill="#2b2b2b"/>
<g clip-path="url(#cins)">
<rect x="1348.00" y="370.20" width="199.40" height="134.60" fill="url(#ins)"/>
<path d="M1348.0 378.3L1547.4 496.4V370.2H1348.0Z" fill="#000" fill-opacity="0.4"/>
<path d="M1448.6 370.2L1547.4 436V370.2Z" fill="#242424"/>
</g>
<rect x="1348.0" y="370.2" width="199.4" height="134.6" fill="none" stroke="#8c8c8c" stroke-width="1.3"/>
<rect x="1439.2" y="430.9" width="12.6" height="12.6" fill="none" stroke="#fff" stroke-width="1.2" stroke-opacity="0.92"/>
<ellipse cx="1412.2" cy="407.5" rx="3.4" ry="4" fill="#c8b400" stroke="#000" stroke-width="1.1"/>
<text x="44.7" y="575" font-size="26" fill="#f2f2f2" textLength="219" lengthAdjust="spacingAndGlyphs">Avg dE2000: 2,98</text>
<text x="41" y="613" font-size="26" fill="#f2f2f2" textLength="226.5" lengthAdjust="spacingAndGlyphs">Max dE2000: 6,99</text>
<text x="11.4" y="658.7" font-size="26.5" fill="#f2f2f2" textLength="99" lengthAdjust="spacingAndGlyphs">Current</text>
<text x="115.7" y="658.7" font-size="26.5" fill="#f2f2f2" textLength="100.5" lengthAdjust="spacingAndGlyphs">Reading</text>
<text x="11.4" y="691.7" font-size="21.5" fill="#f2f2f2" textLength="82.3" lengthAdjust="spacingAndGlyphs">x: 0,429</text>
<text x="158.5" y="691.7" font-size="21.5" fill="#f2f2f2" textLength="96.3" lengthAdjust="spacingAndGlyphs">y: 0,5468</text>
<text x="11.4" y="730.4" font-size="21.5" fill="#f2f2f2" textLength="90.2" lengthAdjust="spacingAndGlyphs">fL: 87,24</text>
<text x="11.4" y="761.8" font-size="21.5" fill="#f2f2f2" textLength="148.6" lengthAdjust="spacingAndGlyphs">cd/m²: 298,92</text>
<text x="435" y="576.8" font-size="12.3" fill="#d4d4d4" text-anchor="middle" textLength="77.5" lengthAdjust="spacingAndGlyphs">RGB Balance</text>
<rect x="332.50" y="582.50" width="233.90" height="169.20" fill="#242424"/>
<line x1="332.50" y1="600.60" x2="566.40" y2="600.60" stroke="#9a9a9a" stroke-width="1"/>
<line x1="327.50" y1="600.60" x2="332.50" y2="600.60" stroke="#e0e0e0" stroke-width="1.5"/>
<text x="326.5" y="605.6999999999999" font-size="13.3" fill="#d4d4d4" text-anchor="end">104</text>
<line x1="332.50" y1="634.20" x2="566.40" y2="634.20" stroke="#9a9a9a" stroke-width="1"/>
<line x1="327.50" y1="634.20" x2="332.50" y2="634.20" stroke="#e0e0e0" stroke-width="1.5"/>
<text x="326.5" y="639.3" font-size="13.3" fill="#d4d4d4" text-anchor="end">102</text>
<line x1="332.50" y1="667.80" x2="566.40" y2="667.80" stroke="#9a9a9a" stroke-width="1"/>
<line x1="327.50" y1="667.80" x2="332.50" y2="667.80" stroke="#e0e0e0" stroke-width="1.5"/>
<text x="326.5" y="672.9" font-size="13.3" fill="#d4d4d4" text-anchor="end">100</text>
<line x1="332.50" y1="701.40" x2="566.40" y2="701.40" stroke="#9a9a9a" stroke-width="1"/>
<line x1="327.50" y1="701.40" x2="332.50" y2="701.40" stroke="#e0e0e0" stroke-width="1.5"/>
<text x="326.5" y="706.5" font-size="13.3" fill="#d4d4d4" text-anchor="end">98</text>
<line x1="332.50" y1="735.00" x2="566.40" y2="735.00" stroke="#9a9a9a" stroke-width="1"/>
<line x1="327.50" y1="735.00" x2="332.50" y2="735.00" stroke="#e0e0e0" stroke-width="1.5"/>
<text x="326.5" y="740.1" font-size="13.3" fill="#d4d4d4" text-anchor="end">96</text>
<rect x="332.5" y="582.5" width="233.9" height="169.2" fill="none" stroke="#9a9a9a" stroke-width="1.2"/>
<line x1="332.50" y1="751.70" x2="332.50" y2="756.70" stroke="#d0d0d0" stroke-width="1.3"/>
<line x1="566.40" y1="751.70" x2="566.40" y2="756.70" stroke="#d0d0d0" stroke-width="1.3"/>
<rect x="355.60" y="676.70" width="60.90" height="75.00" fill="url(#gr)" stroke="#000" stroke-width="1.2"/>
<rect x="417.60" y="622.80" width="61.60" height="128.90" fill="url(#gg)" stroke="#000" stroke-width="1.4"/>
<rect x="480.50" y="713.60" width="61.20" height="38.10" fill="url(#gb)" stroke="#000" stroke-width="1.2"/>
<line x1="332.50" y1="751.70" x2="566.40" y2="751.70" stroke="#9a9a9a" stroke-width="1.2"/>
<text x="449.4" y="766.4" font-size="13" fill="#d4d4d4" text-anchor="middle" textLength="33" lengthAdjust="spacingAndGlyphs">100%</text>
<rect x="584.90" y="552.10" width="686.10" height="222.40" fill="#1a1a1a"/>
<rect x="586.70" y="553.60" width="682.50" height="13.50" fill="#2c2c2c"/>
<rect x="586.70" y="567.10" width="682.50" height="12.40" fill="#141414"/>
<rect x="586.70" y="579.50" width="682.50" height="24.47" fill="#414141"/>
<text x="604" y="597.4" font-size="16" fill="#ffffff" font-weight="bold" textLength="80.5" lengthAdjust="spacingAndGlyphs">x: CIE31</text>
<text x="775.7" y="597.4" font-size="16" fill="#e4e4e4" textLength="63" lengthAdjust="spacingAndGlyphs">0,3257</text>
<text x="875.5500000000001" y="597.4" font-size="16" fill="#e4e4e4" textLength="63" lengthAdjust="spacingAndGlyphs">0,3479</text>
<text x="975.4000000000001" y="597.4" font-size="16" fill="#e4e4e4" textLength="63" lengthAdjust="spacingAndGlyphs">0,3742</text>
<text x="1075.25" y="597.4" font-size="16" fill="#e4e4e4" textLength="63" lengthAdjust="spacingAndGlyphs">0,4015</text>
<text x="1175.1" y="597.4" font-size="16" fill="#e4e4e4" textLength="63" lengthAdjust="spacingAndGlyphs">0,4290</text>
<rect x="586.70" y="603.77" width="682.50" height="24.47" fill="#828282"/>
<text x="604" y="621.67" font-size="16" fill="#ffffff" font-weight="bold" textLength="80.5" lengthAdjust="spacingAndGlyphs">y: CIE31</text>
<text x="775.7" y="621.67" font-size="16" fill="#e4e4e4" textLength="63" lengthAdjust="spacingAndGlyphs">0,3665</text>
<text x="875.5500000000001" y="621.67" font-size="16" fill="#e4e4e4" textLength="63" lengthAdjust="spacingAndGlyphs">0,4054</text>
<text x="975.4000000000001" y="621.67" font-size="16" fill="#e4e4e4" textLength="63" lengthAdjust="spacingAndGlyphs">0,4514</text>
<text x="1075.25" y="621.67" font-size="16" fill="#e4e4e4" textLength="63" lengthAdjust="spacingAndGlyphs">0,4990</text>
<text x="1175.1" y="621.67" font-size="16" fill="#e4e4e4" textLength="63" lengthAdjust="spacingAndGlyphs">0,5468</text>
<rect x="586.70" y="628.04" width="682.50" height="24.47" fill="#414141"/>
<text x="604" y="645.9399999999999" font-size="16" fill="#ffffff" font-weight="bold" textLength="11.5" lengthAdjust="spacingAndGlyphs">Y</text>
<text x="775.7" y="645.9399999999999" font-size="16" fill="#e4e4e4" textLength="86" lengthAdjust="spacingAndGlyphs">318,3813</text>
<text x="875.5500000000001" y="645.9399999999999" font-size="16" fill="#e4e4e4" textLength="86" lengthAdjust="spacingAndGlyphs">312,7370</text>
<text x="975.4000000000001" y="645.9399999999999" font-size="16" fill="#e4e4e4" textLength="86" lengthAdjust="spacingAndGlyphs">307,4064</text>
<text x="1075.25" y="645.9399999999999" font-size="16" fill="#e4e4e4" textLength="86" lengthAdjust="spacingAndGlyphs">303,0500</text>
<text x="1175.1" y="645.9399999999999" font-size="16" fill="#e4e4e4" textLength="86" lengthAdjust="spacingAndGlyphs">298,9227</text>
<rect x="586.70" y="652.31" width="682.50" height="24.47" fill="#828282"/>
<text x="604" y="670.2099999999999" font-size="16" fill="#ffffff" font-weight="bold" textLength="147" lengthAdjust="spacingAndGlyphs">Target x:CIE31</text>
<text x="775.7" y="670.2099999999999" font-size="16" fill="#e4e4e4" textLength="63" lengthAdjust="spacingAndGlyphs">0,3384</text>
<text x="875.5500000000001" y="670.2099999999999" font-size="16" fill="#e4e4e4" textLength="63" lengthAdjust="spacingAndGlyphs">0,3619</text>
<text x="975.4000000000001" y="670.2099999999999" font-size="16" fill="#e4e4e4" textLength="63" lengthAdjust="spacingAndGlyphs">0,3869</text>
<text x="1075.25" y="670.2099999999999" font-size="16" fill="#e4e4e4" textLength="63" lengthAdjust="spacingAndGlyphs">0,4127</text>
<text x="1175.1" y="670.2099999999999" font-size="16" fill="#e4e4e4" textLength="63" lengthAdjust="spacingAndGlyphs">0,4378</text>
<rect x="586.70" y="676.58" width="682.50" height="24.47" fill="#414141"/>
<text x="604" y="694.48" font-size="16" fill="#ffffff" font-weight="bold" textLength="147" lengthAdjust="spacingAndGlyphs">Target y:CIE31</text>
<text x="775.7" y="694.48" font-size="16" fill="#e4e4e4" textLength="63" lengthAdjust="spacingAndGlyphs">0,3714</text>
<text x="875.5500000000001" y="694.48" font-size="16" fill="#e4e4e4" textLength="63" lengthAdjust="spacingAndGlyphs">0,4103</text>
<text x="975.4000000000001" y="694.48" font-size="16" fill="#e4e4e4" textLength="63" lengthAdjust="spacingAndGlyphs">0,4517</text>
<text x="1075.25" y="694.48" font-size="16" fill="#e4e4e4" textLength="63" lengthAdjust="spacingAndGlyphs">0,4944</text>
<text x="1175.1" y="694.48" font-size="16" fill="#e4e4e4" textLength="63" lengthAdjust="spacingAndGlyphs">0,5359</text>
<rect x="586.70" y="700.85" width="682.50" height="24.47" fill="#828282"/>
<text x="604" y="718.75" font-size="16" fill="#ffffff" font-weight="bold" textLength="85" lengthAdjust="spacingAndGlyphs">Target Y</text>
<text x="775.7" y="718.75" font-size="16" fill="#e4e4e4" textLength="86" lengthAdjust="spacingAndGlyphs">298,9333</text>
<text x="875.5500000000001" y="718.75" font-size="16" fill="#e4e4e4" textLength="86" lengthAdjust="spacingAndGlyphs">293,5818</text>
<text x="975.4000000000001" y="718.75" font-size="16" fill="#e4e4e4" textLength="86" lengthAdjust="spacingAndGlyphs">289,0543</text>
<text x="1075.25" y="718.75" font-size="16" fill="#e4e4e4" textLength="86" lengthAdjust="spacingAndGlyphs">285,2847</text>
<text x="1175.1" y="718.75" font-size="16" fill="#e4e4e4" textLength="86" lengthAdjust="spacingAndGlyphs">282,2694</text>
<rect x="586.70" y="725.12" width="682.50" height="24.47" fill="#414141"/>
<text x="604" y="743.02" font-size="16" fill="#ffffff" font-weight="bold" textLength="84" lengthAdjust="spacingAndGlyphs">ΔE 2000</text>
<text x="775.7" y="743.02" font-size="16" fill="#e4e4e4" textLength="63" lengthAdjust="spacingAndGlyphs">4,5624</text>
<text x="875.5500000000001" y="743.02" font-size="16" fill="#e4e4e4" textLength="63" lengthAdjust="spacingAndGlyphs">3,7140</text>
<text x="975.4000000000001" y="743.02" font-size="16" fill="#e4e4e4" textLength="63" lengthAdjust="spacingAndGlyphs">3,2709</text>
<text x="1075.25" y="743.02" font-size="16" fill="#e4e4e4" textLength="63" lengthAdjust="spacingAndGlyphs">2,9818</text>
<text x="1175.1" y="743.02" font-size="16" fill="#e4e4e4" textLength="63" lengthAdjust="spacingAndGlyphs">2,5872</text>
<rect x="586.70" y="749.39" width="682.50" height="24.47" fill="#828282"/>
<text x="604" y="767.29" font-size="16" fill="#ffffff" font-weight="bold" textLength="67" lengthAdjust="spacingAndGlyphs">ΔE ITP</text>
<text x="775.7" y="767.29" font-size="16" fill="#e4e4e4" textLength="63" lengthAdjust="spacingAndGlyphs">8,7494</text>
<text x="875.5500000000001" y="767.29" font-size="16" fill="#e4e4e4" textLength="63" lengthAdjust="spacingAndGlyphs">9,1492</text>
<text x="975.4000000000001" y="767.29" font-size="16" fill="#e4e4e4" textLength="63" lengthAdjust="spacingAndGlyphs">8,4096</text>
<text x="1075.25" y="767.29" font-size="16" fill="#e4e4e4" textLength="63" lengthAdjust="spacingAndGlyphs">7,7933</text>
<text x="1175.1" y="767.29" font-size="16" fill="#e4e4e4" textLength="63" lengthAdjust="spacingAndGlyphs">7,9783</text>
<text x="819.6" y="571.6" font-size="13.6" fill="#f6f6f6" text-anchor="middle" font-weight="bold" textLength="37" lengthAdjust="spacingAndGlyphs">20%</text>
<text x="919.45" y="571.6" font-size="13.6" fill="#f6f6f6" text-anchor="middle" font-weight="bold" textLength="37" lengthAdjust="spacingAndGlyphs">40%</text>
<text x="1019.3" y="571.6" font-size="13.6" fill="#f6f6f6" text-anchor="middle" font-weight="bold" textLength="37" lengthAdjust="spacingAndGlyphs">60%</text>
<text x="1119.15" y="571.6" font-size="13.6" fill="#f6f6f6" text-anchor="middle" font-weight="bold" textLength="37" lengthAdjust="spacingAndGlyphs">80%</text>
<text x="1219.0" y="571.6" font-size="13.6" fill="#f6f6f6" text-anchor="middle" font-weight="bold" textLength="48" lengthAdjust="spacingAndGlyphs">100%</text>
<rect x="0.00" y="790.00" width="1556.00" height="57.00" fill="url(#bar)"/>
<rect x="43.00" y="790.00" width="764.50" height="57.00" fill="#2f2f2f"/>
<path d="M0 790H39.9a3 3 0 0 1 3 3V847H0Z" fill="url(#cell)"/>
<circle cx="20.5" cy="799.2" r="7.7" fill="url(#circ)"/>
<path d="M15.9 800.6h8.4l-4.2-4.2z" fill="#222"/>
<rect x="3.40" y="816.00" width="34.80" height="30.00" fill="#ffff00" stroke="#b4b400" stroke-width="1" rx="3.5"/>
<path d="M49.3 847V793a3 3 0 0 1 3-3H195.7a3 3 0 0 1 3 3V847Z" fill="url(#cell)" stroke="#5a5a5a" stroke-width="1"/>
<rect x="54.70" y="795.10" width="139.60" height="35.80" fill="#bfc0a0" stroke="#55552a" stroke-width="0.8" rx="3.5" stroke-opacity="0.45"/>
<text x="124.0" y="846" font-size="11.5" fill="#262626" text-anchor="middle">20%</text>
<path d="M201.2 847V793a3 3 0 0 1 3-3H347.6a3 3 0 0 1 3 3V847Z" fill="url(#cell)" stroke="#5a5a5a" stroke-width="1"/>
<rect x="206.60" y="795.10" width="139.60" height="35.80" fill="#c0c084" stroke="#55552a" stroke-width="0.8" rx="3.5" stroke-opacity="0.45"/>
<text x="275.9" y="846" font-size="11.5" fill="#262626" text-anchor="middle">40%</text>
<path d="M353.1 847V793a3 3 0 0 1 3-3H499.5a3 3 0 0 1 3 3V847Z" fill="url(#cell)" stroke="#5a5a5a" stroke-width="1"/>
<rect x="358.50" y="795.10" width="139.60" height="35.80" fill="#c0c06b" stroke="#55552a" stroke-width="0.8" rx="3.5" stroke-opacity="0.45"/>
<text x="427.8" y="846" font-size="11.5" fill="#262626" text-anchor="middle">60%</text>
<path d="M505.0 847V793a3 3 0 0 1 3-3H651.4a3 3 0 0 1 3 3V847Z" fill="url(#cell)" stroke="#5a5a5a" stroke-width="1"/>
<rect x="510.40" y="795.10" width="139.60" height="35.80" fill="#c2c04a" stroke="#55552a" stroke-width="0.8" rx="3.5" stroke-opacity="0.45"/>
<text x="579.7" y="846" font-size="11.5" fill="#262626" text-anchor="middle">80%</text>
<path d="M656.9 847V793a3 3 0 0 1 3-3H803.3a3 3 0 0 1 3 3V847Z" fill="url(#cellsel)" stroke="#1c1c1c" stroke-width="1"/>
<rect x="662.30" y="795.10" width="139.60" height="35.80" fill="#c5c100" stroke="#3a3a00" stroke-width="0.8" rx="3.5" stroke-opacity="0.45"/>
<text x="731.5999999999999" y="846" font-size="11.5" fill="#ffffff" text-anchor="middle" font-weight="bold">100%</text>
<path d="M1240.1 808V794a4 4 0 0 1 4-4H1288V808Z" fill="url(#btn2)" stroke="#4a4a4a" stroke-width="0.8"/>
<circle cx="1264.4" cy="799.2" r="7.7" fill="url(#circ)"/>
<path d="M1259.9 800.6h8.4l-4.2-4.2z" fill="#222"/>
<rect x="1240.10" y="808.60" width="47.90" height="40.00" fill="url(#btn)" stroke="#4a4a4a" stroke-width="0.8"/>
<rect x="1249.20" y="815.00" width="29.50" height="30.00" fill="#b2b2b2" stroke="#282828" stroke-width="2.2" rx="4"/>
<rect x="1250.30" y="829.50" width="27.30" height="14.40" fill="#8c8c8c"/>
<rect x="1249.2" y="815" width="29.5" height="30" fill="none" stroke="#282828" stroke-width="2.2" rx="4"/>
<rect x="1257.00" y="823.00" width="13.80" height="13.60" fill="#000"/>
<rect x="1289.40" y="789.80" width="45.90" height="30.30" fill="url(#btn)" stroke="#3c3c3c" stroke-width="1"/>
<rect x="1335.30" y="789.80" width="44.70" height="30.30" fill="url(#btn)" stroke="#3c3c3c" stroke-width="1"/>
<rect x="1380.00" y="789.80" width="45.60" height="30.30" fill="url(#btn)" stroke="#3c3c3c" stroke-width="1"/>
<rect x="1425.60" y="789.80" width="44.90" height="30.30" fill="url(#btn)" stroke="#3c3c3c" stroke-width="1"/>
<rect x="1470.50" y="789.80" width="44.80" height="30.30" fill="url(#btn)" stroke="#3c3c3c" stroke-width="1"/>
<circle cx="1311.9" cy="805" r="10" fill="url(#circ)"/>
<circle cx="1357.5" cy="805" r="10" fill="url(#circ)"/>
<circle cx="1403.1" cy="805" r="10" fill="url(#circ)"/>
<circle cx="1448.1" cy="805" r="10" fill="url(#circ)"/>
<circle cx="1492.7" cy="805" r="10" fill="url(#circ)"/>
<rect x="1308.00" y="801.00" width="8.00" height="8.00" fill="#2a2a2a"/>
<path d="M1354.8 800.2L1363.6 805.4L1354.8 810.6Z" fill="#2a2a2a"/>
<path d="M1400.6 800.4H1398V810H1400.6M1405.6 800.4H1408.2V810H1405.6" fill="none" stroke="#2a2a2a" stroke-width="2"/>
<path d="M1400.7 805.2h1.7M1403.8 805.2h1.7" stroke="#2a2a2a" stroke-width="1.9"/>
<text x="1448.2" y="810.2" font-size="16" fill="#2a2a2a" text-anchor="middle" font-weight="bold" textLength="14" lengthAdjust="spacingAndGlyphs">∞</text>
<path d="M1487.6 803.6a5.3 5.3 0 0 1 9.4 -2.2M1497.8 806.4a5.3 5.3 0 0 1 -9.4 2.2" fill="none" stroke="#2a2a2a" stroke-width="1.9"/>
<path d="M1498.9 798.8l-0.6 4.6l-4.4 -1.6zM1486.5 811.2l0.6 -4.6l4.4 1.6z" fill="#2a2a2a"/>
<circle cx="1538.9" cy="805" r="10" fill="url(#dcirc)"/>
<path d="M1289.4 847V825a4 4 0 0 1 4-4H1425.6V847Z" fill="url(#btn2)" stroke="#3c3c3c" stroke-width="1"/>
<rect x="1425.60" y="821.20" width="140.00" height="30.00" fill="url(#btn2)" stroke="#3c3c3c" stroke-width="1"/>
<circle cx="1319.7" cy="836.3" r="10" fill="url(#circ)"/>
<circle cx="1533.3" cy="836.1" r="10" fill="url(#circ)"/>
<path d="M1319.4 831.6l-3.6 4.7l3.6 4.7M1324 831.6l-3.6 4.7l3.6 4.7" fill="none" stroke="#2a2a2a" stroke-width="1.4"/>
<path d="M1529 831.4l3.6 4.7l-3.6 4.7M1533.6 831.4l3.6 4.7l-3.6 4.7" fill="none" stroke="#2a2a2a" stroke-width="1.4"/>
<text x="1347.1" y="844" font-size="22" fill="#2e2e2e" textLength="49.6" lengthAdjust="spacingAndGlyphs" stroke="#2e2e2e" stroke-width="0.5">Back</text>
<text x="1454.1" y="843.8" font-size="22" fill="#2e2e2e" textLength="50.7" lengthAdjust="spacingAndGlyphs" stroke="#2e2e2e" stroke-width="0.5">Next</text>
</svg>
</body></html>
